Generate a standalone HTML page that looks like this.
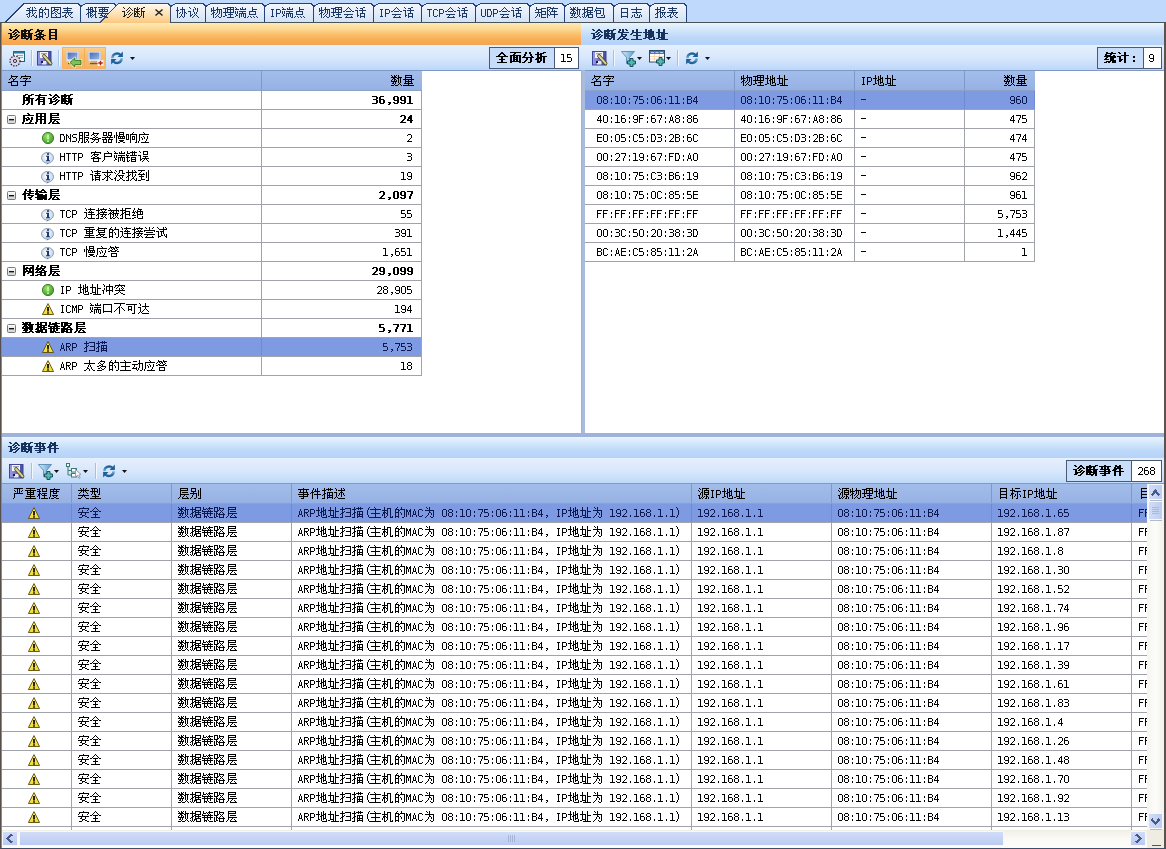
<!DOCTYPE html>
<html><head><meta charset="utf-8"><style>
html,body{margin:0;padding:0;width:1166px;height:849px;overflow:hidden;background:#bed9fc;font-family:"Liberation Sans",sans-serif}
.tl{position:absolute;left:0;top:0;width:1166px;height:849px;overflow:hidden}
.tl span{position:absolute;font:12px/12px "Liberation Mono",monospace;color:transparent;white-space:pre}
</style></head><body>
<svg width="1166" height="849" viewBox="0 0 1166 849" style="position:absolute;left:0;top:0">
<defs><linearGradient id="gOrange" x1="0" y1="0" x2="0" y2="1"><stop offset="0" stop-color="#fdebb8"/><stop offset="0.3" stop-color="#fcd68e"/><stop offset="0.6" stop-color="#fab862"/><stop offset="0.85" stop-color="#f9a84e"/><stop offset="1" stop-color="#eaa65e"/></linearGradient><linearGradient id="gLight" x1="0" y1="0" x2="0" y2="1"><stop offset="0" stop-color="#eaf4fd"/><stop offset="0.3" stop-color="#d4e7fb"/><stop offset="0.65" stop-color="#bdd8f9"/><stop offset="1" stop-color="#b5d3f8"/></linearGradient><linearGradient id="gTool" x1="0" y1="0" x2="0" y2="1"><stop offset="0" stop-color="#e6f0fd"/><stop offset="0.5" stop-color="#d8e7fc"/><stop offset="1" stop-color="#bcd8fa"/></linearGradient><linearGradient id="gTab" x1="0" y1="0" x2="0" y2="1"><stop offset="0" stop-color="#f3f7fd"/><stop offset="1" stop-color="#d3e2f7"/></linearGradient><linearGradient id="gTabAct" x1="0" y1="0" x2="0" y2="1"><stop offset="0" stop-color="#fefaf2"/><stop offset="0.5" stop-color="#fde3b8"/><stop offset="1" stop-color="#fcc57c"/></linearGradient><linearGradient id="gHdr" x1="0" y1="0" x2="0" y2="1"><stop offset="0" stop-color="#a3bdea"/><stop offset="1" stop-color="#95b1e4"/></linearGradient><linearGradient id="gBtn" x1="0" y1="0" x2="0" y2="1"><stop offset="0" stop-color="#fbcd8c"/><stop offset="0.4" stop-color="#f9bc68"/><stop offset="1" stop-color="#f8b45c"/></linearGradient><linearGradient id="gExp" x1="0" y1="0" x2="0" y2="1"><stop offset="0" stop-color="#ffffff"/><stop offset="1" stop-color="#d0d0d0"/></linearGradient><linearGradient id="gSbV" x1="0" y1="0" x2="1" y2="0"><stop offset="0" stop-color="#f6f4ee"/><stop offset="0.5" stop-color="#fcfcfa"/><stop offset="1" stop-color="#f3f1ea"/></linearGradient><linearGradient id="gSbH" x1="0" y1="0" x2="0" y2="1"><stop offset="0" stop-color="#f1eee4"/><stop offset="0.5" stop-color="#fbfaf6"/><stop offset="1" stop-color="#fdfcf8"/></linearGradient><linearGradient id="gSbBtnV" x1="0" y1="0" x2="1" y2="0"><stop offset="0" stop-color="#d2def8"/><stop offset="1" stop-color="#bccbf0"/></linearGradient><linearGradient id="gSbBtnH" x1="0" y1="0" x2="0" y2="1"><stop offset="0" stop-color="#d2def8"/><stop offset="1" stop-color="#b9c9f1"/></linearGradient>
<linearGradient id="gScr" x1="0" y1="0" x2="1" y2="1"><stop offset="0" stop-color="#4a68b8"/><stop offset="1" stop-color="#98b8ec"/></linearGradient>
<linearGradient id="gRef" x1="0" y1="0" x2="0" y2="1"><stop offset="0" stop-color="#1f5e96"/><stop offset="1" stop-color="#6fb4dc"/></linearGradient>
<linearGradient id="gRef2" x1="0" y1="0" x2="0" y2="1"><stop offset="0" stop-color="#6fb4dc"/><stop offset="1" stop-color="#1f5e96"/></linearGradient>
<radialGradient id="gOk" cx="0.4" cy="0.35" r="0.7"><stop offset="0" stop-color="#9ee070"/><stop offset="1" stop-color="#3f9a25"/></radialGradient><radialGradient id="gInfo" cx="0.45" cy="0.45" r="0.6"><stop offset="0" stop-color="#ffffff"/><stop offset="1" stop-color="#bfd2ea"/></radialGradient><linearGradient id="gWarn" x1="0" y1="0" x2="0" y2="1"><stop offset="0" stop-color="#fff27a"/><stop offset="1" stop-color="#eedc2a"/></linearGradient>
<linearGradient id="gFlop" x1="0" y1="0" x2="1" y2="0"><stop offset="0" stop-color="#9a9ee6"/><stop offset="1" stop-color="#444aa0"/></linearGradient>
<linearGradient id="gFun" x1="0" y1="0" x2="1" y2="0"><stop offset="0" stop-color="#d4ecfa"/><stop offset="1" stop-color="#5a9fd0"/></linearGradient>
<g id="ic_ok"><circle cx="6" cy="6" r="5.6" fill="url(#gOk)" stroke="#2f7a1a" stroke-width="0.9"/><rect x="5" y="2.5" width="2" height="5" fill="#b8f598"/><rect x="5" y="8.5" width="2" height="1.5" fill="#b8f598"/></g>
<g id="ic_info"><ellipse cx="6.5" cy="5.8" rx="6" ry="5.4" fill="url(#gInfo)" stroke="#8596ae" stroke-width="0.9"/><path d="M6.2 11 L5.5 12.8 L8 11" fill="#5a6f8a"/><rect x="6" y="1.2" width="2" height="1.6" fill="#1c3a6c"/><path d="M5 3.8 H8 V8.3 H9 V9.3 H5 V8.3 H6 V4.8 H5 Z" fill="#1c3a6c"/></g>
<g id="ic_warn"><path d="M6 0.6 L11.6 11.5 H0.4 Z" fill="url(#gWarn)" stroke="#5a4a0a" stroke-width="0.9" stroke-linejoin="round"/><rect x="5" y="4" width="2" height="4.5" fill="#2a2200"/><rect x="5" y="9.3" width="2" height="1.4" fill="#2a2200"/></g>
<g id="ic_save"><rect x="0.5" y="0.5" width="13.5" height="13.5" fill="url(#gFlop)" stroke="#3e4496"/><rect x="3" y="1" width="8" height="6" fill="#f6f6fa"/><rect x="4" y="2.3" width="6" height="0.9" fill="#7880a0"/><rect x="5" y="10" width="4.5" height="3.5" fill="#e6e8f2"/><rect x="4" y="10" width="2" height="2" fill="#141860"/><path d="M7 5 L13.6 12.4" stroke="#4a4418" stroke-width="3.6" stroke-linecap="round"/><path d="M7 5 L13.6 12.4" stroke="#ddd596" stroke-width="2" stroke-linecap="round"/></g>
<g id="ic_settings"><rect x="4.5" y="0.5" width="11" height="10" fill="#eef5fb" stroke="#1f5f80"/><rect x="4.5" y="0.5" width="11" height="2" fill="#2a7aa0"/><rect x="8" y="4" width="6" height="1" fill="#8ab"/><rect x="8" y="6" width="6" height="1" fill="#8ab"/><circle cx="6" cy="10" r="5" fill="#dcd4f0" stroke="#222" stroke-width="1.2" stroke-dasharray="1.4 1.3"/><circle cx="6" cy="10" r="1.6" fill="none" stroke="#333" stroke-width="1"/></g>
<g id="ic_mon"><rect x="0.5" y="0.5" width="12" height="9.5" fill="#fafafa" stroke="#d0d0d0"/><rect x="1.5" y="1.5" width="10" height="7" fill="url(#gScr)"/><rect x="3" y="10.5" width="6" height="1" fill="#9a9a9a"/><rect x="2" y="12" width="8" height="1.2" fill="#5a5a5a"/></g>
<g id="ic_mon_arrow"><use href="#ic_mon"/><path d="M4 11.5 L8.8 6.8 V9.3 H15 V13.7 H8.8 V16.2 Z" fill="none" stroke="#fffbe8" stroke-width="2.2" stroke-linejoin="round"/><path d="M4 11.5 L8.8 6.8 V9.3 H15 V13.7 H8.8 V16.2 Z" fill="#7cc454" stroke="#2f6a1a" stroke-width="0.9" stroke-linejoin="round"/></g>
<g id="ic_mon_cross"><use href="#ic_mon"/><rect x="9.5" y="9" width="6" height="6" fill="#f4f4f4"/><path d="M12.5 9.8 V14.2 M10.3 12 H14.7" stroke="#b81c1c" stroke-width="1.3"/></g>
<g id="ic_refresh"><path d="M2.4 7.2 A4.6 4.6 0 0 1 10.5 4.1" stroke="url(#gRef)" stroke-width="2.4" fill="none"/><path d="M12.9 0.5 V5.9 H7.5 Z" fill="#1d5f98"/><path d="M11.6 7.3 A4.6 4.6 0 0 1 3.5 10.4" stroke="url(#gRef2)" stroke-width="2.4" fill="none"/><path d="M1.1 8.1 H6.5 L1.1 13.5 Z" fill="#1d5f98"/></g>
<g id="ic_drop"><path d="M0 0 H5 L2.5 3 Z" fill="#111"/></g>
<g id="ic_filter"><path d="M0.5 0.5 H13.5 L8.5 6.5 V11 L5.5 12.5 V6.5 Z" fill="url(#gFun)" stroke="#5a8ab0" stroke-width="0.9" stroke-linejoin="round"/><path d="M9 7.5 h3 v2.5 h2.5 v3 h-2.5 v2.5 h-3 v-2.5 h-2.5 v-3 h2.5 z" fill="#52b8b4" stroke="#17505a" stroke-width="1"/></g>
<g id="ic_table"><rect x="0.5" y="0.5" width="15" height="11.5" fill="#fff" stroke="#2f4a66"/><rect x="1" y="1" width="14" height="3" fill="#3f7ac8"/><path d="M2 2.5 H5 M6.5 2.5 H9.5 M11 2.5 H14" stroke="#cfe2f8" stroke-width="0.8"/><path d="M1 6.5 H15 M1 9 H15 M5.5 4 V12 M10.5 4 V12" stroke="#f2cfae" stroke-width="0.8"/><path d="M10 7.5 h3 v2.5 h2.5 v3 h-2.5 v2.5 h-3 v-2.5 h-2.5 v-3 h2.5 z" fill="#52b8b4" stroke="#17505a" stroke-width="1"/></g>
<g id="ic_hier"><rect x="0.5" y="0.5" width="3" height="3" fill="#fff" stroke="#3a7a70"/><path d="M2 3.5 V12 H5 M2 7.5 H5" stroke="#3a7a70" fill="none"/><rect x="5.5" y="5.5" width="5" height="3.5" fill="#fff" stroke="#3a7a70"/><rect x="5.5" y="10.5" width="5" height="3.5" fill="#fff" stroke="#3a7a70"/><path d="M9.5 6.5 V14 L11.5 12.5 L13 15.5 L14.2 14.8 L12.8 12 L15 11.5 Z" fill="#f2f4f8" stroke="#8a98a8" stroke-width="0.9" stroke-linejoin="round"/></g>
<path shape-rendering="crispEdges" id="r6211" d="M4 -10h1v1h-1zM6 -10h1v1h-1zM8 -10h1v1h-1zM1 -9h3v1h-3zM6 -9h1v1h-1zM9 -9h1v1h-1zM3 -8h1v1h-1zM6 -8h1v1h-1zM0 -7h11v1h-11zM3 -6h1v1h-1zM6 -6h1v1h-1zM3 -5h2v1h-2zM6 -5h1v1h-1zM9 -5h1v1h-1zM2 -4h2v1h-2zM6 -4h1v1h-1zM8 -4h1v1h-1zM0 -3h2v1h-2zM3 -3h1v1h-1zM7 -3h1v1h-1zM3 -2h1v1h-1zM6 -2h2v1h-2zM10 -2h1v1h-1zM1 -1h1v1h-1zM3 -1h1v1h-1zM5 -1h1v1h-1zM8 -1h1v1h-1zM10 -1h1v1h-1zM2 0h1v1h-1zM9 0h2v1h-2z"/><path shape-rendering="crispEdges" id="r7684" d="M3 -10h1v1h-1zM7 -10h1v1h-1zM2 -9h1v1h-1zM7 -9h1v1h-1zM1 -8h4v1h-4zM6 -8h5v1h-5zM1 -7h1v1h-1zM4 -7h2v1h-2zM10 -7h1v1h-1zM1 -6h1v1h-1zM4 -6h1v1h-1zM10 -6h1v1h-1zM1 -5h4v1h-4zM6 -5h1v1h-1zM10 -5h1v1h-1zM1 -4h1v1h-1zM4 -4h1v1h-1zM7 -4h1v1h-1zM10 -4h1v1h-1zM1 -3h1v1h-1zM4 -3h1v1h-1zM7 -3h1v1h-1zM10 -3h1v1h-1zM1 -2h1v1h-1zM4 -2h1v1h-1zM10 -2h1v1h-1zM1 -1h4v1h-4zM10 -1h1v1h-1zM1 0h1v1h-1zM4 0h1v1h-1zM8 0h2v1h-2z"/><path shape-rendering="crispEdges" id="r56fe" d="M1 -10h10v1h-10zM1 -9h1v1h-1zM4 -9h1v1h-1zM10 -9h1v1h-1zM1 -8h1v1h-1zM4 -8h5v1h-5zM10 -8h1v1h-1zM1 -7h1v1h-1zM3 -7h2v1h-2zM7 -7h1v1h-1zM10 -7h1v1h-1zM1 -6h2v1h-2zM5 -6h2v1h-2zM10 -6h1v1h-1zM1 -5h1v1h-1zM4 -5h1v1h-1zM7 -5h1v1h-1zM10 -5h1v1h-1zM1 -4h3v1h-3zM5 -4h1v1h-1zM8 -4h3v1h-3zM1 -3h1v1h-1zM6 -3h1v1h-1zM10 -3h1v1h-1zM1 -2h1v1h-1zM5 -2h1v1h-1zM10 -2h1v1h-1zM1 -1h1v1h-1zM6 -1h1v1h-1zM10 -1h1v1h-1zM1 0h10v1h-10z"/><path shape-rendering="crispEdges" id="r8868" d="M5 -10h1v1h-1zM1 -9h9v1h-9zM5 -8h1v1h-1zM2 -7h7v1h-7zM5 -6h1v1h-1zM0 -5h11v1h-11zM4 -4h1v1h-1zM6 -4h1v1h-1zM9 -4h1v1h-1zM3 -3h1v1h-1zM6 -3h1v1h-1zM8 -3h1v1h-1zM2 -2h2v1h-2zM7 -2h1v1h-1zM0 -1h2v1h-2zM3 -1h1v1h-1zM5 -1h1v1h-1zM8 -1h1v1h-1zM3 0h2v1h-2zM9 0h2v1h-2z"/><path shape-rendering="crispEdges" id="r6982" d="M2 -10h1v1h-1zM4 -10h3v1h-3zM8 -10h3v1h-3zM2 -9h1v1h-1zM4 -9h1v1h-1zM6 -9h1v1h-1zM9 -9h1v1h-1zM0 -8h7v1h-7zM9 -8h1v1h-1zM2 -7h1v1h-1zM4 -7h1v1h-1zM6 -7h2v1h-2zM9 -7h1v1h-1zM2 -6h1v1h-1zM4 -6h7v1h-7zM2 -5h3v1h-3zM6 -5h1v1h-1zM9 -5h1v1h-1zM1 -4h2v1h-2zM4 -4h2v1h-2zM9 -4h1v1h-1zM0 -3h1v1h-1zM2 -3h1v1h-1zM4 -3h1v1h-1zM6 -3h1v1h-1zM8 -3h2v1h-2zM2 -2h1v1h-1zM4 -2h2v1h-2zM7 -2h1v1h-1zM9 -2h1v1h-1zM2 -1h1v1h-1zM4 -1h1v1h-1zM6 -1h1v1h-1zM9 -1h1v1h-1zM2 0h1v1h-1zM5 0h1v1h-1zM9 0h2v1h-2z"/><path shape-rendering="crispEdges" id="r8981" d="M0 -10h11v1h-11zM4 -9h1v1h-1zM6 -9h1v1h-1zM1 -8h9v1h-9zM1 -7h1v1h-1zM4 -7h1v1h-1zM6 -7h1v1h-1zM9 -7h1v1h-1zM1 -6h9v1h-9zM4 -5h1v1h-1zM0 -4h11v1h-11zM3 -3h1v1h-1zM7 -3h1v1h-1zM2 -2h3v1h-3zM6 -2h1v1h-1zM4 -1h4v1h-4zM1 0h3v1h-3zM8 0h2v1h-2z"/><path shape-rendering="crispEdges" id="r534f" d="M1 -10h1v1h-1zM6 -10h1v1h-1zM1 -9h1v1h-1zM6 -9h1v1h-1zM1 -8h1v1h-1zM4 -8h5v1h-5zM0 -7h3v1h-3zM6 -7h1v1h-1zM8 -7h1v1h-1zM1 -6h1v1h-1zM6 -6h1v1h-1zM8 -6h1v1h-1zM1 -5h1v1h-1zM4 -5h1v1h-1zM6 -5h1v1h-1zM8 -5h2v1h-2zM1 -4h1v1h-1zM3 -4h1v1h-1zM6 -4h1v1h-1zM8 -4h1v1h-1zM10 -4h1v1h-1zM1 -3h1v1h-1zM5 -3h1v1h-1zM8 -3h1v1h-1zM1 -2h1v1h-1zM5 -2h1v1h-1zM8 -2h1v1h-1zM1 -1h1v1h-1zM4 -1h1v1h-1zM6 -1h1v1h-1zM8 -1h1v1h-1zM1 0h1v1h-1zM3 0h1v1h-1zM7 0h1v1h-1z"/><path shape-rendering="crispEdges" id="r8bae" d="M1 -10h1v1h-1zM6 -10h1v1h-1zM2 -9h1v1h-1zM7 -9h1v1h-1zM9 -9h1v1h-1zM5 -8h1v1h-1zM7 -8h1v1h-1zM9 -8h1v1h-1zM5 -7h1v1h-1zM9 -7h1v1h-1zM0 -6h3v1h-3zM5 -6h1v1h-1zM9 -6h1v1h-1zM2 -5h1v1h-1zM6 -5h1v1h-1zM8 -5h1v1h-1zM2 -4h1v1h-1zM6 -4h1v1h-1zM8 -4h1v1h-1zM2 -3h1v1h-1zM4 -3h1v1h-1zM7 -3h1v1h-1zM2 -2h2v1h-2zM6 -2h1v1h-1zM8 -2h1v1h-1zM2 -1h1v1h-1zM5 -1h1v1h-1zM9 -1h1v1h-1zM4 0h1v1h-1zM10 0h1v1h-1z"/><path shape-rendering="crispEdges" id="r7269" d="M2 -10h1v1h-1zM6 -10h1v1h-1zM0 -9h1v1h-1zM2 -9h1v1h-1zM6 -9h1v1h-1zM0 -8h1v1h-1zM2 -8h1v1h-1zM5 -8h6v1h-6zM0 -7h5v1h-5zM6 -7h1v1h-1zM8 -7h1v1h-1zM10 -7h1v1h-1zM0 -6h1v1h-1zM2 -6h1v1h-1zM6 -6h1v1h-1zM8 -6h1v1h-1zM10 -6h1v1h-1zM2 -5h2v1h-2zM6 -5h1v1h-1zM8 -5h1v1h-1zM10 -5h1v1h-1zM1 -4h2v1h-2zM5 -4h1v1h-1zM8 -4h1v1h-1zM10 -4h1v1h-1zM0 -3h1v1h-1zM2 -3h1v1h-1zM4 -3h1v1h-1zM7 -3h1v1h-1zM10 -3h1v1h-1zM2 -2h1v1h-1zM6 -2h1v1h-1zM10 -2h1v1h-1zM2 -1h1v1h-1zM5 -1h1v1h-1zM7 -1h1v1h-1zM10 -1h1v1h-1zM2 0h1v1h-1zM4 0h1v1h-1zM8 0h2v1h-2z"/><path shape-rendering="crispEdges" id="r7406" d="M4 -10h7v1h-7zM0 -9h5v1h-5zM7 -9h1v1h-1zM10 -9h1v1h-1zM2 -8h1v1h-1zM4 -8h7v1h-7zM2 -7h1v1h-1zM4 -7h1v1h-1zM7 -7h1v1h-1zM10 -7h1v1h-1zM2 -6h1v1h-1zM4 -6h1v1h-1zM7 -6h1v1h-1zM10 -6h1v1h-1zM0 -5h11v1h-11zM2 -4h1v1h-1zM7 -4h1v1h-1zM2 -3h1v1h-1zM5 -3h5v1h-5zM2 -2h2v1h-2zM7 -2h1v1h-1zM0 -1h2v1h-2zM7 -1h1v1h-1zM4 0h7v1h-7z"/><path shape-rendering="crispEdges" id="r7aef" d="M0 -10h1v1h-1zM7 -10h1v1h-1zM1 -9h1v1h-1zM5 -9h1v1h-1zM7 -9h1v1h-1zM10 -9h1v1h-1zM0 -8h4v1h-4zM5 -8h6v1h-6zM0 -6h1v1h-1zM2 -6h1v1h-1zM4 -6h7v1h-7zM0 -5h1v1h-1zM2 -5h1v1h-1zM7 -5h1v1h-1zM0 -4h1v1h-1zM2 -4h1v1h-1zM4 -4h7v1h-7zM1 -3h1v1h-1zM4 -3h1v1h-1zM6 -3h1v1h-1zM8 -3h1v1h-1zM10 -3h1v1h-1zM1 -2h2v1h-2zM4 -2h1v1h-1zM6 -2h1v1h-1zM8 -2h1v1h-1zM10 -2h1v1h-1zM0 -1h1v1h-1zM4 -1h1v1h-1zM6 -1h1v1h-1zM8 -1h1v1h-1zM10 -1h1v1h-1zM4 0h1v1h-1zM9 0h2v1h-2z"/><path shape-rendering="crispEdges" id="r70b9" d="M5 -10h1v1h-1zM5 -9h1v1h-1zM5 -8h5v1h-5zM5 -7h1v1h-1zM2 -6h7v1h-7zM2 -5h1v1h-1zM8 -5h1v1h-1zM2 -4h1v1h-1zM8 -4h1v1h-1zM2 -3h7v1h-7zM1 -1h1v1h-1zM3 -1h1v1h-1zM6 -1h1v1h-1zM9 -1h1v1h-1zM0 0h1v1h-1zM4 0h1v1h-1zM7 0h1v1h-1zM10 0h1v1h-1z"/><path shape-rendering="crispEdges" id="r49" d="M1 -8h3v1h-3zM2 -7h1v1h-1zM2 -6h1v1h-1zM2 -5h1v1h-1zM2 -4h1v1h-1zM2 -3h1v1h-1zM2 -2h1v1h-1zM1 -1h3v1h-3z"/><path shape-rendering="crispEdges" id="r50" d="M0 -8h4v1h-4zM0 -7h1v1h-1zM4 -7h1v1h-1zM0 -6h1v1h-1zM4 -6h1v1h-1zM0 -5h1v1h-1zM4 -5h1v1h-1zM0 -4h4v1h-4zM0 -3h1v1h-1zM0 -2h1v1h-1zM0 -1h1v1h-1z"/><path shape-rendering="crispEdges" id="r4f1a" d="M5 -10h1v1h-1zM4 -9h1v1h-1zM6 -9h1v1h-1zM3 -8h1v1h-1zM7 -8h1v1h-1zM2 -7h1v1h-1zM8 -7h1v1h-1zM0 -6h2v1h-2zM3 -6h5v1h-5zM9 -6h2v1h-2zM1 -3h9v1h-9zM4 -2h1v1h-1zM3 -1h1v1h-1zM8 -1h1v1h-1zM2 0h8v1h-8z"/><path shape-rendering="crispEdges" id="r8bdd" d="M1 -10h1v1h-1zM8 -10h2v1h-2zM2 -9h1v1h-1zM5 -9h3v1h-3zM7 -8h1v1h-1zM0 -7h3v1h-3zM4 -7h7v1h-7zM2 -6h1v1h-1zM7 -6h1v1h-1zM2 -5h1v1h-1zM7 -5h1v1h-1zM2 -4h1v1h-1zM5 -4h5v1h-5zM2 -3h1v1h-1zM5 -3h1v1h-1zM9 -3h1v1h-1zM2 -2h2v1h-2zM5 -2h1v1h-1zM9 -2h1v1h-1zM2 -1h1v1h-1zM5 -1h5v1h-5zM5 0h1v1h-1zM9 0h1v1h-1z"/><path shape-rendering="crispEdges" id="r54" d="M0 -8h5v1h-5zM2 -7h1v1h-1zM2 -6h1v1h-1zM2 -5h1v1h-1zM2 -4h1v1h-1zM2 -3h1v1h-1zM2 -2h1v1h-1zM2 -1h1v1h-1z"/><path shape-rendering="crispEdges" id="r43" d="M1 -8h3v1h-3zM0 -7h1v1h-1zM4 -7h1v1h-1zM0 -6h1v1h-1zM0 -5h1v1h-1zM0 -4h1v1h-1zM0 -3h1v1h-1zM0 -2h1v1h-1zM4 -2h1v1h-1zM1 -1h3v1h-3z"/><path shape-rendering="crispEdges" id="r55" d="M0 -8h1v1h-1zM4 -8h1v1h-1zM0 -7h1v1h-1zM4 -7h1v1h-1zM0 -6h1v1h-1zM4 -6h1v1h-1zM0 -5h1v1h-1zM4 -5h1v1h-1zM0 -4h1v1h-1zM4 -4h1v1h-1zM0 -3h1v1h-1zM4 -3h1v1h-1zM0 -2h1v1h-1zM4 -2h1v1h-1zM1 -1h3v1h-3z"/><path shape-rendering="crispEdges" id="r44" d="M0 -8h4v1h-4zM0 -7h1v1h-1zM3 -7h1v1h-1zM0 -6h1v1h-1zM4 -6h1v1h-1zM0 -5h1v1h-1zM4 -5h1v1h-1zM0 -4h1v1h-1zM4 -4h1v1h-1zM0 -3h1v1h-1zM4 -3h1v1h-1zM0 -2h1v1h-1zM3 -2h1v1h-1zM0 -1h4v1h-4z"/><path shape-rendering="crispEdges" id="r77e9" d="M1 -10h1v1h-1zM1 -9h1v1h-1zM6 -9h5v1h-5zM1 -8h6v1h-6zM0 -7h1v1h-1zM3 -7h1v1h-1zM6 -7h1v1h-1zM3 -6h1v1h-1zM6 -6h5v1h-5zM0 -5h7v1h-7zM10 -5h1v1h-1zM3 -4h1v1h-1zM6 -4h1v1h-1zM10 -4h1v1h-1zM2 -3h1v1h-1zM4 -3h1v1h-1zM6 -3h5v1h-5zM2 -2h1v1h-1zM4 -2h1v1h-1zM6 -2h1v1h-1zM1 -1h1v1h-1zM4 -1h1v1h-1zM6 -1h1v1h-1zM0 0h1v1h-1zM6 0h5v1h-5z"/><path shape-rendering="crispEdges" id="r9635" d="M0 -10h4v1h-4zM6 -10h1v1h-1zM0 -9h1v1h-1zM3 -9h8v1h-8zM0 -8h1v1h-1zM2 -8h1v1h-1zM5 -8h1v1h-1zM0 -7h2v1h-2zM5 -7h1v1h-1zM7 -7h1v1h-1zM0 -6h1v1h-1zM2 -6h1v1h-1zM4 -6h6v1h-6zM0 -5h1v1h-1zM3 -5h1v1h-1zM7 -5h1v1h-1zM0 -4h1v1h-1zM3 -4h1v1h-1zM7 -4h1v1h-1zM0 -3h2v1h-2zM3 -3h8v1h-8zM0 -2h1v1h-1zM2 -2h1v1h-1zM7 -2h1v1h-1zM0 -1h1v1h-1zM7 -1h1v1h-1zM0 0h1v1h-1zM7 0h1v1h-1z"/><path shape-rendering="crispEdges" id="r6570" d="M0 -10h1v1h-1zM3 -10h1v1h-1zM5 -10h1v1h-1zM7 -10h1v1h-1zM1 -9h1v1h-1zM3 -9h2v1h-2zM7 -9h1v1h-1zM0 -8h6v1h-6zM7 -8h4v1h-4zM2 -7h2v1h-2zM6 -7h2v1h-2zM9 -7h1v1h-1zM1 -6h1v1h-1zM3 -6h2v1h-2zM7 -6h1v1h-1zM9 -6h1v1h-1zM0 -5h1v1h-1zM3 -5h1v1h-1zM5 -5h1v1h-1zM7 -5h1v1h-1zM9 -5h1v1h-1zM0 -4h6v1h-6zM7 -4h1v1h-1zM9 -4h1v1h-1zM2 -3h1v1h-1zM4 -3h1v1h-1zM7 -3h1v1h-1zM9 -3h1v1h-1zM1 -2h2v1h-2zM4 -2h1v1h-1zM8 -2h1v1h-1zM3 -1h1v1h-1zM7 -1h1v1h-1zM9 -1h1v1h-1zM0 0h3v1h-3zM4 0h3v1h-3zM10 0h1v1h-1z"/><path shape-rendering="crispEdges" id="r636e" d="M2 -10h1v1h-1zM5 -10h6v1h-6zM2 -9h1v1h-1zM5 -9h1v1h-1zM10 -9h1v1h-1zM0 -8h6v1h-6zM10 -8h1v1h-1zM2 -7h1v1h-1zM5 -7h6v1h-6zM2 -6h1v1h-1zM4 -6h2v1h-2zM8 -6h1v1h-1zM2 -5h2v1h-2zM5 -5h6v1h-6zM1 -4h2v1h-2zM5 -4h1v1h-1zM8 -4h1v1h-1zM0 -3h1v1h-1zM2 -3h1v1h-1zM5 -3h6v1h-6zM2 -2h1v1h-1zM4 -2h3v1h-3zM10 -2h1v1h-1zM0 -1h1v1h-1zM2 -1h1v1h-1zM4 -1h1v1h-1zM6 -1h1v1h-1zM10 -1h1v1h-1zM1 0h1v1h-1zM3 0h1v1h-1zM6 0h5v1h-5z"/><path shape-rendering="crispEdges" id="r5305" d="M2 -10h1v1h-1zM2 -9h8v1h-8zM1 -8h1v1h-1zM9 -8h1v1h-1zM1 -7h6v1h-6zM9 -7h1v1h-1zM0 -6h1v1h-1zM2 -6h1v1h-1zM6 -6h1v1h-1zM9 -6h1v1h-1zM2 -5h1v1h-1zM6 -5h1v1h-1zM9 -5h1v1h-1zM2 -4h5v1h-5zM9 -4h1v1h-1zM2 -3h1v1h-1zM9 -3h1v1h-1zM2 -2h1v1h-1zM7 -2h2v1h-2zM10 -2h1v1h-1zM2 -1h1v1h-1zM10 -1h1v1h-1zM3 0h8v1h-8z"/><path shape-rendering="crispEdges" id="r65e5" d="M2 -9h7v1h-7zM2 -8h1v1h-1zM8 -8h1v1h-1zM2 -7h1v1h-1zM8 -7h1v1h-1zM2 -6h1v1h-1zM8 -6h1v1h-1zM2 -5h7v1h-7zM2 -4h1v1h-1zM8 -4h1v1h-1zM2 -3h1v1h-1zM8 -3h1v1h-1zM2 -2h1v1h-1zM8 -2h1v1h-1zM2 -1h7v1h-7zM2 0h1v1h-1zM8 0h1v1h-1z"/><path shape-rendering="crispEdges" id="r5fd7" d="M5 -10h1v1h-1zM5 -9h1v1h-1zM0 -8h11v1h-11zM5 -7h1v1h-1zM5 -6h1v1h-1zM1 -5h9v1h-9zM5 -4h1v1h-1zM3 -3h1v1h-1zM6 -3h1v1h-1zM9 -3h1v1h-1zM1 -2h1v1h-1zM3 -2h1v1h-1zM6 -2h1v1h-1zM8 -2h1v1h-1zM10 -2h1v1h-1zM1 -1h1v1h-1zM3 -1h1v1h-1zM8 -1h1v1h-1zM10 -1h1v1h-1zM0 0h1v1h-1zM4 0h5v1h-5z"/><path shape-rendering="crispEdges" id="r62a5" d="M2 -10h1v1h-1zM5 -10h5v1h-5zM2 -9h1v1h-1zM5 -9h1v1h-1zM9 -9h1v1h-1zM0 -8h6v1h-6zM9 -8h1v1h-1zM2 -7h1v1h-1zM5 -7h1v1h-1zM7 -7h2v1h-2zM2 -6h1v1h-1zM4 -6h2v1h-2zM2 -5h2v1h-2zM5 -5h6v1h-6zM1 -4h2v1h-2zM5 -4h1v1h-1zM7 -4h1v1h-1zM9 -4h1v1h-1zM0 -3h1v1h-1zM2 -3h1v1h-1zM5 -3h1v1h-1zM7 -3h1v1h-1zM9 -3h1v1h-1zM2 -2h1v1h-1zM5 -2h1v1h-1zM8 -2h1v1h-1zM2 -1h1v1h-1zM5 -1h1v1h-1zM7 -1h1v1h-1zM9 -1h1v1h-1zM0 0h3v1h-3zM5 0h2v1h-2zM10 0h1v1h-1z"/><path shape-rendering="crispEdges" id="r8bca" d="M1 -10h1v1h-1zM7 -10h1v1h-1zM2 -9h1v1h-1zM6 -9h1v1h-1zM8 -9h1v1h-1zM5 -8h1v1h-1zM9 -8h1v1h-1zM4 -7h1v1h-1zM7 -7h1v1h-1zM10 -7h1v1h-1zM0 -6h3v1h-3zM6 -6h1v1h-1zM2 -5h1v1h-1zM5 -5h1v1h-1zM8 -5h1v1h-1zM2 -4h1v1h-1zM7 -4h1v1h-1zM10 -4h1v1h-1zM2 -3h1v1h-1zM4 -3h1v1h-1zM6 -3h1v1h-1zM9 -3h1v1h-1zM2 -2h2v1h-2zM8 -2h1v1h-1zM1 -1h2v1h-2zM7 -1h1v1h-1zM5 0h2v1h-2z"/><path shape-rendering="crispEdges" id="r65ad" d="M3 -10h1v1h-1zM9 -10h2v1h-2zM0 -9h2v1h-2zM3 -9h1v1h-1zM5 -9h1v1h-1zM7 -9h2v1h-2zM0 -8h1v1h-1zM2 -8h3v1h-3zM7 -8h1v1h-1zM0 -7h1v1h-1zM3 -7h1v1h-1zM7 -7h1v1h-1zM0 -6h6v1h-6zM7 -6h4v1h-4zM0 -5h1v1h-1zM2 -5h2v1h-2zM7 -5h1v1h-1zM9 -5h1v1h-1zM0 -4h2v1h-2zM3 -4h2v1h-2zM7 -4h1v1h-1zM9 -4h1v1h-1zM0 -3h2v1h-2zM3 -3h1v1h-1zM5 -3h1v1h-1zM7 -3h1v1h-1zM9 -3h1v1h-1zM0 -2h1v1h-1zM3 -2h1v1h-1zM7 -2h1v1h-1zM9 -2h1v1h-1zM0 -1h5v1h-5zM6 -1h1v1h-1zM9 -1h1v1h-1zM5 0h1v1h-1zM9 0h1v1h-1z"/><path shape-rendering="crispEdges" id="b8bca" d="M1 -10h2v1h-2zM7 -10h2v1h-2zM2 -9h2v1h-2zM6 -9h4v1h-4zM5 -8h2v1h-2zM9 -8h2v1h-2zM4 -7h2v1h-2zM7 -7h2v1h-2zM10 -7h2v1h-2zM0 -6h4v1h-4zM6 -6h2v1h-2zM2 -5h2v1h-2zM5 -5h2v1h-2zM8 -5h2v1h-2zM2 -4h2v1h-2zM7 -4h2v1h-2zM10 -4h2v1h-2zM2 -3h6v1h-6zM9 -3h2v1h-2zM2 -2h3v1h-3zM8 -2h2v1h-2zM1 -1h3v1h-3zM7 -1h2v1h-2zM5 0h3v1h-3z"/><path shape-rendering="crispEdges" id="b65ad" d="M3 -10h2v1h-2zM9 -10h3v1h-3zM0 -9h10v1h-10zM0 -8h6v1h-6zM7 -8h2v1h-2zM0 -7h2v1h-2zM3 -7h2v1h-2zM7 -7h2v1h-2zM0 -6h12v1h-12zM0 -5h5v1h-5zM7 -5h4v1h-4zM0 -4h6v1h-6zM7 -4h4v1h-4zM0 -3h11v1h-11zM0 -2h2v1h-2zM3 -2h2v1h-2zM7 -2h4v1h-4zM0 -1h8v1h-8zM9 -1h2v1h-2zM5 0h2v1h-2zM9 0h2v1h-2z"/><path shape-rendering="crispEdges" id="b6761" d="M3 -10h2v1h-2zM3 -9h7v1h-7zM2 -8h4v1h-4zM7 -8h2v1h-2zM1 -7h2v1h-2zM5 -7h3v1h-3zM4 -6h4v1h-4zM2 -5h8v1h-8zM0 -4h3v1h-3zM5 -4h2v1h-2zM9 -4h3v1h-3zM2 -3h8v1h-8zM3 -2h6v1h-6zM2 -1h2v1h-2zM5 -1h2v1h-2zM8 -1h2v1h-2zM0 0h7v1h-7zM9 0h2v1h-2z"/><path shape-rendering="crispEdges" id="b76ee" d="M2 -10h8v1h-8zM2 -9h2v1h-2zM8 -9h2v1h-2zM2 -8h2v1h-2zM8 -8h2v1h-2zM2 -7h8v1h-8zM2 -6h2v1h-2zM8 -6h2v1h-2zM2 -5h2v1h-2zM8 -5h2v1h-2zM2 -4h8v1h-8zM2 -3h2v1h-2zM8 -3h2v1h-2zM2 -2h2v1h-2zM8 -2h2v1h-2zM2 -1h8v1h-8zM2 0h2v1h-2zM8 0h2v1h-2z"/><path shape-rendering="crispEdges" id="b5168" d="M5 -10h2v1h-2zM4 -9h4v1h-4zM3 -8h2v1h-2zM7 -8h2v1h-2zM2 -7h2v1h-2zM8 -7h2v1h-2zM0 -6h12v1h-12zM5 -5h2v1h-2zM5 -4h2v1h-2zM3 -3h6v1h-6zM5 -2h2v1h-2zM5 -1h2v1h-2zM1 0h10v1h-10z"/><path shape-rendering="crispEdges" id="b9762" d="M1 -10h11v1h-11zM5 -9h2v1h-2zM4 -8h2v1h-2zM1 -7h11v1h-11zM1 -6h2v1h-2zM4 -6h2v1h-2zM7 -6h2v1h-2zM10 -6h2v1h-2zM1 -5h2v1h-2zM4 -5h5v1h-5zM10 -5h2v1h-2zM1 -4h2v1h-2zM4 -4h2v1h-2zM7 -4h2v1h-2zM10 -4h2v1h-2zM1 -3h2v1h-2zM4 -3h5v1h-5zM10 -3h2v1h-2zM1 -2h2v1h-2zM4 -2h2v1h-2zM7 -2h2v1h-2zM10 -2h2v1h-2zM1 -1h11v1h-11zM1 0h2v1h-2zM10 0h2v1h-2z"/><path shape-rendering="crispEdges" id="b5206" d="M3 -10h2v1h-2zM7 -10h2v1h-2zM3 -9h2v1h-2zM7 -9h2v1h-2zM2 -8h2v1h-2zM8 -8h2v1h-2zM2 -7h2v1h-2zM8 -7h2v1h-2zM1 -6h2v1h-2zM9 -6h2v1h-2zM0 -5h12v1h-12zM4 -4h2v1h-2zM8 -4h2v1h-2zM4 -3h2v1h-2zM8 -3h2v1h-2zM3 -2h2v1h-2zM8 -2h2v1h-2zM2 -1h2v1h-2zM8 -1h2v1h-2zM0 0h3v1h-3zM6 0h3v1h-3z"/><path shape-rendering="crispEdges" id="b6790" d="M2 -10h2v1h-2zM8 -10h3v1h-3zM2 -9h2v1h-2zM5 -9h4v1h-4zM0 -8h7v1h-7zM2 -7h2v1h-2zM5 -7h2v1h-2zM2 -6h2v1h-2zM5 -6h7v1h-7zM2 -5h5v1h-5zM8 -5h2v1h-2zM1 -4h6v1h-6zM8 -4h2v1h-2zM0 -3h4v1h-4zM5 -3h2v1h-2zM8 -3h2v1h-2zM2 -2h2v1h-2zM5 -2h2v1h-2zM8 -2h2v1h-2zM2 -1h4v1h-4zM8 -1h2v1h-2zM2 0h3v1h-3zM8 0h2v1h-2z"/><path shape-rendering="crispEdges" id="r31" d="M0 -8h3v1h-3zM2 -7h1v1h-1zM2 -6h1v1h-1zM2 -5h1v1h-1zM2 -4h1v1h-1zM2 -3h1v1h-1zM2 -2h1v1h-1zM0 -1h5v1h-5z"/><path shape-rendering="crispEdges" id="r35" d="M0 -8h4v1h-4zM0 -7h1v1h-1zM0 -6h1v1h-1zM0 -5h4v1h-4zM4 -4h1v1h-1zM4 -3h1v1h-1zM4 -2h1v1h-1zM0 -1h4v1h-4z"/><path shape-rendering="crispEdges" id="r540d" d="M3 -10h1v1h-1zM3 -9h7v1h-7zM3 -8h1v1h-1zM8 -8h1v1h-1zM2 -7h1v1h-1zM4 -7h1v1h-1zM7 -7h1v1h-1zM1 -6h1v1h-1zM5 -6h2v1h-2zM5 -5h1v1h-1zM3 -4h7v1h-7zM0 -3h4v1h-4zM9 -3h1v1h-1zM3 -2h1v1h-1zM9 -2h1v1h-1zM3 -1h1v1h-1zM9 -1h1v1h-1zM3 0h7v1h-7z"/><path shape-rendering="crispEdges" id="r5b57" d="M5 -10h1v1h-1zM1 -9h10v1h-10zM1 -8h1v1h-1zM10 -8h1v1h-1zM0 -7h1v1h-1zM3 -7h5v1h-5zM9 -7h1v1h-1zM6 -6h1v1h-1zM5 -5h1v1h-1zM0 -4h11v1h-11zM5 -3h1v1h-1zM5 -2h1v1h-1zM5 -1h1v1h-1zM3 0h3v1h-3z"/><path shape-rendering="crispEdges" id="r91cf" d="M2 -10h7v1h-7zM2 -9h1v1h-1zM8 -9h1v1h-1zM2 -8h7v1h-7zM2 -7h1v1h-1zM8 -7h1v1h-1zM0 -6h11v1h-11zM2 -5h1v1h-1zM5 -5h1v1h-1zM8 -5h1v1h-1zM2 -4h7v1h-7zM2 -3h1v1h-1zM5 -3h1v1h-1zM8 -3h1v1h-1zM1 -2h9v1h-9zM5 -1h1v1h-1zM0 0h11v1h-11z"/><path shape-rendering="crispEdges" id="b6240" d="M3 -10h3v1h-3zM9 -10h3v1h-3zM1 -9h3v1h-3zM6 -9h4v1h-4zM1 -8h2v1h-2zM6 -8h2v1h-2zM1 -7h7v1h-7zM1 -6h2v1h-2zM4 -6h8v1h-8zM1 -5h2v1h-2zM4 -5h4v1h-4zM9 -5h2v1h-2zM1 -4h7v1h-7zM9 -4h2v1h-2zM1 -3h2v1h-2zM6 -3h2v1h-2zM9 -3h2v1h-2zM1 -2h2v1h-2zM6 -2h2v1h-2zM9 -2h2v1h-2zM1 -1h2v1h-2zM5 -1h2v1h-2zM9 -1h2v1h-2zM0 0h2v1h-2zM4 0h2v1h-2zM9 0h2v1h-2z"/><path shape-rendering="crispEdges" id="b6709" d="M4 -10h2v1h-2zM0 -9h12v1h-12zM3 -8h2v1h-2zM3 -7h7v1h-7zM2 -6h3v1h-3zM8 -6h2v1h-2zM1 -5h9v1h-9zM0 -4h2v1h-2zM3 -4h2v1h-2zM8 -4h2v1h-2zM3 -3h7v1h-7zM3 -2h2v1h-2zM8 -2h2v1h-2zM3 -1h2v1h-2zM8 -1h2v1h-2zM3 0h2v1h-2zM7 0h3v1h-3z"/><path shape-rendering="crispEdges" id="b33" d="M0 -8h5v1h-5zM4 -7h2v1h-2zM4 -6h2v1h-2zM1 -5h4v1h-4zM4 -4h2v1h-2zM4 -3h2v1h-2zM4 -2h2v1h-2zM0 -1h5v1h-5z"/><path shape-rendering="crispEdges" id="b36" d="M1 -8h4v1h-4zM0 -7h2v1h-2zM0 -6h2v1h-2zM0 -5h5v1h-5zM0 -4h2v1h-2zM4 -4h2v1h-2zM0 -3h2v1h-2zM4 -3h2v1h-2zM0 -2h2v1h-2zM4 -2h2v1h-2zM1 -1h4v1h-4z"/><path shape-rendering="crispEdges" id="b2c" d="M2 -2h3v1h-3zM3 -1h2v1h-2zM2 0h2v1h-2z"/><path shape-rendering="crispEdges" id="b39" d="M1 -8h4v1h-4zM0 -7h2v1h-2zM4 -7h2v1h-2zM0 -6h2v1h-2zM4 -6h2v1h-2zM0 -5h2v1h-2zM4 -5h2v1h-2zM1 -4h5v1h-5zM4 -3h2v1h-2zM0 -2h2v1h-2zM4 -2h2v1h-2zM1 -1h4v1h-4z"/><path shape-rendering="crispEdges" id="b31" d="M0 -8h4v1h-4zM2 -7h2v1h-2zM2 -6h2v1h-2zM2 -5h2v1h-2zM2 -4h2v1h-2zM2 -3h2v1h-2zM2 -2h2v1h-2zM0 -1h6v1h-6z"/><path shape-rendering="crispEdges" id="b5e94" d="M5 -10h2v1h-2zM6 -9h2v1h-2zM1 -8h11v1h-11zM1 -7h2v1h-2zM1 -6h2v1h-2zM5 -6h2v1h-2zM9 -6h2v1h-2zM1 -5h4v1h-4zM6 -5h2v1h-2zM9 -5h2v1h-2zM1 -4h2v1h-2zM4 -4h4v1h-4zM9 -4h2v1h-2zM1 -3h2v1h-2zM4 -3h2v1h-2zM8 -3h2v1h-2zM1 -2h2v1h-2zM8 -2h2v1h-2zM0 -1h2v1h-2zM7 -1h2v1h-2zM0 0h2v1h-2zM3 0h9v1h-9z"/><path shape-rendering="crispEdges" id="b7528" d="M1 -10h10v1h-10zM1 -9h2v1h-2zM5 -9h2v1h-2zM9 -9h2v1h-2zM1 -8h2v1h-2zM5 -8h2v1h-2zM9 -8h2v1h-2zM1 -7h10v1h-10zM1 -6h2v1h-2zM5 -6h2v1h-2zM9 -6h2v1h-2zM1 -5h2v1h-2zM5 -5h2v1h-2zM9 -5h2v1h-2zM1 -4h10v1h-10zM1 -3h2v1h-2zM5 -3h2v1h-2zM9 -3h2v1h-2zM1 -2h2v1h-2zM5 -2h2v1h-2zM9 -2h2v1h-2zM0 -1h2v1h-2zM5 -1h2v1h-2zM9 -1h2v1h-2zM0 0h2v1h-2zM5 0h2v1h-2zM8 0h3v1h-3z"/><path shape-rendering="crispEdges" id="b5c42" d="M2 -10h9v1h-9zM2 -9h2v1h-2zM9 -9h2v1h-2zM2 -8h9v1h-9zM2 -7h2v1h-2zM2 -6h9v1h-9zM2 -5h2v1h-2zM2 -4h10v1h-10zM2 -3h2v1h-2zM6 -3h2v1h-2zM2 -2h2v1h-2zM5 -2h2v1h-2zM8 -2h2v1h-2zM1 -1h2v1h-2zM4 -1h2v1h-2zM9 -1h2v1h-2zM0 0h2v1h-2zM4 0h8v1h-8z"/><path shape-rendering="crispEdges" id="b32" d="M1 -8h4v1h-4zM0 -7h2v1h-2zM4 -7h2v1h-2zM4 -6h2v1h-2zM4 -5h2v1h-2zM3 -4h2v1h-2zM2 -3h2v1h-2zM1 -2h2v1h-2zM0 -1h6v1h-6z"/><path shape-rendering="crispEdges" id="b34" d="M3 -8h2v1h-2zM2 -7h3v1h-3zM1 -6h4v1h-4zM1 -5h4v1h-4zM0 -4h2v1h-2zM3 -4h2v1h-2zM0 -3h6v1h-6zM3 -2h2v1h-2zM3 -1h2v1h-2z"/><path shape-rendering="crispEdges" id="r4e" d="M0 -8h1v1h-1zM4 -8h1v1h-1zM0 -7h2v1h-2zM4 -7h1v1h-1zM0 -6h1v1h-1zM2 -6h1v1h-1zM4 -6h1v1h-1zM0 -5h1v1h-1zM2 -5h1v1h-1zM4 -5h1v1h-1zM0 -4h1v1h-1zM3 -4h2v1h-2zM0 -3h1v1h-1zM4 -3h1v1h-1zM0 -2h1v1h-1zM4 -2h1v1h-1zM0 -1h1v1h-1zM4 -1h1v1h-1z"/><path shape-rendering="crispEdges" id="r53" d="M1 -8h4v1h-4zM0 -7h1v1h-1zM0 -6h1v1h-1zM1 -5h3v1h-3zM4 -4h1v1h-1zM4 -3h1v1h-1zM4 -2h1v1h-1zM0 -1h4v1h-4z"/><path shape-rendering="crispEdges" id="r670d" d="M1 -10h4v1h-4zM6 -10h5v1h-5zM1 -9h1v1h-1zM4 -9h1v1h-1zM6 -9h1v1h-1zM10 -9h1v1h-1zM1 -8h1v1h-1zM4 -8h1v1h-1zM6 -8h1v1h-1zM10 -8h1v1h-1zM1 -7h4v1h-4zM6 -7h1v1h-1zM8 -7h3v1h-3zM1 -6h1v1h-1zM4 -6h1v1h-1zM6 -6h1v1h-1zM1 -5h1v1h-1zM4 -5h1v1h-1zM6 -5h5v1h-5zM1 -4h4v1h-4zM6 -4h1v1h-1zM10 -4h1v1h-1zM1 -3h1v1h-1zM4 -3h1v1h-1zM6 -3h1v1h-1zM8 -3h2v1h-2zM1 -2h1v1h-1zM4 -2h1v1h-1zM6 -2h1v1h-1zM9 -2h1v1h-1zM0 -1h1v1h-1zM4 -1h1v1h-1zM6 -1h1v1h-1zM8 -1h1v1h-1zM10 -1h1v1h-1zM0 0h1v1h-1zM3 0h2v1h-2zM6 0h2v1h-2zM10 0h1v1h-1z"/><path shape-rendering="crispEdges" id="r52a1" d="M3 -10h1v1h-1zM3 -9h6v1h-6zM2 -8h2v1h-2zM7 -8h1v1h-1zM1 -7h1v1h-1zM4 -7h1v1h-1zM6 -7h1v1h-1zM5 -6h1v1h-1zM3 -5h2v1h-2zM6 -5h2v1h-2zM0 -4h3v1h-3zM5 -4h1v1h-1zM8 -4h3v1h-3zM2 -3h7v1h-7zM4 -2h1v1h-1zM8 -2h1v1h-1zM3 -1h1v1h-1zM8 -1h1v1h-1zM1 0h2v1h-2zM6 0h2v1h-2z"/><path shape-rendering="crispEdges" id="r5668" d="M1 -10h4v1h-4zM6 -10h4v1h-4zM1 -9h1v1h-1zM4 -9h1v1h-1zM6 -9h1v1h-1zM9 -9h1v1h-1zM1 -8h1v1h-1zM4 -8h1v1h-1zM6 -8h1v1h-1zM9 -8h1v1h-1zM1 -7h4v1h-4zM6 -7h4v1h-4zM5 -6h1v1h-1zM8 -6h1v1h-1zM0 -5h11v1h-11zM3 -4h1v1h-1zM7 -4h1v1h-1zM0 -3h5v1h-5zM6 -3h5v1h-5zM1 -2h1v1h-1zM4 -2h1v1h-1zM6 -2h1v1h-1zM9 -2h1v1h-1zM1 -1h1v1h-1zM4 -1h1v1h-1zM6 -1h1v1h-1zM9 -1h1v1h-1zM1 0h4v1h-4zM6 0h4v1h-4z"/><path shape-rendering="crispEdges" id="r6162" d="M2 -10h1v1h-1zM5 -10h5v1h-5zM2 -9h1v1h-1zM5 -9h1v1h-1zM9 -9h1v1h-1zM2 -8h1v1h-1zM5 -8h5v1h-5zM0 -7h1v1h-1zM2 -7h2v1h-2zM5 -7h1v1h-1zM9 -7h1v1h-1zM0 -6h1v1h-1zM2 -6h1v1h-1zM4 -6h7v1h-7zM0 -5h1v1h-1zM2 -5h1v1h-1zM4 -5h1v1h-1zM6 -5h1v1h-1zM8 -5h1v1h-1zM10 -5h1v1h-1zM2 -4h1v1h-1zM4 -4h7v1h-7zM2 -3h1v1h-1zM2 -2h1v1h-1zM5 -2h5v1h-5zM2 -1h1v1h-1zM6 -1h3v1h-3zM2 0h1v1h-1zM4 0h2v1h-2zM9 0h2v1h-2z"/><path shape-rendering="crispEdges" id="r54cd" d="M7 -10h1v1h-1zM6 -9h1v1h-1zM0 -8h3v1h-3zM4 -8h7v1h-7zM0 -7h1v1h-1zM2 -7h1v1h-1zM4 -7h1v1h-1zM10 -7h1v1h-1zM0 -6h1v1h-1zM2 -6h1v1h-1zM4 -6h1v1h-1zM6 -6h3v1h-3zM10 -6h1v1h-1zM0 -5h1v1h-1zM2 -5h1v1h-1zM4 -5h1v1h-1zM6 -5h1v1h-1zM8 -5h1v1h-1zM10 -5h1v1h-1zM0 -4h1v1h-1zM2 -4h1v1h-1zM4 -4h1v1h-1zM6 -4h1v1h-1zM8 -4h1v1h-1zM10 -4h1v1h-1zM0 -3h3v1h-3zM4 -3h1v1h-1zM6 -3h3v1h-3zM10 -3h1v1h-1zM4 -2h1v1h-1zM10 -2h1v1h-1zM4 -1h1v1h-1zM10 -1h1v1h-1zM4 0h1v1h-1zM9 0h2v1h-2z"/><path shape-rendering="crispEdges" id="r5e94" d="M5 -10h1v1h-1zM6 -9h1v1h-1zM1 -8h10v1h-10zM1 -7h1v1h-1zM1 -6h1v1h-1zM5 -6h1v1h-1zM9 -6h1v1h-1zM1 -5h1v1h-1zM3 -5h1v1h-1zM6 -5h1v1h-1zM9 -5h1v1h-1zM1 -4h1v1h-1zM4 -4h1v1h-1zM6 -4h1v1h-1zM9 -4h1v1h-1zM1 -3h1v1h-1zM4 -3h1v1h-1zM8 -3h1v1h-1zM1 -2h1v1h-1zM8 -2h1v1h-1zM0 -1h1v1h-1zM7 -1h1v1h-1zM0 0h1v1h-1zM3 0h8v1h-8z"/><path shape-rendering="crispEdges" id="r32" d="M1 -8h3v1h-3zM0 -7h1v1h-1zM4 -7h1v1h-1zM4 -6h1v1h-1zM4 -5h1v1h-1zM3 -4h1v1h-1zM2 -3h1v1h-1zM1 -2h1v1h-1zM0 -1h5v1h-5z"/><path shape-rendering="crispEdges" id="r48" d="M0 -8h1v1h-1zM4 -8h1v1h-1zM0 -7h1v1h-1zM4 -7h1v1h-1zM0 -6h1v1h-1zM4 -6h1v1h-1zM0 -5h5v1h-5zM0 -4h1v1h-1zM4 -4h1v1h-1zM0 -3h1v1h-1zM4 -3h1v1h-1zM0 -2h1v1h-1zM4 -2h1v1h-1zM0 -1h1v1h-1zM4 -1h1v1h-1z"/><path shape-rendering="crispEdges" id="r5ba2" d="M5 -10h1v1h-1zM1 -9h10v1h-10zM1 -8h1v1h-1zM4 -8h1v1h-1zM10 -8h1v1h-1zM3 -7h6v1h-6zM2 -6h1v1h-1zM4 -6h1v1h-1zM7 -6h1v1h-1zM1 -5h1v1h-1zM5 -5h2v1h-2zM3 -4h2v1h-2zM7 -4h2v1h-2zM1 -3h10v1h-10zM3 -2h1v1h-1zM8 -2h1v1h-1zM3 -1h1v1h-1zM8 -1h1v1h-1zM3 0h6v1h-6z"/><path shape-rendering="crispEdges" id="r6237" d="M5 -10h1v1h-1zM6 -9h1v1h-1zM2 -8h8v1h-8zM2 -7h1v1h-1zM9 -7h1v1h-1zM2 -6h1v1h-1zM9 -6h1v1h-1zM2 -5h8v1h-8zM2 -4h1v1h-1zM2 -3h1v1h-1zM2 -2h1v1h-1zM1 -1h1v1h-1zM0 0h1v1h-1z"/><path shape-rendering="crispEdges" id="r9519" d="M1 -10h1v1h-1zM6 -10h1v1h-1zM8 -10h1v1h-1zM1 -9h1v1h-1zM4 -9h7v1h-7zM1 -8h3v1h-3zM6 -8h1v1h-1zM8 -8h1v1h-1zM0 -7h1v1h-1zM6 -7h1v1h-1zM8 -7h1v1h-1zM0 -6h3v1h-3zM4 -6h7v1h-7zM1 -5h1v1h-1zM0 -4h4v1h-4zM5 -4h5v1h-5zM1 -3h1v1h-1zM5 -3h1v1h-1zM9 -3h1v1h-1zM1 -2h1v1h-1zM5 -2h5v1h-5zM1 -1h1v1h-1zM3 -1h1v1h-1zM5 -1h1v1h-1zM9 -1h1v1h-1zM1 0h2v1h-2zM5 0h5v1h-5z"/><path shape-rendering="crispEdges" id="r8bef" d="M1 -10h1v1h-1zM5 -10h5v1h-5zM2 -9h1v1h-1zM5 -9h1v1h-1zM9 -9h1v1h-1zM5 -8h1v1h-1zM9 -8h1v1h-1zM5 -7h5v1h-5zM0 -6h3v1h-3zM2 -5h1v1h-1zM5 -5h5v1h-5zM2 -4h1v1h-1zM7 -4h1v1h-1zM2 -3h1v1h-1zM4 -3h7v1h-7zM2 -2h2v1h-2zM6 -2h1v1h-1zM8 -2h1v1h-1zM2 -1h1v1h-1zM5 -1h1v1h-1zM9 -1h1v1h-1zM4 0h1v1h-1zM10 0h1v1h-1z"/><path shape-rendering="crispEdges" id="r33" d="M0 -8h4v1h-4zM4 -7h1v1h-1zM4 -6h1v1h-1zM1 -5h3v1h-3zM4 -4h1v1h-1zM4 -3h1v1h-1zM4 -2h1v1h-1zM0 -1h4v1h-4z"/><path shape-rendering="crispEdges" id="r8bf7" d="M1 -10h1v1h-1zM7 -10h1v1h-1zM2 -9h1v1h-1zM4 -9h7v1h-7zM2 -8h1v1h-1zM7 -8h1v1h-1zM5 -7h5v1h-5zM0 -6h3v1h-3zM7 -6h1v1h-1zM2 -5h1v1h-1zM4 -5h7v1h-7zM2 -4h1v1h-1zM5 -4h1v1h-1zM9 -4h1v1h-1zM2 -3h1v1h-1zM5 -3h5v1h-5zM2 -2h1v1h-1zM5 -2h1v1h-1zM9 -2h1v1h-1zM2 -1h2v1h-2zM5 -1h5v1h-5zM2 0h1v1h-1zM5 0h1v1h-1zM9 0h1v1h-1z"/><path shape-rendering="crispEdges" id="r6c42" d="M5 -10h1v1h-1zM8 -10h1v1h-1zM5 -9h1v1h-1zM9 -9h1v1h-1zM0 -8h11v1h-11zM5 -7h1v1h-1zM2 -6h1v1h-1zM5 -6h1v1h-1zM8 -6h1v1h-1zM3 -5h1v1h-1zM5 -5h1v1h-1zM7 -5h1v1h-1zM4 -4h3v1h-3zM3 -3h1v1h-1zM5 -3h1v1h-1zM7 -3h1v1h-1zM2 -2h1v1h-1zM5 -2h1v1h-1zM8 -2h1v1h-1zM0 -1h2v1h-2zM5 -1h1v1h-1zM9 -1h2v1h-2zM4 0h2v1h-2z"/><path shape-rendering="crispEdges" id="r6ca1" d="M1 -10h1v1h-1zM5 -10h4v1h-4zM2 -9h1v1h-1zM5 -9h1v1h-1zM8 -9h1v1h-1zM0 -8h1v1h-1zM5 -8h1v1h-1zM8 -8h1v1h-1zM1 -7h1v1h-1zM4 -7h1v1h-1zM8 -7h3v1h-3zM3 -6h1v1h-1zM2 -5h1v1h-1zM4 -5h6v1h-6zM2 -4h1v1h-1zM5 -4h1v1h-1zM8 -4h1v1h-1zM1 -3h1v1h-1zM6 -3h1v1h-1zM8 -3h1v1h-1zM0 -2h2v1h-2zM6 -2h2v1h-2zM1 -1h1v1h-1zM5 -1h1v1h-1zM8 -1h1v1h-1zM1 0h1v1h-1zM3 0h2v1h-2zM9 0h2v1h-2z"/><path shape-rendering="crispEdges" id="r627e" d="M2 -10h1v1h-1zM6 -10h1v1h-1zM8 -10h1v1h-1zM2 -9h1v1h-1zM6 -9h1v1h-1zM9 -9h1v1h-1zM0 -8h11v1h-11zM2 -7h1v1h-1zM6 -7h1v1h-1zM2 -6h1v1h-1zM4 -6h1v1h-1zM6 -6h1v1h-1zM9 -6h1v1h-1zM2 -5h2v1h-2zM6 -5h1v1h-1zM9 -5h1v1h-1zM1 -4h2v1h-2zM6 -4h1v1h-1zM8 -4h1v1h-1zM0 -3h1v1h-1zM2 -3h1v1h-1zM7 -3h1v1h-1zM2 -2h1v1h-1zM6 -2h2v1h-2zM10 -2h1v1h-1zM2 -1h1v1h-1zM5 -1h1v1h-1zM8 -1h1v1h-1zM10 -1h1v1h-1zM0 0h3v1h-3zM4 0h1v1h-1zM9 0h2v1h-2z"/><path shape-rendering="crispEdges" id="r5230" d="M0 -10h7v1h-7zM10 -10h1v1h-1zM3 -9h1v1h-1zM10 -9h1v1h-1zM2 -8h1v1h-1zM8 -8h1v1h-1zM10 -8h1v1h-1zM1 -7h1v1h-1zM5 -7h1v1h-1zM8 -7h1v1h-1zM10 -7h1v1h-1zM0 -6h7v1h-7zM8 -6h1v1h-1zM10 -6h1v1h-1zM3 -5h1v1h-1zM8 -5h1v1h-1zM10 -5h1v1h-1zM1 -4h5v1h-5zM8 -4h1v1h-1zM10 -4h1v1h-1zM3 -3h1v1h-1zM8 -3h1v1h-1zM10 -3h1v1h-1zM3 -2h1v1h-1zM10 -2h1v1h-1zM3 -1h4v1h-4zM10 -1h1v1h-1zM0 0h3v1h-3zM8 0h3v1h-3z"/><path shape-rendering="crispEdges" id="r39" d="M1 -8h3v1h-3zM0 -7h1v1h-1zM4 -7h1v1h-1zM0 -6h1v1h-1zM4 -6h1v1h-1zM0 -5h1v1h-1zM4 -5h1v1h-1zM1 -4h4v1h-4zM4 -3h1v1h-1zM0 -2h1v1h-1zM4 -2h1v1h-1zM1 -1h3v1h-3z"/><path shape-rendering="crispEdges" id="b4f20" d="M3 -10h2v1h-2zM7 -10h2v1h-2zM3 -9h2v1h-2zM7 -9h2v1h-2zM2 -8h2v1h-2zM5 -8h7v1h-7zM2 -7h2v1h-2zM7 -7h2v1h-2zM1 -6h11v1h-11zM0 -5h4v1h-4zM6 -5h2v1h-2zM2 -4h2v1h-2zM5 -4h7v1h-7zM2 -3h2v1h-2zM9 -3h2v1h-2zM2 -2h2v1h-2zM6 -2h4v1h-4zM2 -1h2v1h-2zM7 -1h2v1h-2zM2 0h2v1h-2zM8 0h2v1h-2z"/><path shape-rendering="crispEdges" id="b8f93" d="M1 -10h2v1h-2zM7 -10h2v1h-2zM1 -9h2v1h-2zM6 -9h4v1h-4zM0 -8h7v1h-7zM9 -8h2v1h-2zM1 -7h2v1h-2zM4 -7h8v1h-8zM0 -6h4v1h-4zM0 -5h8v1h-8zM10 -5h2v1h-2zM2 -4h10v1h-10zM2 -3h10v1h-10zM0 -2h12v1h-12zM2 -1h10v1h-10zM2 0h6v1h-6zM9 0h3v1h-3z"/><path shape-rendering="crispEdges" id="b30" d="M1 -8h4v1h-4zM0 -7h2v1h-2zM4 -7h2v1h-2zM0 -6h2v1h-2zM4 -6h2v1h-2zM0 -5h2v1h-2zM4 -5h2v1h-2zM0 -4h2v1h-2zM4 -4h2v1h-2zM0 -3h2v1h-2zM4 -3h2v1h-2zM0 -2h2v1h-2zM4 -2h2v1h-2zM1 -1h4v1h-4z"/><path shape-rendering="crispEdges" id="b37" d="M0 -8h6v1h-6zM4 -7h2v1h-2zM4 -6h2v1h-2zM3 -5h2v1h-2zM3 -4h2v1h-2zM2 -3h2v1h-2zM2 -2h2v1h-2zM2 -1h2v1h-2z"/><path shape-rendering="crispEdges" id="r8fde" d="M1 -10h1v1h-1zM6 -10h1v1h-1zM2 -9h1v1h-1zM4 -9h7v1h-7zM2 -8h1v1h-1zM6 -8h1v1h-1zM5 -7h1v1h-1zM7 -7h1v1h-1zM0 -6h3v1h-3zM4 -6h6v1h-6zM2 -5h1v1h-1zM7 -5h1v1h-1zM2 -4h1v1h-1zM4 -4h7v1h-7zM2 -3h1v1h-1zM7 -3h1v1h-1zM2 -2h1v1h-1zM7 -2h1v1h-1zM1 -1h1v1h-1zM3 -1h1v1h-1zM7 -1h1v1h-1zM0 0h1v1h-1zM4 0h7v1h-7z"/><path shape-rendering="crispEdges" id="r63a5" d="M2 -10h1v1h-1zM7 -10h1v1h-1zM2 -9h1v1h-1zM4 -9h7v1h-7zM0 -8h4v1h-4zM5 -8h1v1h-1zM9 -8h1v1h-1zM2 -7h1v1h-1zM6 -7h1v1h-1zM8 -7h1v1h-1zM2 -6h1v1h-1zM4 -6h7v1h-7zM2 -5h2v1h-2zM7 -5h1v1h-1zM1 -4h2v1h-2zM4 -4h7v1h-7zM0 -3h1v1h-1zM2 -3h1v1h-1zM6 -3h1v1h-1zM9 -3h1v1h-1zM2 -2h1v1h-1zM5 -2h2v1h-2zM8 -2h1v1h-1zM2 -1h1v1h-1zM7 -1h1v1h-1zM9 -1h1v1h-1zM0 0h3v1h-3zM4 0h3v1h-3zM10 0h1v1h-1z"/><path shape-rendering="crispEdges" id="r88ab" d="M1 -10h1v1h-1zM8 -10h1v1h-1zM2 -9h1v1h-1zM8 -9h1v1h-1zM0 -8h11v1h-11zM3 -7h1v1h-1zM5 -7h1v1h-1zM8 -7h1v1h-1zM10 -7h1v1h-1zM2 -6h1v1h-1zM4 -6h2v1h-2zM8 -6h1v1h-1zM1 -5h3v1h-3zM5 -5h6v1h-6zM0 -4h1v1h-1zM2 -4h1v1h-1zM4 -4h2v1h-2zM7 -4h1v1h-1zM9 -4h1v1h-1zM2 -3h1v1h-1zM5 -3h1v1h-1zM7 -3h1v1h-1zM9 -3h1v1h-1zM2 -2h1v1h-1zM5 -2h1v1h-1zM8 -2h1v1h-1zM2 -1h1v1h-1zM4 -1h1v1h-1zM7 -1h1v1h-1zM9 -1h1v1h-1zM2 0h2v1h-2zM5 0h2v1h-2zM10 0h1v1h-1z"/><path shape-rendering="crispEdges" id="r62d2" d="M2 -10h1v1h-1zM5 -10h6v1h-6zM2 -9h1v1h-1zM5 -9h1v1h-1zM0 -8h6v1h-6zM2 -7h1v1h-1zM5 -7h5v1h-5zM2 -6h1v1h-1zM4 -6h2v1h-2zM9 -6h1v1h-1zM2 -5h2v1h-2zM5 -5h1v1h-1zM9 -5h1v1h-1zM1 -4h2v1h-2zM5 -4h5v1h-5zM0 -3h1v1h-1zM2 -3h1v1h-1zM5 -3h1v1h-1zM9 -3h1v1h-1zM2 -2h1v1h-1zM5 -2h1v1h-1zM2 -1h1v1h-1zM5 -1h1v1h-1zM0 0h3v1h-3zM5 0h6v1h-6z"/><path shape-rendering="crispEdges" id="r7edd" d="M2 -10h1v1h-1zM6 -10h1v1h-1zM2 -9h1v1h-1zM6 -9h4v1h-4zM1 -8h1v1h-1zM5 -8h1v1h-1zM8 -8h1v1h-1zM1 -7h1v1h-1zM3 -7h1v1h-1zM5 -7h6v1h-6zM0 -6h3v1h-3zM4 -6h2v1h-2zM8 -6h1v1h-1zM10 -6h1v1h-1zM2 -5h1v1h-1zM5 -5h1v1h-1zM8 -5h1v1h-1zM10 -5h1v1h-1zM1 -4h1v1h-1zM5 -4h6v1h-6zM0 -3h4v1h-4zM5 -3h1v1h-1zM5 -2h1v1h-1zM10 -2h1v1h-1zM2 -1h2v1h-2zM5 -1h1v1h-1zM10 -1h1v1h-1zM0 0h2v1h-2zM6 0h5v1h-5z"/><path shape-rendering="crispEdges" id="r91cd" d="M1 -10h9v1h-9zM5 -9h1v1h-1zM0 -8h11v1h-11zM2 -7h1v1h-1zM5 -7h1v1h-1zM8 -7h1v1h-1zM2 -6h7v1h-7zM2 -5h1v1h-1zM5 -5h1v1h-1zM8 -5h1v1h-1zM2 -4h7v1h-7zM5 -3h1v1h-1zM1 -2h9v1h-9zM5 -1h1v1h-1zM0 0h11v1h-11z"/><path shape-rendering="crispEdges" id="r590d" d="M2 -10h1v1h-1zM2 -9h9v1h-9zM1 -8h2v1h-2zM8 -8h1v1h-1zM0 -7h1v1h-1zM2 -7h7v1h-7zM2 -6h1v1h-1zM8 -6h1v1h-1zM2 -5h7v1h-7zM3 -4h1v1h-1zM2 -3h7v1h-7zM0 -2h2v1h-2zM4 -2h1v1h-1zM7 -2h1v1h-1zM5 -1h2v1h-2zM0 0h5v1h-5zM7 0h4v1h-4z"/><path shape-rendering="crispEdges" id="r5c1d" d="M1 -10h1v1h-1zM5 -10h1v1h-1zM9 -10h1v1h-1zM2 -9h1v1h-1zM5 -9h1v1h-1zM8 -9h1v1h-1zM5 -8h1v1h-1zM0 -7h11v1h-11zM0 -6h1v1h-1zM10 -6h1v1h-1zM2 -5h7v1h-7zM0 -3h11v1h-11zM3 -2h1v1h-1zM2 -1h1v1h-1zM8 -1h1v1h-1zM1 0h9v1h-9z"/><path shape-rendering="crispEdges" id="r8bd5" d="M1 -10h1v1h-1zM7 -10h1v1h-1zM9 -10h1v1h-1zM2 -9h1v1h-1zM7 -9h1v1h-1zM10 -9h1v1h-1zM3 -8h8v1h-8zM7 -7h1v1h-1zM0 -6h3v1h-3zM4 -6h4v1h-4zM2 -5h1v1h-1zM5 -5h1v1h-1zM7 -5h1v1h-1zM2 -4h1v1h-1zM5 -4h1v1h-1zM7 -4h1v1h-1zM2 -3h1v1h-1zM5 -3h1v1h-1zM8 -3h1v1h-1zM10 -3h1v1h-1zM2 -2h1v1h-1zM5 -2h2v1h-2zM8 -2h1v1h-1zM10 -2h1v1h-1zM2 -1h3v1h-3zM9 -1h2v1h-2zM2 0h1v1h-1zM10 0h1v1h-1z"/><path shape-rendering="crispEdges" id="r7b54" d="M2 -10h1v1h-1zM7 -10h1v1h-1zM2 -9h4v1h-4zM7 -9h4v1h-4zM1 -8h1v1h-1zM3 -8h1v1h-1zM5 -8h2v1h-2zM8 -8h1v1h-1zM0 -7h1v1h-1zM4 -7h1v1h-1zM6 -7h1v1h-1zM9 -7h1v1h-1zM2 -6h2v1h-2zM7 -6h2v1h-2zM0 -5h2v1h-2zM3 -5h5v1h-5zM9 -5h2v1h-2zM3 -3h6v1h-6zM3 -2h1v1h-1zM8 -2h1v1h-1zM3 -1h1v1h-1zM8 -1h1v1h-1zM3 0h6v1h-6z"/><path shape-rendering="crispEdges" id="r2c" d="M2 -2h2v1h-2zM3 -1h1v1h-1zM2 0h1v1h-1z"/><path shape-rendering="crispEdges" id="r36" d="M1 -8h3v1h-3zM0 -7h1v1h-1zM0 -6h1v1h-1zM0 -5h4v1h-4zM0 -4h1v1h-1zM4 -4h1v1h-1zM0 -3h1v1h-1zM4 -3h1v1h-1zM0 -2h1v1h-1zM4 -2h1v1h-1zM1 -1h3v1h-3z"/><path shape-rendering="crispEdges" id="b7f51" d="M1 -10h11v1h-11zM1 -9h2v1h-2zM10 -9h2v1h-2zM1 -8h2v1h-2zM4 -8h2v1h-2zM8 -8h4v1h-4zM1 -7h11v1h-11zM1 -6h4v1h-4zM7 -6h2v1h-2zM10 -6h2v1h-2zM1 -5h2v1h-2zM4 -5h2v1h-2zM7 -5h2v1h-2zM10 -5h2v1h-2zM1 -4h11v1h-11zM1 -3h3v1h-3zM6 -3h6v1h-6zM1 -2h2v1h-2zM5 -2h2v1h-2zM10 -2h2v1h-2zM1 -1h2v1h-2zM10 -1h2v1h-2zM1 0h2v1h-2zM8 0h4v1h-4z"/><path shape-rendering="crispEdges" id="b7edc" d="M2 -10h2v1h-2zM6 -10h2v1h-2zM2 -9h2v1h-2zM6 -9h5v1h-5zM1 -8h2v1h-2zM5 -8h2v1h-2zM9 -8h2v1h-2zM1 -7h9v1h-9zM0 -6h6v1h-6zM7 -6h2v1h-2zM2 -5h2v1h-2zM6 -5h4v1h-4zM1 -4h2v1h-2zM4 -4h3v1h-3zM9 -4h3v1h-3zM0 -3h11v1h-11zM5 -2h2v1h-2zM9 -2h2v1h-2zM2 -1h5v1h-5zM9 -1h2v1h-2zM0 0h3v1h-3zM5 0h6v1h-6z"/><path shape-rendering="crispEdges" id="r5730" d="M2 -10h1v1h-1zM7 -10h1v1h-1zM2 -9h1v1h-1zM5 -9h1v1h-1zM7 -9h1v1h-1zM2 -8h1v1h-1zM5 -8h1v1h-1zM7 -8h1v1h-1zM9 -8h1v1h-1zM0 -7h4v1h-4zM5 -7h1v1h-1zM7 -7h3v1h-3zM2 -6h1v1h-1zM5 -6h3v1h-3zM9 -6h1v1h-1zM2 -5h1v1h-1zM4 -5h2v1h-2zM7 -5h1v1h-1zM9 -5h1v1h-1zM2 -4h1v1h-1zM5 -4h1v1h-1zM7 -4h1v1h-1zM9 -4h1v1h-1zM2 -3h1v1h-1zM5 -3h1v1h-1zM7 -3h3v1h-3zM2 -2h2v1h-2zM5 -2h1v1h-1zM7 -2h1v1h-1zM10 -2h1v1h-1zM0 -1h2v1h-2zM5 -1h1v1h-1zM10 -1h1v1h-1zM6 0h5v1h-5z"/><path shape-rendering="crispEdges" id="r5740" d="M2 -10h1v1h-1zM7 -10h1v1h-1zM2 -9h1v1h-1zM7 -9h1v1h-1zM2 -8h1v1h-1zM7 -8h1v1h-1zM0 -7h6v1h-6zM7 -7h1v1h-1zM2 -6h1v1h-1zM5 -6h1v1h-1zM7 -6h4v1h-4zM2 -5h1v1h-1zM5 -5h1v1h-1zM7 -5h1v1h-1zM2 -4h1v1h-1zM5 -4h1v1h-1zM7 -4h1v1h-1zM2 -3h1v1h-1zM5 -3h1v1h-1zM7 -3h1v1h-1zM2 -2h4v1h-4zM7 -2h1v1h-1zM0 -1h2v1h-2zM5 -1h1v1h-1zM7 -1h1v1h-1zM3 0h8v1h-8z"/><path shape-rendering="crispEdges" id="r51b2" d="M1 -10h1v1h-1zM7 -10h1v1h-1zM2 -9h1v1h-1zM7 -9h1v1h-1zM2 -8h1v1h-1zM4 -8h7v1h-7zM4 -7h1v1h-1zM7 -7h1v1h-1zM10 -7h1v1h-1zM2 -6h1v1h-1zM4 -6h1v1h-1zM7 -6h1v1h-1zM10 -6h1v1h-1zM2 -5h1v1h-1zM4 -5h1v1h-1zM7 -5h1v1h-1zM10 -5h1v1h-1zM0 -4h2v1h-2zM4 -4h7v1h-7zM1 -3h1v1h-1zM4 -3h1v1h-1zM7 -3h1v1h-1zM10 -3h1v1h-1zM1 -2h1v1h-1zM7 -2h1v1h-1zM1 -1h1v1h-1zM7 -1h1v1h-1zM7 0h1v1h-1z"/><path shape-rendering="crispEdges" id="r7a81" d="M5 -10h1v1h-1zM1 -9h10v1h-10zM1 -8h1v1h-1zM4 -8h1v1h-1zM7 -8h1v1h-1zM10 -8h1v1h-1zM0 -7h1v1h-1zM3 -7h1v1h-1zM8 -7h1v1h-1zM2 -6h1v1h-1zM5 -6h1v1h-1zM7 -6h1v1h-1zM9 -6h1v1h-1zM5 -5h1v1h-1zM8 -5h1v1h-1zM1 -4h10v1h-10zM5 -3h1v1h-1zM4 -2h1v1h-1zM6 -2h1v1h-1zM2 -1h2v1h-2zM7 -1h2v1h-2zM0 0h2v1h-2zM9 0h2v1h-2z"/><path shape-rendering="crispEdges" id="r38" d="M1 -8h3v1h-3zM0 -7h1v1h-1zM4 -7h1v1h-1zM0 -6h1v1h-1zM4 -6h1v1h-1zM1 -5h3v1h-3zM0 -4h1v1h-1zM4 -4h1v1h-1zM0 -3h1v1h-1zM4 -3h1v1h-1zM0 -2h1v1h-1zM4 -2h1v1h-1zM1 -1h3v1h-3z"/><path shape-rendering="crispEdges" id="r30" d="M1 -8h3v1h-3zM0 -7h1v1h-1zM4 -7h1v1h-1zM0 -6h1v1h-1zM4 -6h1v1h-1zM0 -5h1v1h-1zM4 -5h1v1h-1zM0 -4h1v1h-1zM4 -4h1v1h-1zM0 -3h1v1h-1zM4 -3h1v1h-1zM0 -2h1v1h-1zM4 -2h1v1h-1zM1 -1h3v1h-3z"/><path shape-rendering="crispEdges" id="r4d" d="M0 -8h1v1h-1zM4 -8h1v1h-1zM0 -7h2v1h-2zM3 -7h2v1h-2zM0 -6h2v1h-2zM3 -6h2v1h-2zM0 -5h1v1h-1zM2 -5h1v1h-1zM4 -5h1v1h-1zM0 -4h1v1h-1zM2 -4h1v1h-1zM4 -4h1v1h-1zM0 -3h1v1h-1zM2 -3h1v1h-1zM4 -3h1v1h-1zM0 -2h1v1h-1zM4 -2h1v1h-1zM0 -1h1v1h-1zM4 -1h1v1h-1z"/><path shape-rendering="crispEdges" id="r53e3" d="M1 -9h9v1h-9zM1 -8h1v1h-1zM9 -8h1v1h-1zM1 -7h1v1h-1zM9 -7h1v1h-1zM1 -6h1v1h-1zM9 -6h1v1h-1zM1 -5h1v1h-1zM9 -5h1v1h-1zM1 -4h1v1h-1zM9 -4h1v1h-1zM1 -3h1v1h-1zM9 -3h1v1h-1zM1 -2h9v1h-9zM1 -1h1v1h-1zM9 -1h1v1h-1z"/><path shape-rendering="crispEdges" id="r4e0d" d="M0 -10h11v1h-11zM6 -9h1v1h-1zM6 -8h1v1h-1zM5 -7h1v1h-1zM4 -6h2v1h-2zM7 -6h1v1h-1zM3 -5h1v1h-1zM5 -5h1v1h-1zM8 -5h1v1h-1zM2 -4h1v1h-1zM5 -4h1v1h-1zM9 -4h1v1h-1zM1 -3h1v1h-1zM5 -3h1v1h-1zM10 -3h1v1h-1zM0 -2h1v1h-1zM5 -2h1v1h-1zM5 -1h1v1h-1zM5 0h1v1h-1z"/><path shape-rendering="crispEdges" id="r53ef" d="M0 -9h11v1h-11zM8 -8h1v1h-1zM2 -7h4v1h-4zM8 -7h1v1h-1zM2 -6h1v1h-1zM5 -6h1v1h-1zM8 -6h1v1h-1zM2 -5h1v1h-1zM5 -5h1v1h-1zM8 -5h1v1h-1zM2 -4h4v1h-4zM8 -4h1v1h-1zM2 -3h1v1h-1zM5 -3h1v1h-1zM8 -3h1v1h-1zM8 -2h1v1h-1zM8 -1h1v1h-1zM6 0h3v1h-3z"/><path shape-rendering="crispEdges" id="r8fbe" d="M1 -10h1v1h-1zM7 -10h1v1h-1zM2 -9h1v1h-1zM7 -9h1v1h-1zM2 -8h1v1h-1zM7 -8h1v1h-1zM4 -7h7v1h-7zM0 -6h3v1h-3zM7 -6h1v1h-1zM2 -5h1v1h-1zM7 -5h1v1h-1zM2 -4h1v1h-1zM6 -4h1v1h-1zM8 -4h1v1h-1zM2 -3h1v1h-1zM5 -3h1v1h-1zM9 -3h1v1h-1zM2 -2h1v1h-1zM4 -2h1v1h-1zM10 -2h1v1h-1zM1 -1h1v1h-1zM3 -1h1v1h-1zM0 0h1v1h-1zM4 0h7v1h-7z"/><path shape-rendering="crispEdges" id="r34" d="M3 -8h1v1h-1zM2 -7h2v1h-2zM1 -6h1v1h-1zM3 -6h1v1h-1zM1 -5h1v1h-1zM3 -5h1v1h-1zM0 -4h1v1h-1zM3 -4h1v1h-1zM0 -3h5v1h-5zM3 -2h1v1h-1zM3 -1h1v1h-1z"/><path shape-rendering="crispEdges" id="b6570" d="M0 -10h2v1h-2zM3 -10h6v1h-6zM1 -9h5v1h-5zM7 -9h2v1h-2zM0 -8h12v1h-12zM2 -7h3v1h-3zM6 -7h5v1h-5zM1 -6h5v1h-5zM7 -6h4v1h-4zM0 -5h2v1h-2zM3 -5h8v1h-8zM0 -4h11v1h-11zM2 -3h4v1h-4zM7 -3h4v1h-4zM1 -2h5v1h-5zM8 -2h2v1h-2zM3 -1h2v1h-2zM7 -1h4v1h-4zM0 0h8v1h-8zM10 0h2v1h-2z"/><path shape-rendering="crispEdges" id="b636e" d="M2 -10h2v1h-2zM5 -10h7v1h-7zM2 -9h2v1h-2zM5 -9h2v1h-2zM10 -9h2v1h-2zM0 -8h7v1h-7zM10 -8h2v1h-2zM2 -7h2v1h-2zM5 -7h7v1h-7zM2 -6h5v1h-5zM8 -6h2v1h-2zM2 -5h10v1h-10zM1 -4h3v1h-3zM5 -4h2v1h-2zM8 -4h2v1h-2zM0 -3h4v1h-4zM5 -3h7v1h-7zM2 -2h6v1h-6zM10 -2h2v1h-2zM0 -1h8v1h-8zM10 -1h2v1h-2zM1 0h4v1h-4zM6 0h6v1h-6z"/><path shape-rendering="crispEdges" id="b94fe" d="M1 -10h2v1h-2zM7 -10h2v1h-2zM1 -9h2v1h-2zM4 -9h8v1h-8zM1 -8h8v1h-8zM0 -7h2v1h-2zM6 -7h4v1h-4zM0 -6h12v1h-12zM2 -5h2v1h-2zM5 -5h2v1h-2zM8 -5h2v1h-2zM0 -4h12v1h-12zM2 -3h2v1h-2zM5 -3h2v1h-2zM8 -3h2v1h-2zM2 -2h2v1h-2zM5 -2h2v1h-2zM8 -2h2v1h-2zM2 -1h6v1h-6zM2 0h4v1h-4zM7 0h5v1h-5z"/><path shape-rendering="crispEdges" id="b8def" d="M0 -10h7v1h-7zM0 -9h2v1h-2zM3 -9h8v1h-8zM0 -8h2v1h-2zM3 -8h4v1h-4zM9 -8h2v1h-2zM0 -7h2v1h-2zM3 -7h7v1h-7zM0 -6h5v1h-5zM7 -6h2v1h-2zM2 -5h2v1h-2zM6 -5h4v1h-4zM0 -4h7v1h-7zM9 -4h2v1h-2zM0 -3h12v1h-12zM0 -2h4v1h-4zM5 -2h2v1h-2zM9 -2h2v1h-2zM0 -1h7v1h-7zM9 -1h2v1h-2zM0 0h3v1h-3zM5 0h6v1h-6z"/><path shape-rendering="crispEdges" id="b35" d="M0 -8h5v1h-5zM0 -7h2v1h-2zM0 -6h2v1h-2zM0 -5h5v1h-5zM4 -4h2v1h-2zM4 -3h2v1h-2zM4 -2h2v1h-2zM0 -1h5v1h-5z"/><path shape-rendering="crispEdges" id="r41" d="M2 -8h1v1h-1zM2 -7h1v1h-1zM1 -6h1v1h-1zM3 -6h1v1h-1zM1 -5h1v1h-1zM3 -5h1v1h-1zM1 -4h1v1h-1zM3 -4h1v1h-1zM1 -3h3v1h-3zM0 -2h1v1h-1zM4 -2h1v1h-1zM0 -1h1v1h-1zM4 -1h1v1h-1z"/><path shape-rendering="crispEdges" id="r52" d="M0 -8h4v1h-4zM0 -7h1v1h-1zM4 -7h1v1h-1zM0 -6h1v1h-1zM4 -6h1v1h-1zM0 -5h4v1h-4zM0 -4h1v1h-1zM2 -4h1v1h-1zM0 -3h1v1h-1zM3 -3h1v1h-1zM0 -2h1v1h-1zM3 -2h1v1h-1zM0 -1h1v1h-1zM4 -1h1v1h-1z"/><path shape-rendering="crispEdges" id="r626b" d="M2 -10h1v1h-1zM2 -9h1v1h-1zM5 -9h6v1h-6zM0 -8h5v1h-5zM10 -8h1v1h-1zM2 -7h1v1h-1zM10 -7h1v1h-1zM2 -6h1v1h-1zM4 -6h1v1h-1zM10 -6h1v1h-1zM2 -5h2v1h-2zM6 -5h5v1h-5zM1 -4h2v1h-2zM10 -4h1v1h-1zM0 -3h1v1h-1zM2 -3h1v1h-1zM10 -3h1v1h-1zM2 -2h1v1h-1zM10 -2h1v1h-1zM2 -1h1v1h-1zM5 -1h6v1h-6zM0 0h3v1h-3z"/><path shape-rendering="crispEdges" id="r63cf" d="M2 -10h1v1h-1zM6 -10h1v1h-1zM8 -10h1v1h-1zM2 -9h1v1h-1zM4 -9h7v1h-7zM0 -8h4v1h-4zM6 -8h1v1h-1zM8 -8h1v1h-1zM2 -7h1v1h-1zM2 -6h1v1h-1zM5 -6h6v1h-6zM2 -5h2v1h-2zM5 -5h1v1h-1zM7 -5h1v1h-1zM10 -5h1v1h-1zM1 -4h2v1h-2zM5 -4h1v1h-1zM7 -4h1v1h-1zM10 -4h1v1h-1zM0 -3h1v1h-1zM2 -3h1v1h-1zM5 -3h6v1h-6zM2 -2h1v1h-1zM5 -2h1v1h-1zM7 -2h1v1h-1zM10 -2h1v1h-1zM2 -1h1v1h-1zM5 -1h6v1h-6zM0 0h3v1h-3zM5 0h1v1h-1zM10 0h1v1h-1z"/><path shape-rendering="crispEdges" id="r37" d="M0 -8h5v1h-5zM4 -7h1v1h-1zM4 -6h1v1h-1zM3 -5h1v1h-1zM3 -4h1v1h-1zM2 -3h1v1h-1zM2 -2h1v1h-1zM2 -1h1v1h-1z"/><path shape-rendering="crispEdges" id="r592a" d="M5 -10h1v1h-1zM5 -9h1v1h-1zM5 -8h1v1h-1zM0 -7h11v1h-11zM5 -6h1v1h-1zM4 -5h1v1h-1zM6 -5h1v1h-1zM4 -4h1v1h-1zM6 -4h1v1h-1zM3 -3h1v1h-1zM7 -3h1v1h-1zM3 -2h2v1h-2zM7 -2h1v1h-1zM2 -1h1v1h-1zM5 -1h1v1h-1zM8 -1h1v1h-1zM0 0h2v1h-2zM5 0h1v1h-1zM9 0h2v1h-2z"/><path shape-rendering="crispEdges" id="r591a" d="M5 -10h1v1h-1zM4 -9h5v1h-5zM3 -8h1v1h-1zM8 -8h1v1h-1zM2 -7h1v1h-1zM4 -7h1v1h-1zM7 -7h1v1h-1zM5 -6h2v1h-2zM3 -5h2v1h-2zM6 -5h1v1h-1zM1 -4h2v1h-2zM5 -4h5v1h-5zM4 -3h1v1h-1zM9 -3h1v1h-1zM2 -2h2v1h-2zM5 -2h1v1h-1zM8 -2h1v1h-1zM6 -1h2v1h-2zM1 0h5v1h-5z"/><path shape-rendering="crispEdges" id="r4e3b" d="M4 -10h1v1h-1zM5 -9h1v1h-1zM0 -8h11v1h-11zM5 -7h1v1h-1zM5 -6h1v1h-1zM5 -5h1v1h-1zM1 -4h9v1h-9zM5 -3h1v1h-1zM5 -2h1v1h-1zM5 -1h1v1h-1zM0 0h11v1h-11z"/><path shape-rendering="crispEdges" id="r52a8" d="M7 -10h1v1h-1zM1 -9h4v1h-4zM7 -9h1v1h-1zM7 -8h1v1h-1zM6 -7h5v1h-5zM0 -6h6v1h-6zM7 -6h1v1h-1zM10 -6h1v1h-1zM2 -5h1v1h-1zM7 -5h1v1h-1zM10 -5h1v1h-1zM2 -4h1v1h-1zM7 -4h1v1h-1zM10 -4h1v1h-1zM1 -3h1v1h-1zM4 -3h1v1h-1zM7 -3h1v1h-1zM10 -3h1v1h-1zM0 -2h5v1h-5zM6 -2h1v1h-1zM10 -2h1v1h-1zM4 -1h1v1h-1zM6 -1h1v1h-1zM10 -1h1v1h-1zM5 0h1v1h-1zM8 0h2v1h-2z"/><path shape-rendering="crispEdges" id="b53d1" d="M2 -10h2v1h-2zM5 -10h2v1h-2zM8 -10h2v1h-2zM2 -9h2v1h-2zM5 -9h2v1h-2zM9 -9h2v1h-2zM1 -8h2v1h-2zM5 -8h2v1h-2zM1 -7h11v1h-11zM4 -6h2v1h-2zM4 -5h6v1h-6zM4 -4h2v1h-2zM8 -4h2v1h-2zM3 -3h6v1h-6zM2 -2h2v1h-2zM6 -2h2v1h-2zM1 -1h2v1h-2zM5 -1h5v1h-5zM0 0h2v1h-2zM3 0h3v1h-3zM9 0h3v1h-3z"/><path shape-rendering="crispEdges" id="b751f" d="M6 -10h2v1h-2zM2 -9h2v1h-2zM6 -9h2v1h-2zM2 -8h2v1h-2zM6 -8h2v1h-2zM2 -7h10v1h-10zM1 -6h2v1h-2zM6 -6h2v1h-2zM0 -5h2v1h-2zM6 -5h2v1h-2zM3 -4h8v1h-8zM6 -3h2v1h-2zM6 -2h2v1h-2zM6 -1h2v1h-2zM1 0h11v1h-11z"/><path shape-rendering="crispEdges" id="b5730" d="M2 -10h2v1h-2zM7 -10h2v1h-2zM2 -9h2v1h-2zM5 -9h4v1h-4zM2 -8h2v1h-2zM5 -8h6v1h-6zM0 -7h11v1h-11zM2 -6h2v1h-2zM5 -6h6v1h-6zM2 -5h9v1h-9zM2 -4h2v1h-2zM5 -4h6v1h-6zM2 -3h2v1h-2zM5 -3h6v1h-6zM2 -2h7v1h-7zM10 -2h2v1h-2zM0 -1h3v1h-3zM5 -1h2v1h-2zM10 -1h2v1h-2zM6 0h6v1h-6z"/><path shape-rendering="crispEdges" id="b5740" d="M2 -10h2v1h-2zM7 -10h2v1h-2zM2 -9h2v1h-2zM7 -9h2v1h-2zM2 -8h2v1h-2zM7 -8h2v1h-2zM0 -7h9v1h-9zM2 -6h2v1h-2zM5 -6h7v1h-7zM2 -5h2v1h-2zM5 -5h4v1h-4zM2 -4h2v1h-2zM5 -4h4v1h-4zM2 -3h2v1h-2zM5 -3h4v1h-4zM2 -2h7v1h-7zM0 -1h3v1h-3zM5 -1h4v1h-4zM3 0h9v1h-9z"/><path shape-rendering="crispEdges" id="b7edf" d="M2 -10h2v1h-2zM7 -10h2v1h-2zM2 -9h10v1h-10zM1 -8h2v1h-2zM6 -8h2v1h-2zM1 -7h6v1h-6zM9 -7h2v1h-2zM0 -6h12v1h-12zM2 -5h2v1h-2zM6 -5h6v1h-6zM1 -4h2v1h-2zM6 -4h4v1h-4zM0 -3h5v1h-5zM6 -3h4v1h-4zM6 -2h6v1h-6zM2 -1h5v1h-5zM8 -1h4v1h-4zM0 0h3v1h-3zM4 0h2v1h-2zM8 0h4v1h-4z"/><path shape-rendering="crispEdges" id="b8ba1" d="M1 -10h2v1h-2zM7 -10h2v1h-2zM2 -9h2v1h-2zM7 -9h2v1h-2zM7 -8h2v1h-2zM4 -7h8v1h-8zM0 -6h4v1h-4zM7 -6h2v1h-2zM2 -5h2v1h-2zM7 -5h2v1h-2zM2 -4h2v1h-2zM7 -4h2v1h-2zM2 -3h4v1h-4zM7 -3h2v1h-2zM2 -2h3v1h-3zM7 -2h2v1h-2zM2 -1h2v1h-2zM7 -1h2v1h-2zM7 0h2v1h-2z"/><path shape-rendering="crispEdges" id="b3a" d="M2 -6h2v1h-2zM2 -5h2v1h-2zM2 -2h2v1h-2zM2 -1h2v1h-2z"/><path shape-rendering="crispEdges" id="r3a" d="M2 -6h1v1h-1zM2 -5h1v1h-1zM2 -2h1v1h-1zM2 -1h1v1h-1z"/><path shape-rendering="crispEdges" id="r42" d="M0 -8h4v1h-4zM0 -7h1v1h-1zM4 -7h1v1h-1zM0 -6h1v1h-1zM4 -6h1v1h-1zM0 -5h4v1h-4zM0 -4h1v1h-1zM4 -4h1v1h-1zM0 -3h1v1h-1zM4 -3h1v1h-1zM0 -2h1v1h-1zM4 -2h1v1h-1zM0 -1h4v1h-4z"/><path shape-rendering="crispEdges" id="r2d" d="M0 -5h5v1h-5z"/><path shape-rendering="crispEdges" id="r46" d="M0 -8h5v1h-5zM0 -7h1v1h-1zM0 -6h1v1h-1zM0 -5h4v1h-4zM0 -4h1v1h-1zM0 -3h1v1h-1zM0 -2h1v1h-1zM0 -1h1v1h-1z"/><path shape-rendering="crispEdges" id="r45" d="M0 -8h5v1h-5zM0 -7h1v1h-1zM0 -6h1v1h-1zM0 -5h5v1h-5zM0 -4h1v1h-1zM0 -3h1v1h-1zM0 -2h1v1h-1zM0 -1h5v1h-5z"/><path shape-rendering="crispEdges" id="b4e8b" d="M5 -10h2v1h-2zM0 -9h12v1h-12zM2 -8h2v1h-2zM5 -8h2v1h-2zM8 -8h2v1h-2zM2 -7h2v1h-2zM5 -7h2v1h-2zM8 -7h2v1h-2zM1 -6h10v1h-10zM5 -5h2v1h-2zM9 -5h2v1h-2zM0 -4h12v1h-12zM5 -3h2v1h-2zM9 -3h2v1h-2zM1 -2h10v1h-10zM5 -1h2v1h-2zM3 0h4v1h-4z"/><path shape-rendering="crispEdges" id="b4ef6" d="M3 -10h2v1h-2zM7 -10h2v1h-2zM3 -9h6v1h-6zM2 -8h2v1h-2zM5 -8h4v1h-4zM2 -7h9v1h-9zM1 -6h4v1h-4zM7 -6h2v1h-2zM0 -5h4v1h-4zM7 -5h2v1h-2zM2 -4h10v1h-10zM2 -3h2v1h-2zM7 -3h2v1h-2zM2 -2h2v1h-2zM7 -2h2v1h-2zM2 -1h2v1h-2zM7 -1h2v1h-2zM2 0h2v1h-2zM7 0h2v1h-2z"/><path shape-rendering="crispEdges" id="r4e25" d="M1 -10h9v1h-9zM4 -9h1v1h-1zM6 -9h1v1h-1zM1 -8h1v1h-1zM4 -8h1v1h-1zM6 -8h1v1h-1zM9 -8h1v1h-1zM2 -7h1v1h-1zM4 -7h1v1h-1zM6 -7h1v1h-1zM8 -7h1v1h-1zM4 -6h1v1h-1zM6 -6h1v1h-1zM1 -5h9v1h-9zM1 -4h1v1h-1zM1 -3h1v1h-1zM1 -2h1v1h-1zM1 -1h1v1h-1zM0 0h1v1h-1z"/><path shape-rendering="crispEdges" id="r7a0b" d="M3 -10h1v1h-1zM5 -10h5v1h-5zM0 -9h3v1h-3zM5 -9h1v1h-1zM9 -9h1v1h-1zM2 -8h1v1h-1zM5 -8h1v1h-1zM9 -8h1v1h-1zM0 -7h4v1h-4zM5 -7h5v1h-5zM2 -6h1v1h-1zM2 -5h2v1h-2zM5 -5h5v1h-5zM1 -4h2v1h-2zM4 -4h1v1h-1zM7 -4h1v1h-1zM1 -3h2v1h-2zM5 -3h5v1h-5zM0 -2h1v1h-1zM2 -2h1v1h-1zM7 -2h1v1h-1zM2 -1h1v1h-1zM7 -1h1v1h-1zM2 0h1v1h-1zM4 0h7v1h-7z"/><path shape-rendering="crispEdges" id="r5ea6" d="M5 -10h1v1h-1zM1 -9h10v1h-10zM1 -8h1v1h-1zM4 -8h1v1h-1zM7 -8h1v1h-1zM1 -7h9v1h-9zM1 -6h1v1h-1zM4 -6h1v1h-1zM7 -6h1v1h-1zM1 -5h1v1h-1zM4 -5h4v1h-4zM1 -4h1v1h-1zM1 -3h1v1h-1zM3 -3h6v1h-6zM1 -2h1v1h-1zM4 -2h1v1h-1zM7 -2h1v1h-1zM0 -1h1v1h-1zM5 -1h2v1h-2zM0 0h1v1h-1zM2 0h3v1h-3zM7 0h3v1h-3z"/><path shape-rendering="crispEdges" id="r7c7b" d="M2 -10h1v1h-1zM5 -10h1v1h-1zM8 -10h1v1h-1zM3 -9h1v1h-1zM5 -9h1v1h-1zM7 -9h1v1h-1zM0 -8h11v1h-11zM3 -7h1v1h-1zM5 -7h1v1h-1zM7 -7h1v1h-1zM2 -6h1v1h-1zM5 -6h1v1h-1zM8 -6h1v1h-1zM1 -5h1v1h-1zM9 -5h1v1h-1zM5 -4h1v1h-1zM0 -3h11v1h-11zM4 -2h1v1h-1zM6 -2h1v1h-1zM3 -1h1v1h-1zM7 -1h1v1h-1zM0 0h3v1h-3zM8 0h3v1h-3z"/><path shape-rendering="crispEdges" id="r578b" d="M1 -10h6v1h-6zM9 -10h1v1h-1zM2 -9h1v1h-1zM4 -9h1v1h-1zM7 -9h1v1h-1zM9 -9h1v1h-1zM2 -8h1v1h-1zM4 -8h1v1h-1zM7 -8h1v1h-1zM9 -8h1v1h-1zM0 -7h8v1h-8zM9 -7h1v1h-1zM2 -6h1v1h-1zM4 -6h1v1h-1zM7 -6h1v1h-1zM9 -6h1v1h-1zM2 -5h1v1h-1zM4 -5h1v1h-1zM9 -5h1v1h-1zM1 -4h1v1h-1zM4 -4h2v1h-2zM8 -4h2v1h-2zM5 -3h1v1h-1zM2 -2h7v1h-7zM5 -1h1v1h-1zM0 0h11v1h-11z"/><path shape-rendering="crispEdges" id="r5c42" d="M2 -10h8v1h-8zM2 -9h1v1h-1zM9 -9h1v1h-1zM2 -8h8v1h-8zM2 -7h1v1h-1zM2 -6h1v1h-1zM4 -6h6v1h-6zM2 -5h1v1h-1zM2 -4h9v1h-9zM2 -3h1v1h-1zM6 -3h1v1h-1zM2 -2h1v1h-1zM5 -2h1v1h-1zM8 -2h1v1h-1zM1 -1h1v1h-1zM4 -1h1v1h-1zM9 -1h1v1h-1zM0 0h1v1h-1zM4 0h7v1h-7z"/><path shape-rendering="crispEdges" id="r522b" d="M1 -10h5v1h-5zM10 -10h1v1h-1zM1 -9h1v1h-1zM5 -9h1v1h-1zM10 -9h1v1h-1zM1 -8h1v1h-1zM5 -8h1v1h-1zM8 -8h1v1h-1zM10 -8h1v1h-1zM1 -7h5v1h-5zM8 -7h1v1h-1zM10 -7h1v1h-1zM3 -6h1v1h-1zM8 -6h1v1h-1zM10 -6h1v1h-1zM0 -5h7v1h-7zM8 -5h1v1h-1zM10 -5h1v1h-1zM3 -4h1v1h-1zM6 -4h1v1h-1zM8 -4h1v1h-1zM10 -4h1v1h-1zM2 -3h1v1h-1zM6 -3h1v1h-1zM8 -3h1v1h-1zM10 -3h1v1h-1zM2 -2h1v1h-1zM6 -2h1v1h-1zM10 -2h1v1h-1zM1 -1h1v1h-1zM6 -1h1v1h-1zM10 -1h1v1h-1zM0 0h1v1h-1zM4 0h2v1h-2zM8 0h3v1h-3z"/><path shape-rendering="crispEdges" id="r4e8b" d="M5 -10h1v1h-1zM0 -9h11v1h-11zM2 -8h1v1h-1zM5 -8h1v1h-1zM8 -8h1v1h-1zM2 -7h1v1h-1zM5 -7h1v1h-1zM8 -7h1v1h-1zM1 -6h9v1h-9zM5 -5h1v1h-1zM9 -5h1v1h-1zM0 -4h11v1h-11zM5 -3h1v1h-1zM9 -3h1v1h-1zM1 -2h9v1h-9zM5 -1h1v1h-1zM3 0h3v1h-3z"/><path shape-rendering="crispEdges" id="r4ef6" d="M3 -10h1v1h-1zM7 -10h1v1h-1zM3 -9h1v1h-1zM5 -9h1v1h-1zM7 -9h1v1h-1zM2 -8h1v1h-1zM5 -8h1v1h-1zM7 -8h1v1h-1zM2 -7h1v1h-1zM4 -7h6v1h-6zM1 -6h3v1h-3zM7 -6h1v1h-1zM0 -5h1v1h-1zM2 -5h1v1h-1zM7 -5h1v1h-1zM2 -4h1v1h-1zM4 -4h7v1h-7zM2 -3h1v1h-1zM7 -3h1v1h-1zM2 -2h1v1h-1zM7 -2h1v1h-1zM2 -1h1v1h-1zM7 -1h1v1h-1zM2 0h1v1h-1zM7 0h1v1h-1z"/><path shape-rendering="crispEdges" id="r8ff0" d="M1 -10h1v1h-1zM7 -10h1v1h-1zM9 -10h1v1h-1zM2 -9h1v1h-1zM7 -9h1v1h-1zM10 -9h1v1h-1zM2 -8h1v1h-1zM4 -8h7v1h-7zM7 -7h1v1h-1zM0 -6h3v1h-3zM6 -6h3v1h-3zM2 -5h1v1h-1zM5 -5h1v1h-1zM7 -5h1v1h-1zM9 -5h1v1h-1zM2 -4h1v1h-1zM5 -4h1v1h-1zM7 -4h1v1h-1zM9 -4h1v1h-1zM2 -3h1v1h-1zM4 -3h1v1h-1zM7 -3h1v1h-1zM10 -3h1v1h-1zM2 -2h1v1h-1zM7 -2h1v1h-1zM1 -1h1v1h-1zM3 -1h1v1h-1zM0 0h1v1h-1zM4 0h7v1h-7z"/><path shape-rendering="crispEdges" id="r6e90" d="M1 -10h1v1h-1zM4 -10h7v1h-7zM2 -9h1v1h-1zM4 -9h1v1h-1zM8 -9h1v1h-1zM0 -8h1v1h-1zM4 -8h1v1h-1zM6 -8h5v1h-5zM1 -7h1v1h-1zM4 -7h1v1h-1zM6 -7h1v1h-1zM10 -7h1v1h-1zM3 -6h2v1h-2zM6 -6h5v1h-5zM2 -5h1v1h-1zM4 -5h1v1h-1zM6 -5h1v1h-1zM10 -5h1v1h-1zM2 -4h1v1h-1zM4 -4h1v1h-1zM6 -4h5v1h-5zM0 -3h2v1h-2zM4 -3h1v1h-1zM8 -3h1v1h-1zM1 -2h1v1h-1zM4 -2h1v1h-1zM6 -2h1v1h-1zM8 -2h2v1h-2zM1 -1h1v1h-1zM3 -1h1v1h-1zM5 -1h1v1h-1zM8 -1h1v1h-1zM10 -1h1v1h-1zM1 0h2v1h-2zM4 0h1v1h-1zM7 0h2v1h-2zM10 0h1v1h-1z"/><path shape-rendering="crispEdges" id="r76ee" d="M2 -10h7v1h-7zM2 -9h1v1h-1zM8 -9h1v1h-1zM2 -8h1v1h-1zM8 -8h1v1h-1zM2 -7h7v1h-7zM2 -6h1v1h-1zM8 -6h1v1h-1zM2 -5h1v1h-1zM8 -5h1v1h-1zM2 -4h7v1h-7zM2 -3h1v1h-1zM8 -3h1v1h-1zM2 -2h1v1h-1zM8 -2h1v1h-1zM2 -1h7v1h-7zM2 0h1v1h-1zM8 0h1v1h-1z"/><path shape-rendering="crispEdges" id="r6807" d="M2 -10h1v1h-1zM5 -10h5v1h-5zM2 -9h1v1h-1zM0 -8h5v1h-5zM2 -7h1v1h-1zM4 -7h7v1h-7zM2 -6h1v1h-1zM7 -6h1v1h-1zM1 -5h3v1h-3zM7 -5h1v1h-1zM1 -4h2v1h-2zM5 -4h1v1h-1zM7 -4h1v1h-1zM9 -4h1v1h-1zM0 -3h1v1h-1zM2 -3h1v1h-1zM5 -3h1v1h-1zM7 -3h1v1h-1zM10 -3h1v1h-1zM2 -2h1v1h-1zM4 -2h1v1h-1zM7 -2h1v1h-1zM10 -2h1v1h-1zM2 -1h1v1h-1zM7 -1h1v1h-1zM2 0h1v1h-1zM6 0h2v1h-2z"/><path shape-rendering="crispEdges" id="r5b89" d="M5 -10h1v1h-1zM1 -9h10v1h-10zM1 -8h1v1h-1zM10 -8h1v1h-1zM0 -7h1v1h-1zM4 -7h1v1h-1zM9 -7h1v1h-1zM4 -6h1v1h-1zM0 -5h11v1h-11zM3 -4h1v1h-1zM7 -4h1v1h-1zM2 -3h2v1h-2zM7 -3h1v1h-1zM4 -2h3v1h-3zM4 -1h1v1h-1zM7 -1h2v1h-2zM1 0h3v1h-3zM9 0h2v1h-2z"/><path shape-rendering="crispEdges" id="r5168" d="M5 -10h1v1h-1zM4 -9h1v1h-1zM6 -9h1v1h-1zM3 -8h1v1h-1zM7 -8h1v1h-1zM2 -7h1v1h-1zM8 -7h1v1h-1zM0 -6h2v1h-2zM3 -6h5v1h-5zM9 -6h2v1h-2zM5 -5h1v1h-1zM5 -4h1v1h-1zM3 -3h5v1h-5zM5 -2h1v1h-1zM5 -1h1v1h-1zM1 0h9v1h-9z"/><path shape-rendering="crispEdges" id="r94fe" d="M1 -10h1v1h-1zM7 -10h1v1h-1zM1 -9h1v1h-1zM4 -9h1v1h-1zM6 -9h5v1h-5zM1 -8h3v1h-3zM5 -8h1v1h-1zM7 -8h1v1h-1zM0 -7h1v1h-1zM6 -7h1v1h-1zM8 -7h1v1h-1zM0 -6h11v1h-11zM2 -5h1v1h-1zM5 -5h1v1h-1zM8 -5h1v1h-1zM0 -4h11v1h-11zM2 -3h1v1h-1zM5 -3h1v1h-1zM8 -3h1v1h-1zM2 -2h1v1h-1zM5 -2h1v1h-1zM8 -2h1v1h-1zM2 -1h3v1h-3zM6 -1h1v1h-1zM2 0h1v1h-1zM4 0h1v1h-1zM7 0h4v1h-4z"/><path shape-rendering="crispEdges" id="r8def" d="M0 -10h4v1h-4zM5 -10h1v1h-1zM0 -9h1v1h-1zM3 -9h1v1h-1zM5 -9h5v1h-5zM0 -8h1v1h-1zM3 -8h1v1h-1zM5 -8h1v1h-1zM9 -8h1v1h-1zM0 -7h1v1h-1zM3 -7h2v1h-2zM6 -7h1v1h-1zM8 -7h1v1h-1zM0 -6h4v1h-4zM7 -6h1v1h-1zM2 -5h1v1h-1zM6 -5h1v1h-1zM8 -5h1v1h-1zM0 -4h1v1h-1zM2 -4h2v1h-2zM5 -4h1v1h-1zM9 -4h1v1h-1zM0 -3h1v1h-1zM2 -3h1v1h-1zM4 -3h7v1h-7zM0 -2h1v1h-1zM2 -2h1v1h-1zM5 -2h1v1h-1zM9 -2h1v1h-1zM0 -1h1v1h-1zM2 -1h2v1h-2zM5 -1h1v1h-1zM9 -1h1v1h-1zM0 0h2v1h-2zM5 0h5v1h-5z"/><path shape-rendering="crispEdges" id="r28" d="M5 -10h1v1h-1zM4 -9h1v1h-1zM4 -8h1v1h-1zM3 -7h1v1h-1zM3 -6h1v1h-1zM3 -5h1v1h-1zM3 -4h1v1h-1zM3 -3h1v1h-1zM4 -2h1v1h-1zM4 -1h1v1h-1zM5 0h1v1h-1z"/><path shape-rendering="crispEdges" id="r673a" d="M2 -10h1v1h-1zM2 -9h1v1h-1zM5 -9h4v1h-4zM2 -8h1v1h-1zM5 -8h1v1h-1zM8 -8h1v1h-1zM0 -7h6v1h-6zM8 -7h1v1h-1zM2 -6h1v1h-1zM5 -6h1v1h-1zM8 -6h1v1h-1zM1 -5h3v1h-3zM5 -5h1v1h-1zM8 -5h1v1h-1zM1 -4h2v1h-2zM4 -4h2v1h-2zM8 -4h1v1h-1zM0 -3h1v1h-1zM2 -3h1v1h-1zM5 -3h1v1h-1zM8 -3h1v1h-1zM0 -2h1v1h-1zM2 -2h1v1h-1zM5 -2h1v1h-1zM8 -2h1v1h-1zM2 -1h1v1h-1zM4 -1h1v1h-1zM8 -1h1v1h-1zM10 -1h1v1h-1zM2 0h2v1h-2zM8 0h3v1h-3z"/><path shape-rendering="crispEdges" id="r4e3a" d="M2 -10h1v1h-1zM5 -10h1v1h-1zM3 -9h1v1h-1zM5 -9h1v1h-1zM5 -8h1v1h-1zM1 -7h9v1h-9zM5 -6h1v1h-1zM9 -6h1v1h-1zM5 -5h2v1h-2zM9 -5h1v1h-1zM4 -4h1v1h-1zM7 -4h1v1h-1zM9 -4h1v1h-1zM4 -3h1v1h-1zM7 -3h1v1h-1zM9 -3h1v1h-1zM3 -2h1v1h-1zM9 -2h1v1h-1zM2 -1h1v1h-1zM6 -1h1v1h-1zM9 -1h1v1h-1zM1 0h1v1h-1zM7 0h2v1h-2z"/><path shape-rendering="crispEdges" id="r2e" d="M2 -2h1v1h-1zM2 -1h1v1h-1z"/><path shape-rendering="crispEdges" id="r29" d="M0 -10h1v1h-1zM1 -9h1v1h-1zM1 -8h1v1h-1zM2 -7h1v1h-1zM2 -6h1v1h-1zM2 -5h1v1h-1zM2 -4h1v1h-1zM2 -3h1v1h-1zM1 -2h1v1h-1zM1 -1h1v1h-1zM0 0h1v1h-1z"/></defs>
<g shape-rendering="crispEdges"><rect x="0" y="0" width="1166" height="849" fill="#bed9fc" /><rect x="0" y="22" width="1166" height="1" fill="#4a5456" /><path d="M5 22.5 L24 3.5 H78 L80.5 6 V22.5" fill="url(#gTab)" stroke="#23417a" stroke-width="1"/><path d="M80.5 22.5 V6.5 L86 3.5 H114 L116.5 6 V22.5" fill="url(#gTab)" stroke="#23417a" stroke-width="1"/><path d="M170.5 22.5 V6.5 L176 3.5 H203 L205.5 6 V22.5" fill="url(#gTab)" stroke="#23417a" stroke-width="1"/><path d="M205.5 22.5 V6.5 L211 3.5 H262 L264.5 6 V22.5" fill="url(#gTab)" stroke="#23417a" stroke-width="1"/><path d="M264.5 22.5 V6.5 L270 3.5 H311 L313.5 6 V22.5" fill="url(#gTab)" stroke="#23417a" stroke-width="1"/><path d="M313.5 22.5 V6.5 L319 3.5 H371 L373.5 6 V22.5" fill="url(#gTab)" stroke="#23417a" stroke-width="1"/><path d="M373.5 22.5 V6.5 L379 3.5 H419 L421.5 6 V22.5" fill="url(#gTab)" stroke="#23417a" stroke-width="1"/><path d="M421.5 22.5 V6.5 L427 3.5 H473 L475.5 6 V22.5" fill="url(#gTab)" stroke="#23417a" stroke-width="1"/><path d="M475.5 22.5 V6.5 L481 3.5 H527 L529.5 6 V22.5" fill="url(#gTab)" stroke="#23417a" stroke-width="1"/><path d="M529.5 22.5 V6.5 L535 3.5 H562 L564.5 6 V22.5" fill="url(#gTab)" stroke="#23417a" stroke-width="1"/><path d="M564.5 22.5 V6.5 L570 3.5 H611 L613.5 6 V22.5" fill="url(#gTab)" stroke="#23417a" stroke-width="1"/><path d="M613.5 22.5 V6.5 L619 3.5 H647 L649.5 6 V22.5" fill="url(#gTab)" stroke="#23417a" stroke-width="1"/><path d="M649.5 22.5 V6.5 L655 3.5 H684 L686.5 6 V22.5" fill="url(#gTab)" stroke="#23417a" stroke-width="1"/><rect x="0" y="22" width="1166" height="1" fill="#4a5456" /><path d="M100 22.5 L118.5 3.5 H168 L170.5 6 V23.5 H100 Z" fill="url(#gTabAct)" stroke="#3c4a62" stroke-width="1"/><rect x="101" y="22" width="69" height="1" fill="#fcc780" /><rect x="0" y="23" width="581" height="410" fill="#ffffff" /><rect x="0" y="23" width="581" height="22" fill="url(#gOrange)" /><rect x="0" y="45" width="581" height="25" fill="url(#gTool)" /><rect x="0" y="23" width="1" height="410" fill="#55504c" /><rect x="1" y="23" width="1" height="410" fill="#8f8a86" /><rect x="62" y="47" width="44" height="22" fill="#f3b066" /><rect x="63" y="48" width="42" height="20" fill="url(#gBtn)" /><rect x="84" y="48" width="1" height="20" fill="#f1ad5e" /><rect x="31" y="50" width="1" height="16" fill="#a9c0e0" /><rect x="32" y="50" width="1" height="16" fill="#f4f8fe" /><rect x="58" y="50" width="1" height="16" fill="#a9c0e0" /><rect x="59" y="50" width="1" height="16" fill="#f4f8fe" /><rect x="489" y="47" width="90" height="22" fill="#485a74" /><rect x="490" y="48" width="64" height="20" fill="#c7ddf9" /><rect x="555" y="48" width="23" height="20" fill="#ffffff" /><rect x="1" y="70" width="580" height="1" fill="#7f98c6" /><rect x="1" y="71" width="421" height="20" fill="url(#gHdr)" /><rect x="261" y="71" width="1" height="20" fill="#7e98cc" /><rect x="1" y="90" width="421" height="1" fill="#8ea2c8" /><rect x="1" y="109" width="421" height="1" fill="#a0a3aa" /><rect x="1" y="128" width="421" height="1" fill="#a0a3aa" /><rect x="1" y="147" width="421" height="1" fill="#a0a3aa" /><rect x="1" y="166" width="421" height="1" fill="#a0a3aa" /><rect x="1" y="185" width="421" height="1" fill="#a0a3aa" /><rect x="1" y="204" width="421" height="1" fill="#a0a3aa" /><rect x="1" y="223" width="421" height="1" fill="#a0a3aa" /><rect x="1" y="242" width="421" height="1" fill="#a0a3aa" /><rect x="1" y="261" width="421" height="1" fill="#a0a3aa" /><rect x="1" y="280" width="421" height="1" fill="#a0a3aa" /><rect x="1" y="299" width="421" height="1" fill="#a0a3aa" /><rect x="1" y="318" width="421" height="1" fill="#a0a3aa" /><rect x="1" y="337" width="421" height="1" fill="#a0a3aa" /><rect x="1" y="338" width="421" height="18" fill="#7e9ae2" /><rect x="1" y="356" width="421" height="1" fill="#a0a3aa" /><rect x="1" y="375" width="421" height="1" fill="#a0a3aa" /><rect x="261" y="91" width="1" height="285" fill="#a0a3aa" /><rect x="421" y="91" width="1" height="285" fill="#a0a3aa" /><rect x="261" y="338" width="1" height="18" fill="#6f8bcf" /><rect x="581" y="70" width="4" height="363" fill="#a9bcdc" /><rect x="581" y="70" width="1" height="363" fill="#a4b5c6" /><rect x="581" y="23" width="4" height="22" fill="url(#gLight)" /><rect x="581" y="45" width="4" height="25" fill="url(#gTool)" /><rect x="0" y="433" width="1166" height="4" fill="#9fb2dc" /><rect x="0" y="433" width="1166" height="1" fill="#a3b3c8" /><rect x="585" y="23" width="581" height="410" fill="#ffffff" /><rect x="585" y="23" width="581" height="22" fill="url(#gLight)" /><rect x="585" y="45" width="581" height="25" fill="url(#gTool)" /><rect x="1164" y="23" width="2" height="410" fill="#5b534f" /><rect x="613" y="50" width="1" height="16" fill="#a9c0e0" /><rect x="614" y="50" width="1" height="16" fill="#f4f8fe" /><rect x="677" y="50" width="1" height="16" fill="#a9c0e0" /><rect x="678" y="50" width="1" height="16" fill="#f4f8fe" /><rect x="1097" y="47" width="65" height="22" fill="#485a74" /><rect x="1098" y="48" width="45" height="20" fill="#c7ddf9" /><rect x="1144" y="48" width="17" height="20" fill="#ffffff" /><rect x="585" y="70" width="579" height="1" fill="#7f98c6" /><rect x="585" y="71" width="450" height="20" fill="url(#gHdr)" /><rect x="734" y="71" width="1" height="20" fill="#7e98cc" /><rect x="854" y="71" width="1" height="20" fill="#7e98cc" /><rect x="964" y="71" width="1" height="20" fill="#7e98cc" /><rect x="585" y="90" width="450" height="1" fill="#8ea2c8" /><rect x="585" y="91" width="450" height="18" fill="#7e9ae2" /><rect x="585" y="109" width="450" height="1" fill="#a0a3aa" /><rect x="585" y="128" width="450" height="1" fill="#a0a3aa" /><rect x="585" y="147" width="450" height="1" fill="#a0a3aa" /><rect x="585" y="166" width="450" height="1" fill="#a0a3aa" /><rect x="585" y="185" width="450" height="1" fill="#a0a3aa" /><rect x="585" y="204" width="450" height="1" fill="#a0a3aa" /><rect x="585" y="223" width="450" height="1" fill="#a0a3aa" /><rect x="585" y="242" width="450" height="1" fill="#a0a3aa" /><rect x="585" y="261" width="450" height="1" fill="#a0a3aa" /><rect x="734" y="91" width="1" height="171" fill="#a0a3aa" /><rect x="734" y="91" width="1" height="18" fill="#6f8bcf" /><rect x="854" y="91" width="1" height="171" fill="#a0a3aa" /><rect x="854" y="91" width="1" height="18" fill="#6f8bcf" /><rect x="964" y="91" width="1" height="171" fill="#a0a3aa" /><rect x="964" y="91" width="1" height="18" fill="#6f8bcf" /><rect x="1034" y="91" width="1" height="171" fill="#a0a3aa" /><rect x="1034" y="91" width="1" height="18" fill="#6f8bcf" /><rect x="0" y="437" width="1166" height="412" fill="#ffffff" /><rect x="0" y="437" width="1166" height="21" fill="url(#gLight)" /><rect x="0" y="458" width="1166" height="26" fill="url(#gTool)" /><rect x="0" y="437" width="1" height="412" fill="#55504c" /><rect x="1" y="437" width="1" height="412" fill="#8f8a86" /><rect x="1164" y="437" width="2" height="412" fill="#5b534f" /><rect x="31" y="463" width="1" height="16" fill="#a9c0e0" /><rect x="32" y="463" width="1" height="16" fill="#f4f8fe" /><rect x="95" y="463" width="1" height="16" fill="#a9c0e0" /><rect x="96" y="463" width="1" height="16" fill="#f4f8fe" /><rect x="1066" y="460" width="96" height="22" fill="#485a74" /><rect x="1067" y="461" width="64" height="20" fill="#c7ddf9" /><rect x="1132" y="461" width="29" height="20" fill="#ffffff" /><rect x="1" y="483" width="1163" height="1" fill="#7f98c6" /><rect x="1" y="484" width="1146" height="20" fill="url(#gHdr)" /><rect x="71" y="484" width="1" height="20" fill="#7e98cc" /><rect x="171" y="484" width="1" height="20" fill="#7e98cc" /><rect x="291" y="484" width="1" height="20" fill="#7e98cc" /><rect x="691" y="484" width="1" height="20" fill="#7e98cc" /><rect x="831" y="484" width="1" height="20" fill="#7e98cc" /><rect x="991" y="484" width="1" height="20" fill="#7e98cc" /><rect x="1131" y="484" width="1" height="20" fill="#7e98cc" /><rect x="1" y="503" width="1146" height="1" fill="#8ea2c8" /><rect x="1" y="504" width="1146" height="18" fill="#7e9ae2" /><rect x="1" y="522" width="1146" height="1" fill="#a0a3aa" /><rect x="1" y="541" width="1146" height="1" fill="#a0a3aa" /><rect x="1" y="560" width="1146" height="1" fill="#a0a3aa" /><rect x="1" y="579" width="1146" height="1" fill="#a0a3aa" /><rect x="1" y="598" width="1146" height="1" fill="#a0a3aa" /><rect x="1" y="617" width="1146" height="1" fill="#a0a3aa" /><rect x="1" y="636" width="1146" height="1" fill="#a0a3aa" /><rect x="1" y="655" width="1146" height="1" fill="#a0a3aa" /><rect x="1" y="674" width="1146" height="1" fill="#a0a3aa" /><rect x="1" y="693" width="1146" height="1" fill="#a0a3aa" /><rect x="1" y="712" width="1146" height="1" fill="#a0a3aa" /><rect x="1" y="731" width="1146" height="1" fill="#a0a3aa" /><rect x="1" y="750" width="1146" height="1" fill="#a0a3aa" /><rect x="1" y="769" width="1146" height="1" fill="#a0a3aa" /><rect x="1" y="788" width="1146" height="1" fill="#a0a3aa" /><rect x="1" y="807" width="1146" height="1" fill="#a0a3aa" /><rect x="1" y="826" width="1146" height="1" fill="#a0a3aa" /><rect x="71" y="504" width="1" height="326" fill="#a0a3aa" /><rect x="71" y="504" width="1" height="18" fill="#6f8bcf" /><rect x="171" y="504" width="1" height="326" fill="#a0a3aa" /><rect x="171" y="504" width="1" height="18" fill="#6f8bcf" /><rect x="291" y="504" width="1" height="326" fill="#a0a3aa" /><rect x="291" y="504" width="1" height="18" fill="#6f8bcf" /><rect x="691" y="504" width="1" height="326" fill="#a0a3aa" /><rect x="691" y="504" width="1" height="18" fill="#6f8bcf" /><rect x="831" y="504" width="1" height="326" fill="#a0a3aa" /><rect x="831" y="504" width="1" height="18" fill="#6f8bcf" /><rect x="991" y="504" width="1" height="326" fill="#a0a3aa" /><rect x="991" y="504" width="1" height="18" fill="#6f8bcf" /><rect x="1131" y="504" width="1" height="326" fill="#a0a3aa" /><rect x="1131" y="504" width="1" height="18" fill="#6f8bcf" /><rect x="0" y="23" width="1" height="826" fill="#55504c" /><rect x="1" y="23" width="1" height="826" fill="#8f8a86" /><rect x="1164" y="23" width="2" height="826" fill="#5b534f" /></g>
<g font-family="Liberation Mono" font-size="12"><use href="#r6211" x="26" y="17" fill="#1b3867"/><use href="#r7684" x="38" y="17" fill="#1b3867"/><use href="#r56fe" x="50" y="17" fill="#1b3867"/><use href="#r8868" x="62" y="17" fill="#1b3867"/><use href="#r6982" x="86" y="17" fill="#1b3867"/><use href="#r8981" x="98" y="17" fill="#1b3867"/><use href="#r534f" x="176" y="17" fill="#1b3867"/><use href="#r8bae" x="188" y="17" fill="#1b3867"/><use href="#r7269" x="211" y="17" fill="#1b3867"/><use href="#r7406" x="223" y="17" fill="#1b3867"/><use href="#r7aef" x="235" y="17" fill="#1b3867"/><use href="#r70b9" x="247" y="17" fill="#1b3867"/><use href="#r49" x="270" y="17" fill="#1b3867"/><use href="#r50" x="276" y="17" fill="#1b3867"/><use href="#r7aef" x="282" y="17" fill="#1b3867"/><use href="#r70b9" x="294" y="17" fill="#1b3867"/><use href="#r7269" x="319" y="17" fill="#1b3867"/><use href="#r7406" x="331" y="17" fill="#1b3867"/><use href="#r4f1a" x="343" y="17" fill="#1b3867"/><use href="#r8bdd" x="355" y="17" fill="#1b3867"/><use href="#r49" x="379" y="17" fill="#1b3867"/><use href="#r50" x="385" y="17" fill="#1b3867"/><use href="#r4f1a" x="391" y="17" fill="#1b3867"/><use href="#r8bdd" x="403" y="17" fill="#1b3867"/><use href="#r54" x="427" y="17" fill="#1b3867"/><use href="#r43" x="433" y="17" fill="#1b3867"/><use href="#r50" x="439" y="17" fill="#1b3867"/><use href="#r4f1a" x="445" y="17" fill="#1b3867"/><use href="#r8bdd" x="457" y="17" fill="#1b3867"/><use href="#r55" x="481" y="17" fill="#1b3867"/><use href="#r44" x="487" y="17" fill="#1b3867"/><use href="#r50" x="493" y="17" fill="#1b3867"/><use href="#r4f1a" x="499" y="17" fill="#1b3867"/><use href="#r8bdd" x="511" y="17" fill="#1b3867"/><use href="#r77e9" x="535" y="17" fill="#1b3867"/><use href="#r9635" x="547" y="17" fill="#1b3867"/><use href="#r6570" x="570" y="17" fill="#1b3867"/><use href="#r636e" x="582" y="17" fill="#1b3867"/><use href="#r5305" x="594" y="17" fill="#1b3867"/><use href="#r65e5" x="619" y="17" fill="#1b3867"/><use href="#r5fd7" x="631" y="17" fill="#1b3867"/><use href="#r62a5" x="655" y="17" fill="#1b3867"/><use href="#r8868" x="667" y="17" fill="#1b3867"/><use href="#r8bca" x="122" y="17" fill="#222"/><use href="#r65ad" x="134" y="17" fill="#222"/><path d="M155.5 9.5 L162.5 15.5 M162.5 9.5 L155.5 15.5" stroke="#222" stroke-width="1.5"/><use href="#b8bca" x="8" y="39" fill="#111"/><use href="#b65ad" x="21" y="39" fill="#111"/><use href="#b6761" x="34" y="39" fill="#111"/><use href="#b76ee" x="47" y="39" fill="#111"/><use href="#b5168" x="496" y="62" fill="#000"/><use href="#b9762" x="509" y="62" fill="#000"/><use href="#b5206" x="522" y="62" fill="#000"/><use href="#b6790" x="535" y="62" fill="#000"/><use href="#r31" x="561" y="62" fill="#000"/><use href="#r35" x="567" y="62" fill="#000"/><use href="#r540d" x="8" y="85" fill="#000"/><use href="#r5b57" x="20" y="85" fill="#000"/><use href="#r6570" x="391" y="85" fill="#000"/><use href="#r91cf" x="403" y="85" fill="#000"/><use href="#b6240" x="22" y="104" fill="#000"/><use href="#b6709" x="35" y="104" fill="#000"/><use href="#b8bca" x="48" y="104" fill="#000"/><use href="#b65ad" x="61" y="104" fill="#000"/><use href="#b33" x="372" y="104" fill="#000"/><use href="#b36" x="379" y="104" fill="#000"/><use href="#b2c" x="386" y="104" fill="#000"/><use href="#b39" x="393" y="104" fill="#000"/><use href="#b39" x="400" y="104" fill="#000"/><use href="#b31" x="407" y="104" fill="#000"/><rect x="7.5" y="115.5" width="8" height="8" rx="1" fill="url(#gExp)" stroke="#777"/><rect x="9" y="119" width="5" height="1.4" fill="#111"/><use href="#b5e94" x="22" y="123" fill="#000"/><use href="#b7528" x="35" y="123" fill="#000"/><use href="#b5c42" x="48" y="123" fill="#000"/><use href="#b32" x="400" y="123" fill="#000"/><use href="#b34" x="407" y="123" fill="#000"/><use href="#ic_ok" x="42" y="132"/><use href="#r44" x="60" y="142" fill="#000"/><use href="#r4e" x="66" y="142" fill="#000"/><use href="#r53" x="72" y="142" fill="#000"/><use href="#r670d" x="78" y="142" fill="#000"/><use href="#r52a1" x="90" y="142" fill="#000"/><use href="#r5668" x="102" y="142" fill="#000"/><use href="#r6162" x="114" y="142" fill="#000"/><use href="#r54cd" x="126" y="142" fill="#000"/><use href="#r5e94" x="138" y="142" fill="#000"/><use href="#r32" x="407" y="142" fill="#000"/><use href="#ic_info" x="41" y="152"/><use href="#r48" x="60" y="161" fill="#000"/><use href="#r54" x="66" y="161" fill="#000"/><use href="#r54" x="72" y="161" fill="#000"/><use href="#r50" x="78" y="161" fill="#000"/><use href="#r5ba2" x="90" y="161" fill="#000"/><use href="#r6237" x="102" y="161" fill="#000"/><use href="#r7aef" x="114" y="161" fill="#000"/><use href="#r9519" x="126" y="161" fill="#000"/><use href="#r8bef" x="138" y="161" fill="#000"/><use href="#r33" x="407" y="161" fill="#000"/><use href="#ic_info" x="41" y="171"/><use href="#r48" x="60" y="180" fill="#000"/><use href="#r54" x="66" y="180" fill="#000"/><use href="#r54" x="72" y="180" fill="#000"/><use href="#r50" x="78" y="180" fill="#000"/><use href="#r8bf7" x="90" y="180" fill="#000"/><use href="#r6c42" x="102" y="180" fill="#000"/><use href="#r6ca1" x="114" y="180" fill="#000"/><use href="#r627e" x="126" y="180" fill="#000"/><use href="#r5230" x="138" y="180" fill="#000"/><use href="#r31" x="401" y="180" fill="#000"/><use href="#r39" x="407" y="180" fill="#000"/><rect x="7.5" y="191.5" width="8" height="8" rx="1" fill="url(#gExp)" stroke="#777"/><rect x="9" y="195" width="5" height="1.4" fill="#111"/><use href="#b4f20" x="22" y="199" fill="#000"/><use href="#b8f93" x="35" y="199" fill="#000"/><use href="#b5c42" x="48" y="199" fill="#000"/><use href="#b32" x="379" y="199" fill="#000"/><use href="#b2c" x="386" y="199" fill="#000"/><use href="#b30" x="393" y="199" fill="#000"/><use href="#b39" x="400" y="199" fill="#000"/><use href="#b37" x="407" y="199" fill="#000"/><use href="#ic_info" x="41" y="209"/><use href="#r54" x="60" y="218" fill="#000"/><use href="#r43" x="66" y="218" fill="#000"/><use href="#r50" x="72" y="218" fill="#000"/><use href="#r8fde" x="84" y="218" fill="#000"/><use href="#r63a5" x="96" y="218" fill="#000"/><use href="#r88ab" x="108" y="218" fill="#000"/><use href="#r62d2" x="120" y="218" fill="#000"/><use href="#r7edd" x="132" y="218" fill="#000"/><use href="#r35" x="401" y="218" fill="#000"/><use href="#r35" x="407" y="218" fill="#000"/><use href="#ic_info" x="41" y="228"/><use href="#r54" x="60" y="237" fill="#000"/><use href="#r43" x="66" y="237" fill="#000"/><use href="#r50" x="72" y="237" fill="#000"/><use href="#r91cd" x="84" y="237" fill="#000"/><use href="#r590d" x="96" y="237" fill="#000"/><use href="#r7684" x="108" y="237" fill="#000"/><use href="#r8fde" x="120" y="237" fill="#000"/><use href="#r63a5" x="132" y="237" fill="#000"/><use href="#r5c1d" x="144" y="237" fill="#000"/><use href="#r8bd5" x="156" y="237" fill="#000"/><use href="#r33" x="395" y="237" fill="#000"/><use href="#r39" x="401" y="237" fill="#000"/><use href="#r31" x="407" y="237" fill="#000"/><use href="#ic_info" x="41" y="247"/><use href="#r54" x="60" y="256" fill="#000"/><use href="#r43" x="66" y="256" fill="#000"/><use href="#r50" x="72" y="256" fill="#000"/><use href="#r6162" x="84" y="256" fill="#000"/><use href="#r5e94" x="96" y="256" fill="#000"/><use href="#r7b54" x="108" y="256" fill="#000"/><use href="#r31" x="383" y="256" fill="#000"/><use href="#r2c" x="389" y="256" fill="#000"/><use href="#r36" x="395" y="256" fill="#000"/><use href="#r35" x="401" y="256" fill="#000"/><use href="#r31" x="407" y="256" fill="#000"/><rect x="7.5" y="267.5" width="8" height="8" rx="1" fill="url(#gExp)" stroke="#777"/><rect x="9" y="271" width="5" height="1.4" fill="#111"/><use href="#b7f51" x="22" y="275" fill="#000"/><use href="#b7edc" x="35" y="275" fill="#000"/><use href="#b5c42" x="48" y="275" fill="#000"/><use href="#b32" x="372" y="275" fill="#000"/><use href="#b39" x="379" y="275" fill="#000"/><use href="#b2c" x="386" y="275" fill="#000"/><use href="#b30" x="393" y="275" fill="#000"/><use href="#b39" x="400" y="275" fill="#000"/><use href="#b39" x="407" y="275" fill="#000"/><use href="#ic_ok" x="42" y="284"/><use href="#r49" x="60" y="294" fill="#000"/><use href="#r50" x="66" y="294" fill="#000"/><use href="#r5730" x="78" y="294" fill="#000"/><use href="#r5740" x="90" y="294" fill="#000"/><use href="#r51b2" x="102" y="294" fill="#000"/><use href="#r7a81" x="114" y="294" fill="#000"/><use href="#r32" x="377" y="294" fill="#000"/><use href="#r38" x="383" y="294" fill="#000"/><use href="#r2c" x="389" y="294" fill="#000"/><use href="#r39" x="395" y="294" fill="#000"/><use href="#r30" x="401" y="294" fill="#000"/><use href="#r35" x="407" y="294" fill="#000"/><use href="#ic_warn" x="42" y="303"/><use href="#r49" x="60" y="313" fill="#000"/><use href="#r43" x="66" y="313" fill="#000"/><use href="#r4d" x="72" y="313" fill="#000"/><use href="#r50" x="78" y="313" fill="#000"/><use href="#r7aef" x="90" y="313" fill="#000"/><use href="#r53e3" x="102" y="313" fill="#000"/><use href="#r4e0d" x="114" y="313" fill="#000"/><use href="#r53ef" x="126" y="313" fill="#000"/><use href="#r8fbe" x="138" y="313" fill="#000"/><use href="#r31" x="395" y="313" fill="#000"/><use href="#r39" x="401" y="313" fill="#000"/><use href="#r34" x="407" y="313" fill="#000"/><rect x="7.5" y="324.5" width="8" height="8" rx="1" fill="url(#gExp)" stroke="#777"/><rect x="9" y="328" width="5" height="1.4" fill="#111"/><use href="#b6570" x="22" y="332" fill="#000"/><use href="#b636e" x="35" y="332" fill="#000"/><use href="#b94fe" x="48" y="332" fill="#000"/><use href="#b8def" x="61" y="332" fill="#000"/><use href="#b5c42" x="74" y="332" fill="#000"/><use href="#b35" x="379" y="332" fill="#000"/><use href="#b2c" x="386" y="332" fill="#000"/><use href="#b37" x="393" y="332" fill="#000"/><use href="#b37" x="400" y="332" fill="#000"/><use href="#b31" x="407" y="332" fill="#000"/><use href="#ic_warn" x="42" y="341"/><use href="#r41" x="60" y="351" fill="#0c1850"/><use href="#r52" x="66" y="351" fill="#0c1850"/><use href="#r50" x="72" y="351" fill="#0c1850"/><use href="#r626b" x="84" y="351" fill="#0c1850"/><use href="#r63cf" x="96" y="351" fill="#0c1850"/><use href="#r35" x="383" y="351" fill="#0c1850"/><use href="#r2c" x="389" y="351" fill="#0c1850"/><use href="#r37" x="395" y="351" fill="#0c1850"/><use href="#r35" x="401" y="351" fill="#0c1850"/><use href="#r33" x="407" y="351" fill="#0c1850"/><use href="#ic_warn" x="42" y="360"/><use href="#r41" x="60" y="370" fill="#000"/><use href="#r52" x="66" y="370" fill="#000"/><use href="#r50" x="72" y="370" fill="#000"/><use href="#r592a" x="84" y="370" fill="#000"/><use href="#r591a" x="96" y="370" fill="#000"/><use href="#r7684" x="108" y="370" fill="#000"/><use href="#r4e3b" x="120" y="370" fill="#000"/><use href="#r52a8" x="132" y="370" fill="#000"/><use href="#r5e94" x="144" y="370" fill="#000"/><use href="#r7b54" x="156" y="370" fill="#000"/><use href="#r31" x="401" y="370" fill="#000"/><use href="#r38" x="407" y="370" fill="#000"/><use href="#b8bca" x="591" y="39" fill="#15325f"/><use href="#b65ad" x="604" y="39" fill="#15325f"/><use href="#b53d1" x="617" y="39" fill="#15325f"/><use href="#b751f" x="630" y="39" fill="#15325f"/><use href="#b5730" x="643" y="39" fill="#15325f"/><use href="#b5740" x="656" y="39" fill="#15325f"/><use href="#b7edf" x="1104" y="62" fill="#000"/><use href="#b8ba1" x="1117" y="62" fill="#000"/><use href="#b3a" x="1131" y="62" fill="#000"/><use href="#r39" x="1149" y="62" fill="#000"/><use href="#r540d" x="591" y="85" fill="#000"/><use href="#r5b57" x="603" y="85" fill="#000"/><use href="#r7269" x="741" y="85" fill="#000"/><use href="#r7406" x="753" y="85" fill="#000"/><use href="#r5730" x="765" y="85" fill="#000"/><use href="#r5740" x="777" y="85" fill="#000"/><use href="#r49" x="861" y="85" fill="#000"/><use href="#r50" x="867" y="85" fill="#000"/><use href="#r5730" x="873" y="85" fill="#000"/><use href="#r5740" x="885" y="85" fill="#000"/><use href="#r6570" x="1004" y="85" fill="#000"/><use href="#r91cf" x="1016" y="85" fill="#000"/><use href="#r30" x="597" y="104" fill="#0c1850"/><use href="#r38" x="603" y="104" fill="#0c1850"/><use href="#r3a" x="609" y="104" fill="#0c1850"/><use href="#r31" x="615" y="104" fill="#0c1850"/><use href="#r30" x="621" y="104" fill="#0c1850"/><use href="#r3a" x="627" y="104" fill="#0c1850"/><use href="#r37" x="633" y="104" fill="#0c1850"/><use href="#r35" x="639" y="104" fill="#0c1850"/><use href="#r3a" x="645" y="104" fill="#0c1850"/><use href="#r30" x="651" y="104" fill="#0c1850"/><use href="#r36" x="657" y="104" fill="#0c1850"/><use href="#r3a" x="663" y="104" fill="#0c1850"/><use href="#r31" x="669" y="104" fill="#0c1850"/><use href="#r31" x="675" y="104" fill="#0c1850"/><use href="#r3a" x="681" y="104" fill="#0c1850"/><use href="#r42" x="687" y="104" fill="#0c1850"/><use href="#r34" x="693" y="104" fill="#0c1850"/><use href="#r30" x="741" y="104" fill="#0c1850"/><use href="#r38" x="747" y="104" fill="#0c1850"/><use href="#r3a" x="753" y="104" fill="#0c1850"/><use href="#r31" x="759" y="104" fill="#0c1850"/><use href="#r30" x="765" y="104" fill="#0c1850"/><use href="#r3a" x="771" y="104" fill="#0c1850"/><use href="#r37" x="777" y="104" fill="#0c1850"/><use href="#r35" x="783" y="104" fill="#0c1850"/><use href="#r3a" x="789" y="104" fill="#0c1850"/><use href="#r30" x="795" y="104" fill="#0c1850"/><use href="#r36" x="801" y="104" fill="#0c1850"/><use href="#r3a" x="807" y="104" fill="#0c1850"/><use href="#r31" x="813" y="104" fill="#0c1850"/><use href="#r31" x="819" y="104" fill="#0c1850"/><use href="#r3a" x="825" y="104" fill="#0c1850"/><use href="#r42" x="831" y="104" fill="#0c1850"/><use href="#r34" x="837" y="104" fill="#0c1850"/><use href="#r2d" x="861" y="104" fill="#0c1850"/><use href="#r39" x="1010" y="104" fill="#0c1850"/><use href="#r36" x="1016" y="104" fill="#0c1850"/><use href="#r30" x="1022" y="104" fill="#0c1850"/><use href="#r34" x="597" y="123" fill="#000"/><use href="#r30" x="603" y="123" fill="#000"/><use href="#r3a" x="609" y="123" fill="#000"/><use href="#r31" x="615" y="123" fill="#000"/><use href="#r36" x="621" y="123" fill="#000"/><use href="#r3a" x="627" y="123" fill="#000"/><use href="#r39" x="633" y="123" fill="#000"/><use href="#r46" x="639" y="123" fill="#000"/><use href="#r3a" x="645" y="123" fill="#000"/><use href="#r36" x="651" y="123" fill="#000"/><use href="#r37" x="657" y="123" fill="#000"/><use href="#r3a" x="663" y="123" fill="#000"/><use href="#r41" x="669" y="123" fill="#000"/><use href="#r38" x="675" y="123" fill="#000"/><use href="#r3a" x="681" y="123" fill="#000"/><use href="#r38" x="687" y="123" fill="#000"/><use href="#r36" x="693" y="123" fill="#000"/><use href="#r34" x="741" y="123" fill="#000"/><use href="#r30" x="747" y="123" fill="#000"/><use href="#r3a" x="753" y="123" fill="#000"/><use href="#r31" x="759" y="123" fill="#000"/><use href="#r36" x="765" y="123" fill="#000"/><use href="#r3a" x="771" y="123" fill="#000"/><use href="#r39" x="777" y="123" fill="#000"/><use href="#r46" x="783" y="123" fill="#000"/><use href="#r3a" x="789" y="123" fill="#000"/><use href="#r36" x="795" y="123" fill="#000"/><use href="#r37" x="801" y="123" fill="#000"/><use href="#r3a" x="807" y="123" fill="#000"/><use href="#r41" x="813" y="123" fill="#000"/><use href="#r38" x="819" y="123" fill="#000"/><use href="#r3a" x="825" y="123" fill="#000"/><use href="#r38" x="831" y="123" fill="#000"/><use href="#r36" x="837" y="123" fill="#000"/><use href="#r2d" x="861" y="123" fill="#000"/><use href="#r34" x="1010" y="123" fill="#000"/><use href="#r37" x="1016" y="123" fill="#000"/><use href="#r35" x="1022" y="123" fill="#000"/><use href="#r45" x="597" y="142" fill="#000"/><use href="#r30" x="603" y="142" fill="#000"/><use href="#r3a" x="609" y="142" fill="#000"/><use href="#r30" x="615" y="142" fill="#000"/><use href="#r35" x="621" y="142" fill="#000"/><use href="#r3a" x="627" y="142" fill="#000"/><use href="#r43" x="633" y="142" fill="#000"/><use href="#r35" x="639" y="142" fill="#000"/><use href="#r3a" x="645" y="142" fill="#000"/><use href="#r44" x="651" y="142" fill="#000"/><use href="#r33" x="657" y="142" fill="#000"/><use href="#r3a" x="663" y="142" fill="#000"/><use href="#r32" x="669" y="142" fill="#000"/><use href="#r42" x="675" y="142" fill="#000"/><use href="#r3a" x="681" y="142" fill="#000"/><use href="#r36" x="687" y="142" fill="#000"/><use href="#r43" x="693" y="142" fill="#000"/><use href="#r45" x="741" y="142" fill="#000"/><use href="#r30" x="747" y="142" fill="#000"/><use href="#r3a" x="753" y="142" fill="#000"/><use href="#r30" x="759" y="142" fill="#000"/><use href="#r35" x="765" y="142" fill="#000"/><use href="#r3a" x="771" y="142" fill="#000"/><use href="#r43" x="777" y="142" fill="#000"/><use href="#r35" x="783" y="142" fill="#000"/><use href="#r3a" x="789" y="142" fill="#000"/><use href="#r44" x="795" y="142" fill="#000"/><use href="#r33" x="801" y="142" fill="#000"/><use href="#r3a" x="807" y="142" fill="#000"/><use href="#r32" x="813" y="142" fill="#000"/><use href="#r42" x="819" y="142" fill="#000"/><use href="#r3a" x="825" y="142" fill="#000"/><use href="#r36" x="831" y="142" fill="#000"/><use href="#r43" x="837" y="142" fill="#000"/><use href="#r2d" x="861" y="142" fill="#000"/><use href="#r34" x="1010" y="142" fill="#000"/><use href="#r37" x="1016" y="142" fill="#000"/><use href="#r34" x="1022" y="142" fill="#000"/><use href="#r30" x="597" y="161" fill="#000"/><use href="#r30" x="603" y="161" fill="#000"/><use href="#r3a" x="609" y="161" fill="#000"/><use href="#r32" x="615" y="161" fill="#000"/><use href="#r37" x="621" y="161" fill="#000"/><use href="#r3a" x="627" y="161" fill="#000"/><use href="#r31" x="633" y="161" fill="#000"/><use href="#r39" x="639" y="161" fill="#000"/><use href="#r3a" x="645" y="161" fill="#000"/><use href="#r36" x="651" y="161" fill="#000"/><use href="#r37" x="657" y="161" fill="#000"/><use href="#r3a" x="663" y="161" fill="#000"/><use href="#r46" x="669" y="161" fill="#000"/><use href="#r44" x="675" y="161" fill="#000"/><use href="#r3a" x="681" y="161" fill="#000"/><use href="#r41" x="687" y="161" fill="#000"/><use href="#r30" x="693" y="161" fill="#000"/><use href="#r30" x="741" y="161" fill="#000"/><use href="#r30" x="747" y="161" fill="#000"/><use href="#r3a" x="753" y="161" fill="#000"/><use href="#r32" x="759" y="161" fill="#000"/><use href="#r37" x="765" y="161" fill="#000"/><use href="#r3a" x="771" y="161" fill="#000"/><use href="#r31" x="777" y="161" fill="#000"/><use href="#r39" x="783" y="161" fill="#000"/><use href="#r3a" x="789" y="161" fill="#000"/><use href="#r36" x="795" y="161" fill="#000"/><use href="#r37" x="801" y="161" fill="#000"/><use href="#r3a" x="807" y="161" fill="#000"/><use href="#r46" x="813" y="161" fill="#000"/><use href="#r44" x="819" y="161" fill="#000"/><use href="#r3a" x="825" y="161" fill="#000"/><use href="#r41" x="831" y="161" fill="#000"/><use href="#r30" x="837" y="161" fill="#000"/><use href="#r2d" x="861" y="161" fill="#000"/><use href="#r34" x="1010" y="161" fill="#000"/><use href="#r37" x="1016" y="161" fill="#000"/><use href="#r35" x="1022" y="161" fill="#000"/><use href="#r30" x="597" y="180" fill="#000"/><use href="#r38" x="603" y="180" fill="#000"/><use href="#r3a" x="609" y="180" fill="#000"/><use href="#r31" x="615" y="180" fill="#000"/><use href="#r30" x="621" y="180" fill="#000"/><use href="#r3a" x="627" y="180" fill="#000"/><use href="#r37" x="633" y="180" fill="#000"/><use href="#r35" x="639" y="180" fill="#000"/><use href="#r3a" x="645" y="180" fill="#000"/><use href="#r43" x="651" y="180" fill="#000"/><use href="#r33" x="657" y="180" fill="#000"/><use href="#r3a" x="663" y="180" fill="#000"/><use href="#r42" x="669" y="180" fill="#000"/><use href="#r36" x="675" y="180" fill="#000"/><use href="#r3a" x="681" y="180" fill="#000"/><use href="#r31" x="687" y="180" fill="#000"/><use href="#r39" x="693" y="180" fill="#000"/><use href="#r30" x="741" y="180" fill="#000"/><use href="#r38" x="747" y="180" fill="#000"/><use href="#r3a" x="753" y="180" fill="#000"/><use href="#r31" x="759" y="180" fill="#000"/><use href="#r30" x="765" y="180" fill="#000"/><use href="#r3a" x="771" y="180" fill="#000"/><use href="#r37" x="777" y="180" fill="#000"/><use href="#r35" x="783" y="180" fill="#000"/><use href="#r3a" x="789" y="180" fill="#000"/><use href="#r43" x="795" y="180" fill="#000"/><use href="#r33" x="801" y="180" fill="#000"/><use href="#r3a" x="807" y="180" fill="#000"/><use href="#r42" x="813" y="180" fill="#000"/><use href="#r36" x="819" y="180" fill="#000"/><use href="#r3a" x="825" y="180" fill="#000"/><use href="#r31" x="831" y="180" fill="#000"/><use href="#r39" x="837" y="180" fill="#000"/><use href="#r2d" x="861" y="180" fill="#000"/><use href="#r39" x="1010" y="180" fill="#000"/><use href="#r36" x="1016" y="180" fill="#000"/><use href="#r32" x="1022" y="180" fill="#000"/><use href="#r30" x="597" y="199" fill="#000"/><use href="#r38" x="603" y="199" fill="#000"/><use href="#r3a" x="609" y="199" fill="#000"/><use href="#r31" x="615" y="199" fill="#000"/><use href="#r30" x="621" y="199" fill="#000"/><use href="#r3a" x="627" y="199" fill="#000"/><use href="#r37" x="633" y="199" fill="#000"/><use href="#r35" x="639" y="199" fill="#000"/><use href="#r3a" x="645" y="199" fill="#000"/><use href="#r30" x="651" y="199" fill="#000"/><use href="#r43" x="657" y="199" fill="#000"/><use href="#r3a" x="663" y="199" fill="#000"/><use href="#r38" x="669" y="199" fill="#000"/><use href="#r35" x="675" y="199" fill="#000"/><use href="#r3a" x="681" y="199" fill="#000"/><use href="#r35" x="687" y="199" fill="#000"/><use href="#r45" x="693" y="199" fill="#000"/><use href="#r30" x="741" y="199" fill="#000"/><use href="#r38" x="747" y="199" fill="#000"/><use href="#r3a" x="753" y="199" fill="#000"/><use href="#r31" x="759" y="199" fill="#000"/><use href="#r30" x="765" y="199" fill="#000"/><use href="#r3a" x="771" y="199" fill="#000"/><use href="#r37" x="777" y="199" fill="#000"/><use href="#r35" x="783" y="199" fill="#000"/><use href="#r3a" x="789" y="199" fill="#000"/><use href="#r30" x="795" y="199" fill="#000"/><use href="#r43" x="801" y="199" fill="#000"/><use href="#r3a" x="807" y="199" fill="#000"/><use href="#r38" x="813" y="199" fill="#000"/><use href="#r35" x="819" y="199" fill="#000"/><use href="#r3a" x="825" y="199" fill="#000"/><use href="#r35" x="831" y="199" fill="#000"/><use href="#r45" x="837" y="199" fill="#000"/><use href="#r2d" x="861" y="199" fill="#000"/><use href="#r39" x="1010" y="199" fill="#000"/><use href="#r36" x="1016" y="199" fill="#000"/><use href="#r31" x="1022" y="199" fill="#000"/><use href="#r46" x="597" y="218" fill="#000"/><use href="#r46" x="603" y="218" fill="#000"/><use href="#r3a" x="609" y="218" fill="#000"/><use href="#r46" x="615" y="218" fill="#000"/><use href="#r46" x="621" y="218" fill="#000"/><use href="#r3a" x="627" y="218" fill="#000"/><use href="#r46" x="633" y="218" fill="#000"/><use href="#r46" x="639" y="218" fill="#000"/><use href="#r3a" x="645" y="218" fill="#000"/><use href="#r46" x="651" y="218" fill="#000"/><use href="#r46" x="657" y="218" fill="#000"/><use href="#r3a" x="663" y="218" fill="#000"/><use href="#r46" x="669" y="218" fill="#000"/><use href="#r46" x="675" y="218" fill="#000"/><use href="#r3a" x="681" y="218" fill="#000"/><use href="#r46" x="687" y="218" fill="#000"/><use href="#r46" x="693" y="218" fill="#000"/><use href="#r46" x="741" y="218" fill="#000"/><use href="#r46" x="747" y="218" fill="#000"/><use href="#r3a" x="753" y="218" fill="#000"/><use href="#r46" x="759" y="218" fill="#000"/><use href="#r46" x="765" y="218" fill="#000"/><use href="#r3a" x="771" y="218" fill="#000"/><use href="#r46" x="777" y="218" fill="#000"/><use href="#r46" x="783" y="218" fill="#000"/><use href="#r3a" x="789" y="218" fill="#000"/><use href="#r46" x="795" y="218" fill="#000"/><use href="#r46" x="801" y="218" fill="#000"/><use href="#r3a" x="807" y="218" fill="#000"/><use href="#r46" x="813" y="218" fill="#000"/><use href="#r46" x="819" y="218" fill="#000"/><use href="#r3a" x="825" y="218" fill="#000"/><use href="#r46" x="831" y="218" fill="#000"/><use href="#r46" x="837" y="218" fill="#000"/><use href="#r2d" x="861" y="218" fill="#000"/><use href="#r35" x="998" y="218" fill="#000"/><use href="#r2c" x="1004" y="218" fill="#000"/><use href="#r37" x="1010" y="218" fill="#000"/><use href="#r35" x="1016" y="218" fill="#000"/><use href="#r33" x="1022" y="218" fill="#000"/><use href="#r30" x="597" y="237" fill="#000"/><use href="#r30" x="603" y="237" fill="#000"/><use href="#r3a" x="609" y="237" fill="#000"/><use href="#r33" x="615" y="237" fill="#000"/><use href="#r43" x="621" y="237" fill="#000"/><use href="#r3a" x="627" y="237" fill="#000"/><use href="#r35" x="633" y="237" fill="#000"/><use href="#r30" x="639" y="237" fill="#000"/><use href="#r3a" x="645" y="237" fill="#000"/><use href="#r32" x="651" y="237" fill="#000"/><use href="#r30" x="657" y="237" fill="#000"/><use href="#r3a" x="663" y="237" fill="#000"/><use href="#r33" x="669" y="237" fill="#000"/><use href="#r38" x="675" y="237" fill="#000"/><use href="#r3a" x="681" y="237" fill="#000"/><use href="#r33" x="687" y="237" fill="#000"/><use href="#r44" x="693" y="237" fill="#000"/><use href="#r30" x="741" y="237" fill="#000"/><use href="#r30" x="747" y="237" fill="#000"/><use href="#r3a" x="753" y="237" fill="#000"/><use href="#r33" x="759" y="237" fill="#000"/><use href="#r43" x="765" y="237" fill="#000"/><use href="#r3a" x="771" y="237" fill="#000"/><use href="#r35" x="777" y="237" fill="#000"/><use href="#r30" x="783" y="237" fill="#000"/><use href="#r3a" x="789" y="237" fill="#000"/><use href="#r32" x="795" y="237" fill="#000"/><use href="#r30" x="801" y="237" fill="#000"/><use href="#r3a" x="807" y="237" fill="#000"/><use href="#r33" x="813" y="237" fill="#000"/><use href="#r38" x="819" y="237" fill="#000"/><use href="#r3a" x="825" y="237" fill="#000"/><use href="#r33" x="831" y="237" fill="#000"/><use href="#r44" x="837" y="237" fill="#000"/><use href="#r2d" x="861" y="237" fill="#000"/><use href="#r31" x="998" y="237" fill="#000"/><use href="#r2c" x="1004" y="237" fill="#000"/><use href="#r34" x="1010" y="237" fill="#000"/><use href="#r34" x="1016" y="237" fill="#000"/><use href="#r35" x="1022" y="237" fill="#000"/><use href="#r42" x="597" y="256" fill="#000"/><use href="#r43" x="603" y="256" fill="#000"/><use href="#r3a" x="609" y="256" fill="#000"/><use href="#r41" x="615" y="256" fill="#000"/><use href="#r45" x="621" y="256" fill="#000"/><use href="#r3a" x="627" y="256" fill="#000"/><use href="#r43" x="633" y="256" fill="#000"/><use href="#r35" x="639" y="256" fill="#000"/><use href="#r3a" x="645" y="256" fill="#000"/><use href="#r38" x="651" y="256" fill="#000"/><use href="#r35" x="657" y="256" fill="#000"/><use href="#r3a" x="663" y="256" fill="#000"/><use href="#r31" x="669" y="256" fill="#000"/><use href="#r31" x="675" y="256" fill="#000"/><use href="#r3a" x="681" y="256" fill="#000"/><use href="#r32" x="687" y="256" fill="#000"/><use href="#r41" x="693" y="256" fill="#000"/><use href="#r42" x="741" y="256" fill="#000"/><use href="#r43" x="747" y="256" fill="#000"/><use href="#r3a" x="753" y="256" fill="#000"/><use href="#r41" x="759" y="256" fill="#000"/><use href="#r45" x="765" y="256" fill="#000"/><use href="#r3a" x="771" y="256" fill="#000"/><use href="#r43" x="777" y="256" fill="#000"/><use href="#r35" x="783" y="256" fill="#000"/><use href="#r3a" x="789" y="256" fill="#000"/><use href="#r38" x="795" y="256" fill="#000"/><use href="#r35" x="801" y="256" fill="#000"/><use href="#r3a" x="807" y="256" fill="#000"/><use href="#r31" x="813" y="256" fill="#000"/><use href="#r31" x="819" y="256" fill="#000"/><use href="#r3a" x="825" y="256" fill="#000"/><use href="#r32" x="831" y="256" fill="#000"/><use href="#r41" x="837" y="256" fill="#000"/><use href="#r2d" x="861" y="256" fill="#000"/><use href="#r31" x="1022" y="256" fill="#000"/><use href="#b8bca" x="8" y="452" fill="#15325f"/><use href="#b65ad" x="21" y="452" fill="#15325f"/><use href="#b4e8b" x="34" y="452" fill="#15325f"/><use href="#b4ef6" x="47" y="452" fill="#15325f"/><use href="#b8bca" x="1073" y="475" fill="#000"/><use href="#b65ad" x="1086" y="475" fill="#000"/><use href="#b4e8b" x="1099" y="475" fill="#000"/><use href="#b4ef6" x="1112" y="475" fill="#000"/><use href="#r32" x="1138" y="475" fill="#000"/><use href="#r36" x="1144" y="475" fill="#000"/><use href="#r38" x="1150" y="475" fill="#000"/><use href="#r4e25" x="13" y="498" fill="#000"/><use href="#r91cd" x="25" y="498" fill="#000"/><use href="#r7a0b" x="37" y="498" fill="#000"/><use href="#r5ea6" x="49" y="498" fill="#000"/><use href="#r7c7b" x="78" y="498" fill="#000"/><use href="#r578b" x="90" y="498" fill="#000"/><use href="#r5c42" x="178" y="498" fill="#000"/><use href="#r522b" x="190" y="498" fill="#000"/><use href="#r4e8b" x="298" y="498" fill="#000"/><use href="#r4ef6" x="310" y="498" fill="#000"/><use href="#r63cf" x="322" y="498" fill="#000"/><use href="#r8ff0" x="334" y="498" fill="#000"/><use href="#r6e90" x="698" y="498" fill="#000"/><use href="#r49" x="710" y="498" fill="#000"/><use href="#r50" x="716" y="498" fill="#000"/><use href="#r5730" x="722" y="498" fill="#000"/><use href="#r5740" x="734" y="498" fill="#000"/><use href="#r6e90" x="838" y="498" fill="#000"/><use href="#r7269" x="850" y="498" fill="#000"/><use href="#r7406" x="862" y="498" fill="#000"/><use href="#r5730" x="874" y="498" fill="#000"/><use href="#r5740" x="886" y="498" fill="#000"/><use href="#r76ee" x="998" y="498" fill="#000"/><use href="#r6807" x="1010" y="498" fill="#000"/><use href="#r49" x="1022" y="498" fill="#000"/><use href="#r50" x="1028" y="498" fill="#000"/><use href="#r5730" x="1034" y="498" fill="#000"/><use href="#r5740" x="1046" y="498" fill="#000"/><use href="#r76ee" x="1139" y="498" fill="#000"/><use href="#ic_warn" x="28" y="507"/><use href="#r5b89" x="78" y="517" fill="#0c1850"/><use href="#r5168" x="90" y="517" fill="#0c1850"/><use href="#r6570" x="178" y="517" fill="#0c1850"/><use href="#r636e" x="190" y="517" fill="#0c1850"/><use href="#r94fe" x="202" y="517" fill="#0c1850"/><use href="#r8def" x="214" y="517" fill="#0c1850"/><use href="#r5c42" x="226" y="517" fill="#0c1850"/><use href="#r41" x="298" y="517" fill="#0c1850"/><use href="#r52" x="304" y="517" fill="#0c1850"/><use href="#r50" x="310" y="517" fill="#0c1850"/><use href="#r5730" x="316" y="517" fill="#0c1850"/><use href="#r5740" x="328" y="517" fill="#0c1850"/><use href="#r626b" x="340" y="517" fill="#0c1850"/><use href="#r63cf" x="352" y="517" fill="#0c1850"/><use href="#r28" x="364" y="517" fill="#0c1850"/><use href="#r4e3b" x="370" y="517" fill="#0c1850"/><use href="#r673a" x="382" y="517" fill="#0c1850"/><use href="#r7684" x="394" y="517" fill="#0c1850"/><use href="#r4d" x="406" y="517" fill="#0c1850"/><use href="#r41" x="412" y="517" fill="#0c1850"/><use href="#r43" x="418" y="517" fill="#0c1850"/><use href="#r4e3a" x="424" y="517" fill="#0c1850"/><use href="#r30" x="442" y="517" fill="#0c1850"/><use href="#r38" x="448" y="517" fill="#0c1850"/><use href="#r3a" x="454" y="517" fill="#0c1850"/><use href="#r31" x="460" y="517" fill="#0c1850"/><use href="#r30" x="466" y="517" fill="#0c1850"/><use href="#r3a" x="472" y="517" fill="#0c1850"/><use href="#r37" x="478" y="517" fill="#0c1850"/><use href="#r35" x="484" y="517" fill="#0c1850"/><use href="#r3a" x="490" y="517" fill="#0c1850"/><use href="#r30" x="496" y="517" fill="#0c1850"/><use href="#r36" x="502" y="517" fill="#0c1850"/><use href="#r3a" x="508" y="517" fill="#0c1850"/><use href="#r31" x="514" y="517" fill="#0c1850"/><use href="#r31" x="520" y="517" fill="#0c1850"/><use href="#r3a" x="526" y="517" fill="#0c1850"/><use href="#r42" x="532" y="517" fill="#0c1850"/><use href="#r34" x="538" y="517" fill="#0c1850"/><use href="#r2c" x="544" y="517" fill="#0c1850"/><use href="#r49" x="556" y="517" fill="#0c1850"/><use href="#r50" x="562" y="517" fill="#0c1850"/><use href="#r5730" x="568" y="517" fill="#0c1850"/><use href="#r5740" x="580" y="517" fill="#0c1850"/><use href="#r4e3a" x="592" y="517" fill="#0c1850"/><use href="#r31" x="610" y="517" fill="#0c1850"/><use href="#r39" x="616" y="517" fill="#0c1850"/><use href="#r32" x="622" y="517" fill="#0c1850"/><use href="#r2e" x="628" y="517" fill="#0c1850"/><use href="#r31" x="634" y="517" fill="#0c1850"/><use href="#r36" x="640" y="517" fill="#0c1850"/><use href="#r38" x="646" y="517" fill="#0c1850"/><use href="#r2e" x="652" y="517" fill="#0c1850"/><use href="#r31" x="658" y="517" fill="#0c1850"/><use href="#r2e" x="664" y="517" fill="#0c1850"/><use href="#r31" x="670" y="517" fill="#0c1850"/><use href="#r29" x="676" y="517" fill="#0c1850"/><use href="#r31" x="698" y="517" fill="#0c1850"/><use href="#r39" x="704" y="517" fill="#0c1850"/><use href="#r32" x="710" y="517" fill="#0c1850"/><use href="#r2e" x="716" y="517" fill="#0c1850"/><use href="#r31" x="722" y="517" fill="#0c1850"/><use href="#r36" x="728" y="517" fill="#0c1850"/><use href="#r38" x="734" y="517" fill="#0c1850"/><use href="#r2e" x="740" y="517" fill="#0c1850"/><use href="#r31" x="746" y="517" fill="#0c1850"/><use href="#r2e" x="752" y="517" fill="#0c1850"/><use href="#r31" x="758" y="517" fill="#0c1850"/><use href="#r30" x="838" y="517" fill="#0c1850"/><use href="#r38" x="844" y="517" fill="#0c1850"/><use href="#r3a" x="850" y="517" fill="#0c1850"/><use href="#r31" x="856" y="517" fill="#0c1850"/><use href="#r30" x="862" y="517" fill="#0c1850"/><use href="#r3a" x="868" y="517" fill="#0c1850"/><use href="#r37" x="874" y="517" fill="#0c1850"/><use href="#r35" x="880" y="517" fill="#0c1850"/><use href="#r3a" x="886" y="517" fill="#0c1850"/><use href="#r30" x="892" y="517" fill="#0c1850"/><use href="#r36" x="898" y="517" fill="#0c1850"/><use href="#r3a" x="904" y="517" fill="#0c1850"/><use href="#r31" x="910" y="517" fill="#0c1850"/><use href="#r31" x="916" y="517" fill="#0c1850"/><use href="#r3a" x="922" y="517" fill="#0c1850"/><use href="#r42" x="928" y="517" fill="#0c1850"/><use href="#r34" x="934" y="517" fill="#0c1850"/><use href="#r31" x="998" y="517" fill="#0c1850"/><use href="#r39" x="1004" y="517" fill="#0c1850"/><use href="#r32" x="1010" y="517" fill="#0c1850"/><use href="#r2e" x="1016" y="517" fill="#0c1850"/><use href="#r31" x="1022" y="517" fill="#0c1850"/><use href="#r36" x="1028" y="517" fill="#0c1850"/><use href="#r38" x="1034" y="517" fill="#0c1850"/><use href="#r2e" x="1040" y="517" fill="#0c1850"/><use href="#r31" x="1046" y="517" fill="#0c1850"/><use href="#r2e" x="1052" y="517" fill="#0c1850"/><use href="#r36" x="1058" y="517" fill="#0c1850"/><use href="#r35" x="1064" y="517" fill="#0c1850"/><use href="#r46" x="1139" y="517" fill="#0c1850"/><use href="#r46" x="1145" y="517" fill="#0c1850"/><use href="#ic_warn" x="28" y="526"/><use href="#r5b89" x="78" y="536" fill="#000"/><use href="#r5168" x="90" y="536" fill="#000"/><use href="#r6570" x="178" y="536" fill="#000"/><use href="#r636e" x="190" y="536" fill="#000"/><use href="#r94fe" x="202" y="536" fill="#000"/><use href="#r8def" x="214" y="536" fill="#000"/><use href="#r5c42" x="226" y="536" fill="#000"/><use href="#r41" x="298" y="536" fill="#000"/><use href="#r52" x="304" y="536" fill="#000"/><use href="#r50" x="310" y="536" fill="#000"/><use href="#r5730" x="316" y="536" fill="#000"/><use href="#r5740" x="328" y="536" fill="#000"/><use href="#r626b" x="340" y="536" fill="#000"/><use href="#r63cf" x="352" y="536" fill="#000"/><use href="#r28" x="364" y="536" fill="#000"/><use href="#r4e3b" x="370" y="536" fill="#000"/><use href="#r673a" x="382" y="536" fill="#000"/><use href="#r7684" x="394" y="536" fill="#000"/><use href="#r4d" x="406" y="536" fill="#000"/><use href="#r41" x="412" y="536" fill="#000"/><use href="#r43" x="418" y="536" fill="#000"/><use href="#r4e3a" x="424" y="536" fill="#000"/><use href="#r30" x="442" y="536" fill="#000"/><use href="#r38" x="448" y="536" fill="#000"/><use href="#r3a" x="454" y="536" fill="#000"/><use href="#r31" x="460" y="536" fill="#000"/><use href="#r30" x="466" y="536" fill="#000"/><use href="#r3a" x="472" y="536" fill="#000"/><use href="#r37" x="478" y="536" fill="#000"/><use href="#r35" x="484" y="536" fill="#000"/><use href="#r3a" x="490" y="536" fill="#000"/><use href="#r30" x="496" y="536" fill="#000"/><use href="#r36" x="502" y="536" fill="#000"/><use href="#r3a" x="508" y="536" fill="#000"/><use href="#r31" x="514" y="536" fill="#000"/><use href="#r31" x="520" y="536" fill="#000"/><use href="#r3a" x="526" y="536" fill="#000"/><use href="#r42" x="532" y="536" fill="#000"/><use href="#r34" x="538" y="536" fill="#000"/><use href="#r2c" x="544" y="536" fill="#000"/><use href="#r49" x="556" y="536" fill="#000"/><use href="#r50" x="562" y="536" fill="#000"/><use href="#r5730" x="568" y="536" fill="#000"/><use href="#r5740" x="580" y="536" fill="#000"/><use href="#r4e3a" x="592" y="536" fill="#000"/><use href="#r31" x="610" y="536" fill="#000"/><use href="#r39" x="616" y="536" fill="#000"/><use href="#r32" x="622" y="536" fill="#000"/><use href="#r2e" x="628" y="536" fill="#000"/><use href="#r31" x="634" y="536" fill="#000"/><use href="#r36" x="640" y="536" fill="#000"/><use href="#r38" x="646" y="536" fill="#000"/><use href="#r2e" x="652" y="536" fill="#000"/><use href="#r31" x="658" y="536" fill="#000"/><use href="#r2e" x="664" y="536" fill="#000"/><use href="#r31" x="670" y="536" fill="#000"/><use href="#r29" x="676" y="536" fill="#000"/><use href="#r31" x="698" y="536" fill="#000"/><use href="#r39" x="704" y="536" fill="#000"/><use href="#r32" x="710" y="536" fill="#000"/><use href="#r2e" x="716" y="536" fill="#000"/><use href="#r31" x="722" y="536" fill="#000"/><use href="#r36" x="728" y="536" fill="#000"/><use href="#r38" x="734" y="536" fill="#000"/><use href="#r2e" x="740" y="536" fill="#000"/><use href="#r31" x="746" y="536" fill="#000"/><use href="#r2e" x="752" y="536" fill="#000"/><use href="#r31" x="758" y="536" fill="#000"/><use href="#r30" x="838" y="536" fill="#000"/><use href="#r38" x="844" y="536" fill="#000"/><use href="#r3a" x="850" y="536" fill="#000"/><use href="#r31" x="856" y="536" fill="#000"/><use href="#r30" x="862" y="536" fill="#000"/><use href="#r3a" x="868" y="536" fill="#000"/><use href="#r37" x="874" y="536" fill="#000"/><use href="#r35" x="880" y="536" fill="#000"/><use href="#r3a" x="886" y="536" fill="#000"/><use href="#r30" x="892" y="536" fill="#000"/><use href="#r36" x="898" y="536" fill="#000"/><use href="#r3a" x="904" y="536" fill="#000"/><use href="#r31" x="910" y="536" fill="#000"/><use href="#r31" x="916" y="536" fill="#000"/><use href="#r3a" x="922" y="536" fill="#000"/><use href="#r42" x="928" y="536" fill="#000"/><use href="#r34" x="934" y="536" fill="#000"/><use href="#r31" x="998" y="536" fill="#000"/><use href="#r39" x="1004" y="536" fill="#000"/><use href="#r32" x="1010" y="536" fill="#000"/><use href="#r2e" x="1016" y="536" fill="#000"/><use href="#r31" x="1022" y="536" fill="#000"/><use href="#r36" x="1028" y="536" fill="#000"/><use href="#r38" x="1034" y="536" fill="#000"/><use href="#r2e" x="1040" y="536" fill="#000"/><use href="#r31" x="1046" y="536" fill="#000"/><use href="#r2e" x="1052" y="536" fill="#000"/><use href="#r38" x="1058" y="536" fill="#000"/><use href="#r37" x="1064" y="536" fill="#000"/><use href="#r46" x="1139" y="536" fill="#000"/><use href="#r46" x="1145" y="536" fill="#000"/><use href="#ic_warn" x="28" y="545"/><use href="#r5b89" x="78" y="555" fill="#000"/><use href="#r5168" x="90" y="555" fill="#000"/><use href="#r6570" x="178" y="555" fill="#000"/><use href="#r636e" x="190" y="555" fill="#000"/><use href="#r94fe" x="202" y="555" fill="#000"/><use href="#r8def" x="214" y="555" fill="#000"/><use href="#r5c42" x="226" y="555" fill="#000"/><use href="#r41" x="298" y="555" fill="#000"/><use href="#r52" x="304" y="555" fill="#000"/><use href="#r50" x="310" y="555" fill="#000"/><use href="#r5730" x="316" y="555" fill="#000"/><use href="#r5740" x="328" y="555" fill="#000"/><use href="#r626b" x="340" y="555" fill="#000"/><use href="#r63cf" x="352" y="555" fill="#000"/><use href="#r28" x="364" y="555" fill="#000"/><use href="#r4e3b" x="370" y="555" fill="#000"/><use href="#r673a" x="382" y="555" fill="#000"/><use href="#r7684" x="394" y="555" fill="#000"/><use href="#r4d" x="406" y="555" fill="#000"/><use href="#r41" x="412" y="555" fill="#000"/><use href="#r43" x="418" y="555" fill="#000"/><use href="#r4e3a" x="424" y="555" fill="#000"/><use href="#r30" x="442" y="555" fill="#000"/><use href="#r38" x="448" y="555" fill="#000"/><use href="#r3a" x="454" y="555" fill="#000"/><use href="#r31" x="460" y="555" fill="#000"/><use href="#r30" x="466" y="555" fill="#000"/><use href="#r3a" x="472" y="555" fill="#000"/><use href="#r37" x="478" y="555" fill="#000"/><use href="#r35" x="484" y="555" fill="#000"/><use href="#r3a" x="490" y="555" fill="#000"/><use href="#r30" x="496" y="555" fill="#000"/><use href="#r36" x="502" y="555" fill="#000"/><use href="#r3a" x="508" y="555" fill="#000"/><use href="#r31" x="514" y="555" fill="#000"/><use href="#r31" x="520" y="555" fill="#000"/><use href="#r3a" x="526" y="555" fill="#000"/><use href="#r42" x="532" y="555" fill="#000"/><use href="#r34" x="538" y="555" fill="#000"/><use href="#r2c" x="544" y="555" fill="#000"/><use href="#r49" x="556" y="555" fill="#000"/><use href="#r50" x="562" y="555" fill="#000"/><use href="#r5730" x="568" y="555" fill="#000"/><use href="#r5740" x="580" y="555" fill="#000"/><use href="#r4e3a" x="592" y="555" fill="#000"/><use href="#r31" x="610" y="555" fill="#000"/><use href="#r39" x="616" y="555" fill="#000"/><use href="#r32" x="622" y="555" fill="#000"/><use href="#r2e" x="628" y="555" fill="#000"/><use href="#r31" x="634" y="555" fill="#000"/><use href="#r36" x="640" y="555" fill="#000"/><use href="#r38" x="646" y="555" fill="#000"/><use href="#r2e" x="652" y="555" fill="#000"/><use href="#r31" x="658" y="555" fill="#000"/><use href="#r2e" x="664" y="555" fill="#000"/><use href="#r31" x="670" y="555" fill="#000"/><use href="#r29" x="676" y="555" fill="#000"/><use href="#r31" x="698" y="555" fill="#000"/><use href="#r39" x="704" y="555" fill="#000"/><use href="#r32" x="710" y="555" fill="#000"/><use href="#r2e" x="716" y="555" fill="#000"/><use href="#r31" x="722" y="555" fill="#000"/><use href="#r36" x="728" y="555" fill="#000"/><use href="#r38" x="734" y="555" fill="#000"/><use href="#r2e" x="740" y="555" fill="#000"/><use href="#r31" x="746" y="555" fill="#000"/><use href="#r2e" x="752" y="555" fill="#000"/><use href="#r31" x="758" y="555" fill="#000"/><use href="#r30" x="838" y="555" fill="#000"/><use href="#r38" x="844" y="555" fill="#000"/><use href="#r3a" x="850" y="555" fill="#000"/><use href="#r31" x="856" y="555" fill="#000"/><use href="#r30" x="862" y="555" fill="#000"/><use href="#r3a" x="868" y="555" fill="#000"/><use href="#r37" x="874" y="555" fill="#000"/><use href="#r35" x="880" y="555" fill="#000"/><use href="#r3a" x="886" y="555" fill="#000"/><use href="#r30" x="892" y="555" fill="#000"/><use href="#r36" x="898" y="555" fill="#000"/><use href="#r3a" x="904" y="555" fill="#000"/><use href="#r31" x="910" y="555" fill="#000"/><use href="#r31" x="916" y="555" fill="#000"/><use href="#r3a" x="922" y="555" fill="#000"/><use href="#r42" x="928" y="555" fill="#000"/><use href="#r34" x="934" y="555" fill="#000"/><use href="#r31" x="998" y="555" fill="#000"/><use href="#r39" x="1004" y="555" fill="#000"/><use href="#r32" x="1010" y="555" fill="#000"/><use href="#r2e" x="1016" y="555" fill="#000"/><use href="#r31" x="1022" y="555" fill="#000"/><use href="#r36" x="1028" y="555" fill="#000"/><use href="#r38" x="1034" y="555" fill="#000"/><use href="#r2e" x="1040" y="555" fill="#000"/><use href="#r31" x="1046" y="555" fill="#000"/><use href="#r2e" x="1052" y="555" fill="#000"/><use href="#r38" x="1058" y="555" fill="#000"/><use href="#r46" x="1139" y="555" fill="#000"/><use href="#r46" x="1145" y="555" fill="#000"/><use href="#ic_warn" x="28" y="564"/><use href="#r5b89" x="78" y="574" fill="#000"/><use href="#r5168" x="90" y="574" fill="#000"/><use href="#r6570" x="178" y="574" fill="#000"/><use href="#r636e" x="190" y="574" fill="#000"/><use href="#r94fe" x="202" y="574" fill="#000"/><use href="#r8def" x="214" y="574" fill="#000"/><use href="#r5c42" x="226" y="574" fill="#000"/><use href="#r41" x="298" y="574" fill="#000"/><use href="#r52" x="304" y="574" fill="#000"/><use href="#r50" x="310" y="574" fill="#000"/><use href="#r5730" x="316" y="574" fill="#000"/><use href="#r5740" x="328" y="574" fill="#000"/><use href="#r626b" x="340" y="574" fill="#000"/><use href="#r63cf" x="352" y="574" fill="#000"/><use href="#r28" x="364" y="574" fill="#000"/><use href="#r4e3b" x="370" y="574" fill="#000"/><use href="#r673a" x="382" y="574" fill="#000"/><use href="#r7684" x="394" y="574" fill="#000"/><use href="#r4d" x="406" y="574" fill="#000"/><use href="#r41" x="412" y="574" fill="#000"/><use href="#r43" x="418" y="574" fill="#000"/><use href="#r4e3a" x="424" y="574" fill="#000"/><use href="#r30" x="442" y="574" fill="#000"/><use href="#r38" x="448" y="574" fill="#000"/><use href="#r3a" x="454" y="574" fill="#000"/><use href="#r31" x="460" y="574" fill="#000"/><use href="#r30" x="466" y="574" fill="#000"/><use href="#r3a" x="472" y="574" fill="#000"/><use href="#r37" x="478" y="574" fill="#000"/><use href="#r35" x="484" y="574" fill="#000"/><use href="#r3a" x="490" y="574" fill="#000"/><use href="#r30" x="496" y="574" fill="#000"/><use href="#r36" x="502" y="574" fill="#000"/><use href="#r3a" x="508" y="574" fill="#000"/><use href="#r31" x="514" y="574" fill="#000"/><use href="#r31" x="520" y="574" fill="#000"/><use href="#r3a" x="526" y="574" fill="#000"/><use href="#r42" x="532" y="574" fill="#000"/><use href="#r34" x="538" y="574" fill="#000"/><use href="#r2c" x="544" y="574" fill="#000"/><use href="#r49" x="556" y="574" fill="#000"/><use href="#r50" x="562" y="574" fill="#000"/><use href="#r5730" x="568" y="574" fill="#000"/><use href="#r5740" x="580" y="574" fill="#000"/><use href="#r4e3a" x="592" y="574" fill="#000"/><use href="#r31" x="610" y="574" fill="#000"/><use href="#r39" x="616" y="574" fill="#000"/><use href="#r32" x="622" y="574" fill="#000"/><use href="#r2e" x="628" y="574" fill="#000"/><use href="#r31" x="634" y="574" fill="#000"/><use href="#r36" x="640" y="574" fill="#000"/><use href="#r38" x="646" y="574" fill="#000"/><use href="#r2e" x="652" y="574" fill="#000"/><use href="#r31" x="658" y="574" fill="#000"/><use href="#r2e" x="664" y="574" fill="#000"/><use href="#r31" x="670" y="574" fill="#000"/><use href="#r29" x="676" y="574" fill="#000"/><use href="#r31" x="698" y="574" fill="#000"/><use href="#r39" x="704" y="574" fill="#000"/><use href="#r32" x="710" y="574" fill="#000"/><use href="#r2e" x="716" y="574" fill="#000"/><use href="#r31" x="722" y="574" fill="#000"/><use href="#r36" x="728" y="574" fill="#000"/><use href="#r38" x="734" y="574" fill="#000"/><use href="#r2e" x="740" y="574" fill="#000"/><use href="#r31" x="746" y="574" fill="#000"/><use href="#r2e" x="752" y="574" fill="#000"/><use href="#r31" x="758" y="574" fill="#000"/><use href="#r30" x="838" y="574" fill="#000"/><use href="#r38" x="844" y="574" fill="#000"/><use href="#r3a" x="850" y="574" fill="#000"/><use href="#r31" x="856" y="574" fill="#000"/><use href="#r30" x="862" y="574" fill="#000"/><use href="#r3a" x="868" y="574" fill="#000"/><use href="#r37" x="874" y="574" fill="#000"/><use href="#r35" x="880" y="574" fill="#000"/><use href="#r3a" x="886" y="574" fill="#000"/><use href="#r30" x="892" y="574" fill="#000"/><use href="#r36" x="898" y="574" fill="#000"/><use href="#r3a" x="904" y="574" fill="#000"/><use href="#r31" x="910" y="574" fill="#000"/><use href="#r31" x="916" y="574" fill="#000"/><use href="#r3a" x="922" y="574" fill="#000"/><use href="#r42" x="928" y="574" fill="#000"/><use href="#r34" x="934" y="574" fill="#000"/><use href="#r31" x="998" y="574" fill="#000"/><use href="#r39" x="1004" y="574" fill="#000"/><use href="#r32" x="1010" y="574" fill="#000"/><use href="#r2e" x="1016" y="574" fill="#000"/><use href="#r31" x="1022" y="574" fill="#000"/><use href="#r36" x="1028" y="574" fill="#000"/><use href="#r38" x="1034" y="574" fill="#000"/><use href="#r2e" x="1040" y="574" fill="#000"/><use href="#r31" x="1046" y="574" fill="#000"/><use href="#r2e" x="1052" y="574" fill="#000"/><use href="#r33" x="1058" y="574" fill="#000"/><use href="#r30" x="1064" y="574" fill="#000"/><use href="#r46" x="1139" y="574" fill="#000"/><use href="#r46" x="1145" y="574" fill="#000"/><use href="#ic_warn" x="28" y="583"/><use href="#r5b89" x="78" y="593" fill="#000"/><use href="#r5168" x="90" y="593" fill="#000"/><use href="#r6570" x="178" y="593" fill="#000"/><use href="#r636e" x="190" y="593" fill="#000"/><use href="#r94fe" x="202" y="593" fill="#000"/><use href="#r8def" x="214" y="593" fill="#000"/><use href="#r5c42" x="226" y="593" fill="#000"/><use href="#r41" x="298" y="593" fill="#000"/><use href="#r52" x="304" y="593" fill="#000"/><use href="#r50" x="310" y="593" fill="#000"/><use href="#r5730" x="316" y="593" fill="#000"/><use href="#r5740" x="328" y="593" fill="#000"/><use href="#r626b" x="340" y="593" fill="#000"/><use href="#r63cf" x="352" y="593" fill="#000"/><use href="#r28" x="364" y="593" fill="#000"/><use href="#r4e3b" x="370" y="593" fill="#000"/><use href="#r673a" x="382" y="593" fill="#000"/><use href="#r7684" x="394" y="593" fill="#000"/><use href="#r4d" x="406" y="593" fill="#000"/><use href="#r41" x="412" y="593" fill="#000"/><use href="#r43" x="418" y="593" fill="#000"/><use href="#r4e3a" x="424" y="593" fill="#000"/><use href="#r30" x="442" y="593" fill="#000"/><use href="#r38" x="448" y="593" fill="#000"/><use href="#r3a" x="454" y="593" fill="#000"/><use href="#r31" x="460" y="593" fill="#000"/><use href="#r30" x="466" y="593" fill="#000"/><use href="#r3a" x="472" y="593" fill="#000"/><use href="#r37" x="478" y="593" fill="#000"/><use href="#r35" x="484" y="593" fill="#000"/><use href="#r3a" x="490" y="593" fill="#000"/><use href="#r30" x="496" y="593" fill="#000"/><use href="#r36" x="502" y="593" fill="#000"/><use href="#r3a" x="508" y="593" fill="#000"/><use href="#r31" x="514" y="593" fill="#000"/><use href="#r31" x="520" y="593" fill="#000"/><use href="#r3a" x="526" y="593" fill="#000"/><use href="#r42" x="532" y="593" fill="#000"/><use href="#r34" x="538" y="593" fill="#000"/><use href="#r2c" x="544" y="593" fill="#000"/><use href="#r49" x="556" y="593" fill="#000"/><use href="#r50" x="562" y="593" fill="#000"/><use href="#r5730" x="568" y="593" fill="#000"/><use href="#r5740" x="580" y="593" fill="#000"/><use href="#r4e3a" x="592" y="593" fill="#000"/><use href="#r31" x="610" y="593" fill="#000"/><use href="#r39" x="616" y="593" fill="#000"/><use href="#r32" x="622" y="593" fill="#000"/><use href="#r2e" x="628" y="593" fill="#000"/><use href="#r31" x="634" y="593" fill="#000"/><use href="#r36" x="640" y="593" fill="#000"/><use href="#r38" x="646" y="593" fill="#000"/><use href="#r2e" x="652" y="593" fill="#000"/><use href="#r31" x="658" y="593" fill="#000"/><use href="#r2e" x="664" y="593" fill="#000"/><use href="#r31" x="670" y="593" fill="#000"/><use href="#r29" x="676" y="593" fill="#000"/><use href="#r31" x="698" y="593" fill="#000"/><use href="#r39" x="704" y="593" fill="#000"/><use href="#r32" x="710" y="593" fill="#000"/><use href="#r2e" x="716" y="593" fill="#000"/><use href="#r31" x="722" y="593" fill="#000"/><use href="#r36" x="728" y="593" fill="#000"/><use href="#r38" x="734" y="593" fill="#000"/><use href="#r2e" x="740" y="593" fill="#000"/><use href="#r31" x="746" y="593" fill="#000"/><use href="#r2e" x="752" y="593" fill="#000"/><use href="#r31" x="758" y="593" fill="#000"/><use href="#r30" x="838" y="593" fill="#000"/><use href="#r38" x="844" y="593" fill="#000"/><use href="#r3a" x="850" y="593" fill="#000"/><use href="#r31" x="856" y="593" fill="#000"/><use href="#r30" x="862" y="593" fill="#000"/><use href="#r3a" x="868" y="593" fill="#000"/><use href="#r37" x="874" y="593" fill="#000"/><use href="#r35" x="880" y="593" fill="#000"/><use href="#r3a" x="886" y="593" fill="#000"/><use href="#r30" x="892" y="593" fill="#000"/><use href="#r36" x="898" y="593" fill="#000"/><use href="#r3a" x="904" y="593" fill="#000"/><use href="#r31" x="910" y="593" fill="#000"/><use href="#r31" x="916" y="593" fill="#000"/><use href="#r3a" x="922" y="593" fill="#000"/><use href="#r42" x="928" y="593" fill="#000"/><use href="#r34" x="934" y="593" fill="#000"/><use href="#r31" x="998" y="593" fill="#000"/><use href="#r39" x="1004" y="593" fill="#000"/><use href="#r32" x="1010" y="593" fill="#000"/><use href="#r2e" x="1016" y="593" fill="#000"/><use href="#r31" x="1022" y="593" fill="#000"/><use href="#r36" x="1028" y="593" fill="#000"/><use href="#r38" x="1034" y="593" fill="#000"/><use href="#r2e" x="1040" y="593" fill="#000"/><use href="#r31" x="1046" y="593" fill="#000"/><use href="#r2e" x="1052" y="593" fill="#000"/><use href="#r35" x="1058" y="593" fill="#000"/><use href="#r32" x="1064" y="593" fill="#000"/><use href="#r46" x="1139" y="593" fill="#000"/><use href="#r46" x="1145" y="593" fill="#000"/><use href="#ic_warn" x="28" y="602"/><use href="#r5b89" x="78" y="612" fill="#000"/><use href="#r5168" x="90" y="612" fill="#000"/><use href="#r6570" x="178" y="612" fill="#000"/><use href="#r636e" x="190" y="612" fill="#000"/><use href="#r94fe" x="202" y="612" fill="#000"/><use href="#r8def" x="214" y="612" fill="#000"/><use href="#r5c42" x="226" y="612" fill="#000"/><use href="#r41" x="298" y="612" fill="#000"/><use href="#r52" x="304" y="612" fill="#000"/><use href="#r50" x="310" y="612" fill="#000"/><use href="#r5730" x="316" y="612" fill="#000"/><use href="#r5740" x="328" y="612" fill="#000"/><use href="#r626b" x="340" y="612" fill="#000"/><use href="#r63cf" x="352" y="612" fill="#000"/><use href="#r28" x="364" y="612" fill="#000"/><use href="#r4e3b" x="370" y="612" fill="#000"/><use href="#r673a" x="382" y="612" fill="#000"/><use href="#r7684" x="394" y="612" fill="#000"/><use href="#r4d" x="406" y="612" fill="#000"/><use href="#r41" x="412" y="612" fill="#000"/><use href="#r43" x="418" y="612" fill="#000"/><use href="#r4e3a" x="424" y="612" fill="#000"/><use href="#r30" x="442" y="612" fill="#000"/><use href="#r38" x="448" y="612" fill="#000"/><use href="#r3a" x="454" y="612" fill="#000"/><use href="#r31" x="460" y="612" fill="#000"/><use href="#r30" x="466" y="612" fill="#000"/><use href="#r3a" x="472" y="612" fill="#000"/><use href="#r37" x="478" y="612" fill="#000"/><use href="#r35" x="484" y="612" fill="#000"/><use href="#r3a" x="490" y="612" fill="#000"/><use href="#r30" x="496" y="612" fill="#000"/><use href="#r36" x="502" y="612" fill="#000"/><use href="#r3a" x="508" y="612" fill="#000"/><use href="#r31" x="514" y="612" fill="#000"/><use href="#r31" x="520" y="612" fill="#000"/><use href="#r3a" x="526" y="612" fill="#000"/><use href="#r42" x="532" y="612" fill="#000"/><use href="#r34" x="538" y="612" fill="#000"/><use href="#r2c" x="544" y="612" fill="#000"/><use href="#r49" x="556" y="612" fill="#000"/><use href="#r50" x="562" y="612" fill="#000"/><use href="#r5730" x="568" y="612" fill="#000"/><use href="#r5740" x="580" y="612" fill="#000"/><use href="#r4e3a" x="592" y="612" fill="#000"/><use href="#r31" x="610" y="612" fill="#000"/><use href="#r39" x="616" y="612" fill="#000"/><use href="#r32" x="622" y="612" fill="#000"/><use href="#r2e" x="628" y="612" fill="#000"/><use href="#r31" x="634" y="612" fill="#000"/><use href="#r36" x="640" y="612" fill="#000"/><use href="#r38" x="646" y="612" fill="#000"/><use href="#r2e" x="652" y="612" fill="#000"/><use href="#r31" x="658" y="612" fill="#000"/><use href="#r2e" x="664" y="612" fill="#000"/><use href="#r31" x="670" y="612" fill="#000"/><use href="#r29" x="676" y="612" fill="#000"/><use href="#r31" x="698" y="612" fill="#000"/><use href="#r39" x="704" y="612" fill="#000"/><use href="#r32" x="710" y="612" fill="#000"/><use href="#r2e" x="716" y="612" fill="#000"/><use href="#r31" x="722" y="612" fill="#000"/><use href="#r36" x="728" y="612" fill="#000"/><use href="#r38" x="734" y="612" fill="#000"/><use href="#r2e" x="740" y="612" fill="#000"/><use href="#r31" x="746" y="612" fill="#000"/><use href="#r2e" x="752" y="612" fill="#000"/><use href="#r31" x="758" y="612" fill="#000"/><use href="#r30" x="838" y="612" fill="#000"/><use href="#r38" x="844" y="612" fill="#000"/><use href="#r3a" x="850" y="612" fill="#000"/><use href="#r31" x="856" y="612" fill="#000"/><use href="#r30" x="862" y="612" fill="#000"/><use href="#r3a" x="868" y="612" fill="#000"/><use href="#r37" x="874" y="612" fill="#000"/><use href="#r35" x="880" y="612" fill="#000"/><use href="#r3a" x="886" y="612" fill="#000"/><use href="#r30" x="892" y="612" fill="#000"/><use href="#r36" x="898" y="612" fill="#000"/><use href="#r3a" x="904" y="612" fill="#000"/><use href="#r31" x="910" y="612" fill="#000"/><use href="#r31" x="916" y="612" fill="#000"/><use href="#r3a" x="922" y="612" fill="#000"/><use href="#r42" x="928" y="612" fill="#000"/><use href="#r34" x="934" y="612" fill="#000"/><use href="#r31" x="998" y="612" fill="#000"/><use href="#r39" x="1004" y="612" fill="#000"/><use href="#r32" x="1010" y="612" fill="#000"/><use href="#r2e" x="1016" y="612" fill="#000"/><use href="#r31" x="1022" y="612" fill="#000"/><use href="#r36" x="1028" y="612" fill="#000"/><use href="#r38" x="1034" y="612" fill="#000"/><use href="#r2e" x="1040" y="612" fill="#000"/><use href="#r31" x="1046" y="612" fill="#000"/><use href="#r2e" x="1052" y="612" fill="#000"/><use href="#r37" x="1058" y="612" fill="#000"/><use href="#r34" x="1064" y="612" fill="#000"/><use href="#r46" x="1139" y="612" fill="#000"/><use href="#r46" x="1145" y="612" fill="#000"/><use href="#ic_warn" x="28" y="621"/><use href="#r5b89" x="78" y="631" fill="#000"/><use href="#r5168" x="90" y="631" fill="#000"/><use href="#r6570" x="178" y="631" fill="#000"/><use href="#r636e" x="190" y="631" fill="#000"/><use href="#r94fe" x="202" y="631" fill="#000"/><use href="#r8def" x="214" y="631" fill="#000"/><use href="#r5c42" x="226" y="631" fill="#000"/><use href="#r41" x="298" y="631" fill="#000"/><use href="#r52" x="304" y="631" fill="#000"/><use href="#r50" x="310" y="631" fill="#000"/><use href="#r5730" x="316" y="631" fill="#000"/><use href="#r5740" x="328" y="631" fill="#000"/><use href="#r626b" x="340" y="631" fill="#000"/><use href="#r63cf" x="352" y="631" fill="#000"/><use href="#r28" x="364" y="631" fill="#000"/><use href="#r4e3b" x="370" y="631" fill="#000"/><use href="#r673a" x="382" y="631" fill="#000"/><use href="#r7684" x="394" y="631" fill="#000"/><use href="#r4d" x="406" y="631" fill="#000"/><use href="#r41" x="412" y="631" fill="#000"/><use href="#r43" x="418" y="631" fill="#000"/><use href="#r4e3a" x="424" y="631" fill="#000"/><use href="#r30" x="442" y="631" fill="#000"/><use href="#r38" x="448" y="631" fill="#000"/><use href="#r3a" x="454" y="631" fill="#000"/><use href="#r31" x="460" y="631" fill="#000"/><use href="#r30" x="466" y="631" fill="#000"/><use href="#r3a" x="472" y="631" fill="#000"/><use href="#r37" x="478" y="631" fill="#000"/><use href="#r35" x="484" y="631" fill="#000"/><use href="#r3a" x="490" y="631" fill="#000"/><use href="#r30" x="496" y="631" fill="#000"/><use href="#r36" x="502" y="631" fill="#000"/><use href="#r3a" x="508" y="631" fill="#000"/><use href="#r31" x="514" y="631" fill="#000"/><use href="#r31" x="520" y="631" fill="#000"/><use href="#r3a" x="526" y="631" fill="#000"/><use href="#r42" x="532" y="631" fill="#000"/><use href="#r34" x="538" y="631" fill="#000"/><use href="#r2c" x="544" y="631" fill="#000"/><use href="#r49" x="556" y="631" fill="#000"/><use href="#r50" x="562" y="631" fill="#000"/><use href="#r5730" x="568" y="631" fill="#000"/><use href="#r5740" x="580" y="631" fill="#000"/><use href="#r4e3a" x="592" y="631" fill="#000"/><use href="#r31" x="610" y="631" fill="#000"/><use href="#r39" x="616" y="631" fill="#000"/><use href="#r32" x="622" y="631" fill="#000"/><use href="#r2e" x="628" y="631" fill="#000"/><use href="#r31" x="634" y="631" fill="#000"/><use href="#r36" x="640" y="631" fill="#000"/><use href="#r38" x="646" y="631" fill="#000"/><use href="#r2e" x="652" y="631" fill="#000"/><use href="#r31" x="658" y="631" fill="#000"/><use href="#r2e" x="664" y="631" fill="#000"/><use href="#r31" x="670" y="631" fill="#000"/><use href="#r29" x="676" y="631" fill="#000"/><use href="#r31" x="698" y="631" fill="#000"/><use href="#r39" x="704" y="631" fill="#000"/><use href="#r32" x="710" y="631" fill="#000"/><use href="#r2e" x="716" y="631" fill="#000"/><use href="#r31" x="722" y="631" fill="#000"/><use href="#r36" x="728" y="631" fill="#000"/><use href="#r38" x="734" y="631" fill="#000"/><use href="#r2e" x="740" y="631" fill="#000"/><use href="#r31" x="746" y="631" fill="#000"/><use href="#r2e" x="752" y="631" fill="#000"/><use href="#r31" x="758" y="631" fill="#000"/><use href="#r30" x="838" y="631" fill="#000"/><use href="#r38" x="844" y="631" fill="#000"/><use href="#r3a" x="850" y="631" fill="#000"/><use href="#r31" x="856" y="631" fill="#000"/><use href="#r30" x="862" y="631" fill="#000"/><use href="#r3a" x="868" y="631" fill="#000"/><use href="#r37" x="874" y="631" fill="#000"/><use href="#r35" x="880" y="631" fill="#000"/><use href="#r3a" x="886" y="631" fill="#000"/><use href="#r30" x="892" y="631" fill="#000"/><use href="#r36" x="898" y="631" fill="#000"/><use href="#r3a" x="904" y="631" fill="#000"/><use href="#r31" x="910" y="631" fill="#000"/><use href="#r31" x="916" y="631" fill="#000"/><use href="#r3a" x="922" y="631" fill="#000"/><use href="#r42" x="928" y="631" fill="#000"/><use href="#r34" x="934" y="631" fill="#000"/><use href="#r31" x="998" y="631" fill="#000"/><use href="#r39" x="1004" y="631" fill="#000"/><use href="#r32" x="1010" y="631" fill="#000"/><use href="#r2e" x="1016" y="631" fill="#000"/><use href="#r31" x="1022" y="631" fill="#000"/><use href="#r36" x="1028" y="631" fill="#000"/><use href="#r38" x="1034" y="631" fill="#000"/><use href="#r2e" x="1040" y="631" fill="#000"/><use href="#r31" x="1046" y="631" fill="#000"/><use href="#r2e" x="1052" y="631" fill="#000"/><use href="#r39" x="1058" y="631" fill="#000"/><use href="#r36" x="1064" y="631" fill="#000"/><use href="#r46" x="1139" y="631" fill="#000"/><use href="#r46" x="1145" y="631" fill="#000"/><use href="#ic_warn" x="28" y="640"/><use href="#r5b89" x="78" y="650" fill="#000"/><use href="#r5168" x="90" y="650" fill="#000"/><use href="#r6570" x="178" y="650" fill="#000"/><use href="#r636e" x="190" y="650" fill="#000"/><use href="#r94fe" x="202" y="650" fill="#000"/><use href="#r8def" x="214" y="650" fill="#000"/><use href="#r5c42" x="226" y="650" fill="#000"/><use href="#r41" x="298" y="650" fill="#000"/><use href="#r52" x="304" y="650" fill="#000"/><use href="#r50" x="310" y="650" fill="#000"/><use href="#r5730" x="316" y="650" fill="#000"/><use href="#r5740" x="328" y="650" fill="#000"/><use href="#r626b" x="340" y="650" fill="#000"/><use href="#r63cf" x="352" y="650" fill="#000"/><use href="#r28" x="364" y="650" fill="#000"/><use href="#r4e3b" x="370" y="650" fill="#000"/><use href="#r673a" x="382" y="650" fill="#000"/><use href="#r7684" x="394" y="650" fill="#000"/><use href="#r4d" x="406" y="650" fill="#000"/><use href="#r41" x="412" y="650" fill="#000"/><use href="#r43" x="418" y="650" fill="#000"/><use href="#r4e3a" x="424" y="650" fill="#000"/><use href="#r30" x="442" y="650" fill="#000"/><use href="#r38" x="448" y="650" fill="#000"/><use href="#r3a" x="454" y="650" fill="#000"/><use href="#r31" x="460" y="650" fill="#000"/><use href="#r30" x="466" y="650" fill="#000"/><use href="#r3a" x="472" y="650" fill="#000"/><use href="#r37" x="478" y="650" fill="#000"/><use href="#r35" x="484" y="650" fill="#000"/><use href="#r3a" x="490" y="650" fill="#000"/><use href="#r30" x="496" y="650" fill="#000"/><use href="#r36" x="502" y="650" fill="#000"/><use href="#r3a" x="508" y="650" fill="#000"/><use href="#r31" x="514" y="650" fill="#000"/><use href="#r31" x="520" y="650" fill="#000"/><use href="#r3a" x="526" y="650" fill="#000"/><use href="#r42" x="532" y="650" fill="#000"/><use href="#r34" x="538" y="650" fill="#000"/><use href="#r2c" x="544" y="650" fill="#000"/><use href="#r49" x="556" y="650" fill="#000"/><use href="#r50" x="562" y="650" fill="#000"/><use href="#r5730" x="568" y="650" fill="#000"/><use href="#r5740" x="580" y="650" fill="#000"/><use href="#r4e3a" x="592" y="650" fill="#000"/><use href="#r31" x="610" y="650" fill="#000"/><use href="#r39" x="616" y="650" fill="#000"/><use href="#r32" x="622" y="650" fill="#000"/><use href="#r2e" x="628" y="650" fill="#000"/><use href="#r31" x="634" y="650" fill="#000"/><use href="#r36" x="640" y="650" fill="#000"/><use href="#r38" x="646" y="650" fill="#000"/><use href="#r2e" x="652" y="650" fill="#000"/><use href="#r31" x="658" y="650" fill="#000"/><use href="#r2e" x="664" y="650" fill="#000"/><use href="#r31" x="670" y="650" fill="#000"/><use href="#r29" x="676" y="650" fill="#000"/><use href="#r31" x="698" y="650" fill="#000"/><use href="#r39" x="704" y="650" fill="#000"/><use href="#r32" x="710" y="650" fill="#000"/><use href="#r2e" x="716" y="650" fill="#000"/><use href="#r31" x="722" y="650" fill="#000"/><use href="#r36" x="728" y="650" fill="#000"/><use href="#r38" x="734" y="650" fill="#000"/><use href="#r2e" x="740" y="650" fill="#000"/><use href="#r31" x="746" y="650" fill="#000"/><use href="#r2e" x="752" y="650" fill="#000"/><use href="#r31" x="758" y="650" fill="#000"/><use href="#r30" x="838" y="650" fill="#000"/><use href="#r38" x="844" y="650" fill="#000"/><use href="#r3a" x="850" y="650" fill="#000"/><use href="#r31" x="856" y="650" fill="#000"/><use href="#r30" x="862" y="650" fill="#000"/><use href="#r3a" x="868" y="650" fill="#000"/><use href="#r37" x="874" y="650" fill="#000"/><use href="#r35" x="880" y="650" fill="#000"/><use href="#r3a" x="886" y="650" fill="#000"/><use href="#r30" x="892" y="650" fill="#000"/><use href="#r36" x="898" y="650" fill="#000"/><use href="#r3a" x="904" y="650" fill="#000"/><use href="#r31" x="910" y="650" fill="#000"/><use href="#r31" x="916" y="650" fill="#000"/><use href="#r3a" x="922" y="650" fill="#000"/><use href="#r42" x="928" y="650" fill="#000"/><use href="#r34" x="934" y="650" fill="#000"/><use href="#r31" x="998" y="650" fill="#000"/><use href="#r39" x="1004" y="650" fill="#000"/><use href="#r32" x="1010" y="650" fill="#000"/><use href="#r2e" x="1016" y="650" fill="#000"/><use href="#r31" x="1022" y="650" fill="#000"/><use href="#r36" x="1028" y="650" fill="#000"/><use href="#r38" x="1034" y="650" fill="#000"/><use href="#r2e" x="1040" y="650" fill="#000"/><use href="#r31" x="1046" y="650" fill="#000"/><use href="#r2e" x="1052" y="650" fill="#000"/><use href="#r31" x="1058" y="650" fill="#000"/><use href="#r37" x="1064" y="650" fill="#000"/><use href="#r46" x="1139" y="650" fill="#000"/><use href="#r46" x="1145" y="650" fill="#000"/><use href="#ic_warn" x="28" y="659"/><use href="#r5b89" x="78" y="669" fill="#000"/><use href="#r5168" x="90" y="669" fill="#000"/><use href="#r6570" x="178" y="669" fill="#000"/><use href="#r636e" x="190" y="669" fill="#000"/><use href="#r94fe" x="202" y="669" fill="#000"/><use href="#r8def" x="214" y="669" fill="#000"/><use href="#r5c42" x="226" y="669" fill="#000"/><use href="#r41" x="298" y="669" fill="#000"/><use href="#r52" x="304" y="669" fill="#000"/><use href="#r50" x="310" y="669" fill="#000"/><use href="#r5730" x="316" y="669" fill="#000"/><use href="#r5740" x="328" y="669" fill="#000"/><use href="#r626b" x="340" y="669" fill="#000"/><use href="#r63cf" x="352" y="669" fill="#000"/><use href="#r28" x="364" y="669" fill="#000"/><use href="#r4e3b" x="370" y="669" fill="#000"/><use href="#r673a" x="382" y="669" fill="#000"/><use href="#r7684" x="394" y="669" fill="#000"/><use href="#r4d" x="406" y="669" fill="#000"/><use href="#r41" x="412" y="669" fill="#000"/><use href="#r43" x="418" y="669" fill="#000"/><use href="#r4e3a" x="424" y="669" fill="#000"/><use href="#r30" x="442" y="669" fill="#000"/><use href="#r38" x="448" y="669" fill="#000"/><use href="#r3a" x="454" y="669" fill="#000"/><use href="#r31" x="460" y="669" fill="#000"/><use href="#r30" x="466" y="669" fill="#000"/><use href="#r3a" x="472" y="669" fill="#000"/><use href="#r37" x="478" y="669" fill="#000"/><use href="#r35" x="484" y="669" fill="#000"/><use href="#r3a" x="490" y="669" fill="#000"/><use href="#r30" x="496" y="669" fill="#000"/><use href="#r36" x="502" y="669" fill="#000"/><use href="#r3a" x="508" y="669" fill="#000"/><use href="#r31" x="514" y="669" fill="#000"/><use href="#r31" x="520" y="669" fill="#000"/><use href="#r3a" x="526" y="669" fill="#000"/><use href="#r42" x="532" y="669" fill="#000"/><use href="#r34" x="538" y="669" fill="#000"/><use href="#r2c" x="544" y="669" fill="#000"/><use href="#r49" x="556" y="669" fill="#000"/><use href="#r50" x="562" y="669" fill="#000"/><use href="#r5730" x="568" y="669" fill="#000"/><use href="#r5740" x="580" y="669" fill="#000"/><use href="#r4e3a" x="592" y="669" fill="#000"/><use href="#r31" x="610" y="669" fill="#000"/><use href="#r39" x="616" y="669" fill="#000"/><use href="#r32" x="622" y="669" fill="#000"/><use href="#r2e" x="628" y="669" fill="#000"/><use href="#r31" x="634" y="669" fill="#000"/><use href="#r36" x="640" y="669" fill="#000"/><use href="#r38" x="646" y="669" fill="#000"/><use href="#r2e" x="652" y="669" fill="#000"/><use href="#r31" x="658" y="669" fill="#000"/><use href="#r2e" x="664" y="669" fill="#000"/><use href="#r31" x="670" y="669" fill="#000"/><use href="#r29" x="676" y="669" fill="#000"/><use href="#r31" x="698" y="669" fill="#000"/><use href="#r39" x="704" y="669" fill="#000"/><use href="#r32" x="710" y="669" fill="#000"/><use href="#r2e" x="716" y="669" fill="#000"/><use href="#r31" x="722" y="669" fill="#000"/><use href="#r36" x="728" y="669" fill="#000"/><use href="#r38" x="734" y="669" fill="#000"/><use href="#r2e" x="740" y="669" fill="#000"/><use href="#r31" x="746" y="669" fill="#000"/><use href="#r2e" x="752" y="669" fill="#000"/><use href="#r31" x="758" y="669" fill="#000"/><use href="#r30" x="838" y="669" fill="#000"/><use href="#r38" x="844" y="669" fill="#000"/><use href="#r3a" x="850" y="669" fill="#000"/><use href="#r31" x="856" y="669" fill="#000"/><use href="#r30" x="862" y="669" fill="#000"/><use href="#r3a" x="868" y="669" fill="#000"/><use href="#r37" x="874" y="669" fill="#000"/><use href="#r35" x="880" y="669" fill="#000"/><use href="#r3a" x="886" y="669" fill="#000"/><use href="#r30" x="892" y="669" fill="#000"/><use href="#r36" x="898" y="669" fill="#000"/><use href="#r3a" x="904" y="669" fill="#000"/><use href="#r31" x="910" y="669" fill="#000"/><use href="#r31" x="916" y="669" fill="#000"/><use href="#r3a" x="922" y="669" fill="#000"/><use href="#r42" x="928" y="669" fill="#000"/><use href="#r34" x="934" y="669" fill="#000"/><use href="#r31" x="998" y="669" fill="#000"/><use href="#r39" x="1004" y="669" fill="#000"/><use href="#r32" x="1010" y="669" fill="#000"/><use href="#r2e" x="1016" y="669" fill="#000"/><use href="#r31" x="1022" y="669" fill="#000"/><use href="#r36" x="1028" y="669" fill="#000"/><use href="#r38" x="1034" y="669" fill="#000"/><use href="#r2e" x="1040" y="669" fill="#000"/><use href="#r31" x="1046" y="669" fill="#000"/><use href="#r2e" x="1052" y="669" fill="#000"/><use href="#r33" x="1058" y="669" fill="#000"/><use href="#r39" x="1064" y="669" fill="#000"/><use href="#r46" x="1139" y="669" fill="#000"/><use href="#r46" x="1145" y="669" fill="#000"/><use href="#ic_warn" x="28" y="678"/><use href="#r5b89" x="78" y="688" fill="#000"/><use href="#r5168" x="90" y="688" fill="#000"/><use href="#r6570" x="178" y="688" fill="#000"/><use href="#r636e" x="190" y="688" fill="#000"/><use href="#r94fe" x="202" y="688" fill="#000"/><use href="#r8def" x="214" y="688" fill="#000"/><use href="#r5c42" x="226" y="688" fill="#000"/><use href="#r41" x="298" y="688" fill="#000"/><use href="#r52" x="304" y="688" fill="#000"/><use href="#r50" x="310" y="688" fill="#000"/><use href="#r5730" x="316" y="688" fill="#000"/><use href="#r5740" x="328" y="688" fill="#000"/><use href="#r626b" x="340" y="688" fill="#000"/><use href="#r63cf" x="352" y="688" fill="#000"/><use href="#r28" x="364" y="688" fill="#000"/><use href="#r4e3b" x="370" y="688" fill="#000"/><use href="#r673a" x="382" y="688" fill="#000"/><use href="#r7684" x="394" y="688" fill="#000"/><use href="#r4d" x="406" y="688" fill="#000"/><use href="#r41" x="412" y="688" fill="#000"/><use href="#r43" x="418" y="688" fill="#000"/><use href="#r4e3a" x="424" y="688" fill="#000"/><use href="#r30" x="442" y="688" fill="#000"/><use href="#r38" x="448" y="688" fill="#000"/><use href="#r3a" x="454" y="688" fill="#000"/><use href="#r31" x="460" y="688" fill="#000"/><use href="#r30" x="466" y="688" fill="#000"/><use href="#r3a" x="472" y="688" fill="#000"/><use href="#r37" x="478" y="688" fill="#000"/><use href="#r35" x="484" y="688" fill="#000"/><use href="#r3a" x="490" y="688" fill="#000"/><use href="#r30" x="496" y="688" fill="#000"/><use href="#r36" x="502" y="688" fill="#000"/><use href="#r3a" x="508" y="688" fill="#000"/><use href="#r31" x="514" y="688" fill="#000"/><use href="#r31" x="520" y="688" fill="#000"/><use href="#r3a" x="526" y="688" fill="#000"/><use href="#r42" x="532" y="688" fill="#000"/><use href="#r34" x="538" y="688" fill="#000"/><use href="#r2c" x="544" y="688" fill="#000"/><use href="#r49" x="556" y="688" fill="#000"/><use href="#r50" x="562" y="688" fill="#000"/><use href="#r5730" x="568" y="688" fill="#000"/><use href="#r5740" x="580" y="688" fill="#000"/><use href="#r4e3a" x="592" y="688" fill="#000"/><use href="#r31" x="610" y="688" fill="#000"/><use href="#r39" x="616" y="688" fill="#000"/><use href="#r32" x="622" y="688" fill="#000"/><use href="#r2e" x="628" y="688" fill="#000"/><use href="#r31" x="634" y="688" fill="#000"/><use href="#r36" x="640" y="688" fill="#000"/><use href="#r38" x="646" y="688" fill="#000"/><use href="#r2e" x="652" y="688" fill="#000"/><use href="#r31" x="658" y="688" fill="#000"/><use href="#r2e" x="664" y="688" fill="#000"/><use href="#r31" x="670" y="688" fill="#000"/><use href="#r29" x="676" y="688" fill="#000"/><use href="#r31" x="698" y="688" fill="#000"/><use href="#r39" x="704" y="688" fill="#000"/><use href="#r32" x="710" y="688" fill="#000"/><use href="#r2e" x="716" y="688" fill="#000"/><use href="#r31" x="722" y="688" fill="#000"/><use href="#r36" x="728" y="688" fill="#000"/><use href="#r38" x="734" y="688" fill="#000"/><use href="#r2e" x="740" y="688" fill="#000"/><use href="#r31" x="746" y="688" fill="#000"/><use href="#r2e" x="752" y="688" fill="#000"/><use href="#r31" x="758" y="688" fill="#000"/><use href="#r30" x="838" y="688" fill="#000"/><use href="#r38" x="844" y="688" fill="#000"/><use href="#r3a" x="850" y="688" fill="#000"/><use href="#r31" x="856" y="688" fill="#000"/><use href="#r30" x="862" y="688" fill="#000"/><use href="#r3a" x="868" y="688" fill="#000"/><use href="#r37" x="874" y="688" fill="#000"/><use href="#r35" x="880" y="688" fill="#000"/><use href="#r3a" x="886" y="688" fill="#000"/><use href="#r30" x="892" y="688" fill="#000"/><use href="#r36" x="898" y="688" fill="#000"/><use href="#r3a" x="904" y="688" fill="#000"/><use href="#r31" x="910" y="688" fill="#000"/><use href="#r31" x="916" y="688" fill="#000"/><use href="#r3a" x="922" y="688" fill="#000"/><use href="#r42" x="928" y="688" fill="#000"/><use href="#r34" x="934" y="688" fill="#000"/><use href="#r31" x="998" y="688" fill="#000"/><use href="#r39" x="1004" y="688" fill="#000"/><use href="#r32" x="1010" y="688" fill="#000"/><use href="#r2e" x="1016" y="688" fill="#000"/><use href="#r31" x="1022" y="688" fill="#000"/><use href="#r36" x="1028" y="688" fill="#000"/><use href="#r38" x="1034" y="688" fill="#000"/><use href="#r2e" x="1040" y="688" fill="#000"/><use href="#r31" x="1046" y="688" fill="#000"/><use href="#r2e" x="1052" y="688" fill="#000"/><use href="#r36" x="1058" y="688" fill="#000"/><use href="#r31" x="1064" y="688" fill="#000"/><use href="#r46" x="1139" y="688" fill="#000"/><use href="#r46" x="1145" y="688" fill="#000"/><use href="#ic_warn" x="28" y="697"/><use href="#r5b89" x="78" y="707" fill="#000"/><use href="#r5168" x="90" y="707" fill="#000"/><use href="#r6570" x="178" y="707" fill="#000"/><use href="#r636e" x="190" y="707" fill="#000"/><use href="#r94fe" x="202" y="707" fill="#000"/><use href="#r8def" x="214" y="707" fill="#000"/><use href="#r5c42" x="226" y="707" fill="#000"/><use href="#r41" x="298" y="707" fill="#000"/><use href="#r52" x="304" y="707" fill="#000"/><use href="#r50" x="310" y="707" fill="#000"/><use href="#r5730" x="316" y="707" fill="#000"/><use href="#r5740" x="328" y="707" fill="#000"/><use href="#r626b" x="340" y="707" fill="#000"/><use href="#r63cf" x="352" y="707" fill="#000"/><use href="#r28" x="364" y="707" fill="#000"/><use href="#r4e3b" x="370" y="707" fill="#000"/><use href="#r673a" x="382" y="707" fill="#000"/><use href="#r7684" x="394" y="707" fill="#000"/><use href="#r4d" x="406" y="707" fill="#000"/><use href="#r41" x="412" y="707" fill="#000"/><use href="#r43" x="418" y="707" fill="#000"/><use href="#r4e3a" x="424" y="707" fill="#000"/><use href="#r30" x="442" y="707" fill="#000"/><use href="#r38" x="448" y="707" fill="#000"/><use href="#r3a" x="454" y="707" fill="#000"/><use href="#r31" x="460" y="707" fill="#000"/><use href="#r30" x="466" y="707" fill="#000"/><use href="#r3a" x="472" y="707" fill="#000"/><use href="#r37" x="478" y="707" fill="#000"/><use href="#r35" x="484" y="707" fill="#000"/><use href="#r3a" x="490" y="707" fill="#000"/><use href="#r30" x="496" y="707" fill="#000"/><use href="#r36" x="502" y="707" fill="#000"/><use href="#r3a" x="508" y="707" fill="#000"/><use href="#r31" x="514" y="707" fill="#000"/><use href="#r31" x="520" y="707" fill="#000"/><use href="#r3a" x="526" y="707" fill="#000"/><use href="#r42" x="532" y="707" fill="#000"/><use href="#r34" x="538" y="707" fill="#000"/><use href="#r2c" x="544" y="707" fill="#000"/><use href="#r49" x="556" y="707" fill="#000"/><use href="#r50" x="562" y="707" fill="#000"/><use href="#r5730" x="568" y="707" fill="#000"/><use href="#r5740" x="580" y="707" fill="#000"/><use href="#r4e3a" x="592" y="707" fill="#000"/><use href="#r31" x="610" y="707" fill="#000"/><use href="#r39" x="616" y="707" fill="#000"/><use href="#r32" x="622" y="707" fill="#000"/><use href="#r2e" x="628" y="707" fill="#000"/><use href="#r31" x="634" y="707" fill="#000"/><use href="#r36" x="640" y="707" fill="#000"/><use href="#r38" x="646" y="707" fill="#000"/><use href="#r2e" x="652" y="707" fill="#000"/><use href="#r31" x="658" y="707" fill="#000"/><use href="#r2e" x="664" y="707" fill="#000"/><use href="#r31" x="670" y="707" fill="#000"/><use href="#r29" x="676" y="707" fill="#000"/><use href="#r31" x="698" y="707" fill="#000"/><use href="#r39" x="704" y="707" fill="#000"/><use href="#r32" x="710" y="707" fill="#000"/><use href="#r2e" x="716" y="707" fill="#000"/><use href="#r31" x="722" y="707" fill="#000"/><use href="#r36" x="728" y="707" fill="#000"/><use href="#r38" x="734" y="707" fill="#000"/><use href="#r2e" x="740" y="707" fill="#000"/><use href="#r31" x="746" y="707" fill="#000"/><use href="#r2e" x="752" y="707" fill="#000"/><use href="#r31" x="758" y="707" fill="#000"/><use href="#r30" x="838" y="707" fill="#000"/><use href="#r38" x="844" y="707" fill="#000"/><use href="#r3a" x="850" y="707" fill="#000"/><use href="#r31" x="856" y="707" fill="#000"/><use href="#r30" x="862" y="707" fill="#000"/><use href="#r3a" x="868" y="707" fill="#000"/><use href="#r37" x="874" y="707" fill="#000"/><use href="#r35" x="880" y="707" fill="#000"/><use href="#r3a" x="886" y="707" fill="#000"/><use href="#r30" x="892" y="707" fill="#000"/><use href="#r36" x="898" y="707" fill="#000"/><use href="#r3a" x="904" y="707" fill="#000"/><use href="#r31" x="910" y="707" fill="#000"/><use href="#r31" x="916" y="707" fill="#000"/><use href="#r3a" x="922" y="707" fill="#000"/><use href="#r42" x="928" y="707" fill="#000"/><use href="#r34" x="934" y="707" fill="#000"/><use href="#r31" x="998" y="707" fill="#000"/><use href="#r39" x="1004" y="707" fill="#000"/><use href="#r32" x="1010" y="707" fill="#000"/><use href="#r2e" x="1016" y="707" fill="#000"/><use href="#r31" x="1022" y="707" fill="#000"/><use href="#r36" x="1028" y="707" fill="#000"/><use href="#r38" x="1034" y="707" fill="#000"/><use href="#r2e" x="1040" y="707" fill="#000"/><use href="#r31" x="1046" y="707" fill="#000"/><use href="#r2e" x="1052" y="707" fill="#000"/><use href="#r38" x="1058" y="707" fill="#000"/><use href="#r33" x="1064" y="707" fill="#000"/><use href="#r46" x="1139" y="707" fill="#000"/><use href="#r46" x="1145" y="707" fill="#000"/><use href="#ic_warn" x="28" y="716"/><use href="#r5b89" x="78" y="726" fill="#000"/><use href="#r5168" x="90" y="726" fill="#000"/><use href="#r6570" x="178" y="726" fill="#000"/><use href="#r636e" x="190" y="726" fill="#000"/><use href="#r94fe" x="202" y="726" fill="#000"/><use href="#r8def" x="214" y="726" fill="#000"/><use href="#r5c42" x="226" y="726" fill="#000"/><use href="#r41" x="298" y="726" fill="#000"/><use href="#r52" x="304" y="726" fill="#000"/><use href="#r50" x="310" y="726" fill="#000"/><use href="#r5730" x="316" y="726" fill="#000"/><use href="#r5740" x="328" y="726" fill="#000"/><use href="#r626b" x="340" y="726" fill="#000"/><use href="#r63cf" x="352" y="726" fill="#000"/><use href="#r28" x="364" y="726" fill="#000"/><use href="#r4e3b" x="370" y="726" fill="#000"/><use href="#r673a" x="382" y="726" fill="#000"/><use href="#r7684" x="394" y="726" fill="#000"/><use href="#r4d" x="406" y="726" fill="#000"/><use href="#r41" x="412" y="726" fill="#000"/><use href="#r43" x="418" y="726" fill="#000"/><use href="#r4e3a" x="424" y="726" fill="#000"/><use href="#r30" x="442" y="726" fill="#000"/><use href="#r38" x="448" y="726" fill="#000"/><use href="#r3a" x="454" y="726" fill="#000"/><use href="#r31" x="460" y="726" fill="#000"/><use href="#r30" x="466" y="726" fill="#000"/><use href="#r3a" x="472" y="726" fill="#000"/><use href="#r37" x="478" y="726" fill="#000"/><use href="#r35" x="484" y="726" fill="#000"/><use href="#r3a" x="490" y="726" fill="#000"/><use href="#r30" x="496" y="726" fill="#000"/><use href="#r36" x="502" y="726" fill="#000"/><use href="#r3a" x="508" y="726" fill="#000"/><use href="#r31" x="514" y="726" fill="#000"/><use href="#r31" x="520" y="726" fill="#000"/><use href="#r3a" x="526" y="726" fill="#000"/><use href="#r42" x="532" y="726" fill="#000"/><use href="#r34" x="538" y="726" fill="#000"/><use href="#r2c" x="544" y="726" fill="#000"/><use href="#r49" x="556" y="726" fill="#000"/><use href="#r50" x="562" y="726" fill="#000"/><use href="#r5730" x="568" y="726" fill="#000"/><use href="#r5740" x="580" y="726" fill="#000"/><use href="#r4e3a" x="592" y="726" fill="#000"/><use href="#r31" x="610" y="726" fill="#000"/><use href="#r39" x="616" y="726" fill="#000"/><use href="#r32" x="622" y="726" fill="#000"/><use href="#r2e" x="628" y="726" fill="#000"/><use href="#r31" x="634" y="726" fill="#000"/><use href="#r36" x="640" y="726" fill="#000"/><use href="#r38" x="646" y="726" fill="#000"/><use href="#r2e" x="652" y="726" fill="#000"/><use href="#r31" x="658" y="726" fill="#000"/><use href="#r2e" x="664" y="726" fill="#000"/><use href="#r31" x="670" y="726" fill="#000"/><use href="#r29" x="676" y="726" fill="#000"/><use href="#r31" x="698" y="726" fill="#000"/><use href="#r39" x="704" y="726" fill="#000"/><use href="#r32" x="710" y="726" fill="#000"/><use href="#r2e" x="716" y="726" fill="#000"/><use href="#r31" x="722" y="726" fill="#000"/><use href="#r36" x="728" y="726" fill="#000"/><use href="#r38" x="734" y="726" fill="#000"/><use href="#r2e" x="740" y="726" fill="#000"/><use href="#r31" x="746" y="726" fill="#000"/><use href="#r2e" x="752" y="726" fill="#000"/><use href="#r31" x="758" y="726" fill="#000"/><use href="#r30" x="838" y="726" fill="#000"/><use href="#r38" x="844" y="726" fill="#000"/><use href="#r3a" x="850" y="726" fill="#000"/><use href="#r31" x="856" y="726" fill="#000"/><use href="#r30" x="862" y="726" fill="#000"/><use href="#r3a" x="868" y="726" fill="#000"/><use href="#r37" x="874" y="726" fill="#000"/><use href="#r35" x="880" y="726" fill="#000"/><use href="#r3a" x="886" y="726" fill="#000"/><use href="#r30" x="892" y="726" fill="#000"/><use href="#r36" x="898" y="726" fill="#000"/><use href="#r3a" x="904" y="726" fill="#000"/><use href="#r31" x="910" y="726" fill="#000"/><use href="#r31" x="916" y="726" fill="#000"/><use href="#r3a" x="922" y="726" fill="#000"/><use href="#r42" x="928" y="726" fill="#000"/><use href="#r34" x="934" y="726" fill="#000"/><use href="#r31" x="998" y="726" fill="#000"/><use href="#r39" x="1004" y="726" fill="#000"/><use href="#r32" x="1010" y="726" fill="#000"/><use href="#r2e" x="1016" y="726" fill="#000"/><use href="#r31" x="1022" y="726" fill="#000"/><use href="#r36" x="1028" y="726" fill="#000"/><use href="#r38" x="1034" y="726" fill="#000"/><use href="#r2e" x="1040" y="726" fill="#000"/><use href="#r31" x="1046" y="726" fill="#000"/><use href="#r2e" x="1052" y="726" fill="#000"/><use href="#r34" x="1058" y="726" fill="#000"/><use href="#r46" x="1139" y="726" fill="#000"/><use href="#r46" x="1145" y="726" fill="#000"/><use href="#ic_warn" x="28" y="735"/><use href="#r5b89" x="78" y="745" fill="#000"/><use href="#r5168" x="90" y="745" fill="#000"/><use href="#r6570" x="178" y="745" fill="#000"/><use href="#r636e" x="190" y="745" fill="#000"/><use href="#r94fe" x="202" y="745" fill="#000"/><use href="#r8def" x="214" y="745" fill="#000"/><use href="#r5c42" x="226" y="745" fill="#000"/><use href="#r41" x="298" y="745" fill="#000"/><use href="#r52" x="304" y="745" fill="#000"/><use href="#r50" x="310" y="745" fill="#000"/><use href="#r5730" x="316" y="745" fill="#000"/><use href="#r5740" x="328" y="745" fill="#000"/><use href="#r626b" x="340" y="745" fill="#000"/><use href="#r63cf" x="352" y="745" fill="#000"/><use href="#r28" x="364" y="745" fill="#000"/><use href="#r4e3b" x="370" y="745" fill="#000"/><use href="#r673a" x="382" y="745" fill="#000"/><use href="#r7684" x="394" y="745" fill="#000"/><use href="#r4d" x="406" y="745" fill="#000"/><use href="#r41" x="412" y="745" fill="#000"/><use href="#r43" x="418" y="745" fill="#000"/><use href="#r4e3a" x="424" y="745" fill="#000"/><use href="#r30" x="442" y="745" fill="#000"/><use href="#r38" x="448" y="745" fill="#000"/><use href="#r3a" x="454" y="745" fill="#000"/><use href="#r31" x="460" y="745" fill="#000"/><use href="#r30" x="466" y="745" fill="#000"/><use href="#r3a" x="472" y="745" fill="#000"/><use href="#r37" x="478" y="745" fill="#000"/><use href="#r35" x="484" y="745" fill="#000"/><use href="#r3a" x="490" y="745" fill="#000"/><use href="#r30" x="496" y="745" fill="#000"/><use href="#r36" x="502" y="745" fill="#000"/><use href="#r3a" x="508" y="745" fill="#000"/><use href="#r31" x="514" y="745" fill="#000"/><use href="#r31" x="520" y="745" fill="#000"/><use href="#r3a" x="526" y="745" fill="#000"/><use href="#r42" x="532" y="745" fill="#000"/><use href="#r34" x="538" y="745" fill="#000"/><use href="#r2c" x="544" y="745" fill="#000"/><use href="#r49" x="556" y="745" fill="#000"/><use href="#r50" x="562" y="745" fill="#000"/><use href="#r5730" x="568" y="745" fill="#000"/><use href="#r5740" x="580" y="745" fill="#000"/><use href="#r4e3a" x="592" y="745" fill="#000"/><use href="#r31" x="610" y="745" fill="#000"/><use href="#r39" x="616" y="745" fill="#000"/><use href="#r32" x="622" y="745" fill="#000"/><use href="#r2e" x="628" y="745" fill="#000"/><use href="#r31" x="634" y="745" fill="#000"/><use href="#r36" x="640" y="745" fill="#000"/><use href="#r38" x="646" y="745" fill="#000"/><use href="#r2e" x="652" y="745" fill="#000"/><use href="#r31" x="658" y="745" fill="#000"/><use href="#r2e" x="664" y="745" fill="#000"/><use href="#r31" x="670" y="745" fill="#000"/><use href="#r29" x="676" y="745" fill="#000"/><use href="#r31" x="698" y="745" fill="#000"/><use href="#r39" x="704" y="745" fill="#000"/><use href="#r32" x="710" y="745" fill="#000"/><use href="#r2e" x="716" y="745" fill="#000"/><use href="#r31" x="722" y="745" fill="#000"/><use href="#r36" x="728" y="745" fill="#000"/><use href="#r38" x="734" y="745" fill="#000"/><use href="#r2e" x="740" y="745" fill="#000"/><use href="#r31" x="746" y="745" fill="#000"/><use href="#r2e" x="752" y="745" fill="#000"/><use href="#r31" x="758" y="745" fill="#000"/><use href="#r30" x="838" y="745" fill="#000"/><use href="#r38" x="844" y="745" fill="#000"/><use href="#r3a" x="850" y="745" fill="#000"/><use href="#r31" x="856" y="745" fill="#000"/><use href="#r30" x="862" y="745" fill="#000"/><use href="#r3a" x="868" y="745" fill="#000"/><use href="#r37" x="874" y="745" fill="#000"/><use href="#r35" x="880" y="745" fill="#000"/><use href="#r3a" x="886" y="745" fill="#000"/><use href="#r30" x="892" y="745" fill="#000"/><use href="#r36" x="898" y="745" fill="#000"/><use href="#r3a" x="904" y="745" fill="#000"/><use href="#r31" x="910" y="745" fill="#000"/><use href="#r31" x="916" y="745" fill="#000"/><use href="#r3a" x="922" y="745" fill="#000"/><use href="#r42" x="928" y="745" fill="#000"/><use href="#r34" x="934" y="745" fill="#000"/><use href="#r31" x="998" y="745" fill="#000"/><use href="#r39" x="1004" y="745" fill="#000"/><use href="#r32" x="1010" y="745" fill="#000"/><use href="#r2e" x="1016" y="745" fill="#000"/><use href="#r31" x="1022" y="745" fill="#000"/><use href="#r36" x="1028" y="745" fill="#000"/><use href="#r38" x="1034" y="745" fill="#000"/><use href="#r2e" x="1040" y="745" fill="#000"/><use href="#r31" x="1046" y="745" fill="#000"/><use href="#r2e" x="1052" y="745" fill="#000"/><use href="#r32" x="1058" y="745" fill="#000"/><use href="#r36" x="1064" y="745" fill="#000"/><use href="#r46" x="1139" y="745" fill="#000"/><use href="#r46" x="1145" y="745" fill="#000"/><use href="#ic_warn" x="28" y="754"/><use href="#r5b89" x="78" y="764" fill="#000"/><use href="#r5168" x="90" y="764" fill="#000"/><use href="#r6570" x="178" y="764" fill="#000"/><use href="#r636e" x="190" y="764" fill="#000"/><use href="#r94fe" x="202" y="764" fill="#000"/><use href="#r8def" x="214" y="764" fill="#000"/><use href="#r5c42" x="226" y="764" fill="#000"/><use href="#r41" x="298" y="764" fill="#000"/><use href="#r52" x="304" y="764" fill="#000"/><use href="#r50" x="310" y="764" fill="#000"/><use href="#r5730" x="316" y="764" fill="#000"/><use href="#r5740" x="328" y="764" fill="#000"/><use href="#r626b" x="340" y="764" fill="#000"/><use href="#r63cf" x="352" y="764" fill="#000"/><use href="#r28" x="364" y="764" fill="#000"/><use href="#r4e3b" x="370" y="764" fill="#000"/><use href="#r673a" x="382" y="764" fill="#000"/><use href="#r7684" x="394" y="764" fill="#000"/><use href="#r4d" x="406" y="764" fill="#000"/><use href="#r41" x="412" y="764" fill="#000"/><use href="#r43" x="418" y="764" fill="#000"/><use href="#r4e3a" x="424" y="764" fill="#000"/><use href="#r30" x="442" y="764" fill="#000"/><use href="#r38" x="448" y="764" fill="#000"/><use href="#r3a" x="454" y="764" fill="#000"/><use href="#r31" x="460" y="764" fill="#000"/><use href="#r30" x="466" y="764" fill="#000"/><use href="#r3a" x="472" y="764" fill="#000"/><use href="#r37" x="478" y="764" fill="#000"/><use href="#r35" x="484" y="764" fill="#000"/><use href="#r3a" x="490" y="764" fill="#000"/><use href="#r30" x="496" y="764" fill="#000"/><use href="#r36" x="502" y="764" fill="#000"/><use href="#r3a" x="508" y="764" fill="#000"/><use href="#r31" x="514" y="764" fill="#000"/><use href="#r31" x="520" y="764" fill="#000"/><use href="#r3a" x="526" y="764" fill="#000"/><use href="#r42" x="532" y="764" fill="#000"/><use href="#r34" x="538" y="764" fill="#000"/><use href="#r2c" x="544" y="764" fill="#000"/><use href="#r49" x="556" y="764" fill="#000"/><use href="#r50" x="562" y="764" fill="#000"/><use href="#r5730" x="568" y="764" fill="#000"/><use href="#r5740" x="580" y="764" fill="#000"/><use href="#r4e3a" x="592" y="764" fill="#000"/><use href="#r31" x="610" y="764" fill="#000"/><use href="#r39" x="616" y="764" fill="#000"/><use href="#r32" x="622" y="764" fill="#000"/><use href="#r2e" x="628" y="764" fill="#000"/><use href="#r31" x="634" y="764" fill="#000"/><use href="#r36" x="640" y="764" fill="#000"/><use href="#r38" x="646" y="764" fill="#000"/><use href="#r2e" x="652" y="764" fill="#000"/><use href="#r31" x="658" y="764" fill="#000"/><use href="#r2e" x="664" y="764" fill="#000"/><use href="#r31" x="670" y="764" fill="#000"/><use href="#r29" x="676" y="764" fill="#000"/><use href="#r31" x="698" y="764" fill="#000"/><use href="#r39" x="704" y="764" fill="#000"/><use href="#r32" x="710" y="764" fill="#000"/><use href="#r2e" x="716" y="764" fill="#000"/><use href="#r31" x="722" y="764" fill="#000"/><use href="#r36" x="728" y="764" fill="#000"/><use href="#r38" x="734" y="764" fill="#000"/><use href="#r2e" x="740" y="764" fill="#000"/><use href="#r31" x="746" y="764" fill="#000"/><use href="#r2e" x="752" y="764" fill="#000"/><use href="#r31" x="758" y="764" fill="#000"/><use href="#r30" x="838" y="764" fill="#000"/><use href="#r38" x="844" y="764" fill="#000"/><use href="#r3a" x="850" y="764" fill="#000"/><use href="#r31" x="856" y="764" fill="#000"/><use href="#r30" x="862" y="764" fill="#000"/><use href="#r3a" x="868" y="764" fill="#000"/><use href="#r37" x="874" y="764" fill="#000"/><use href="#r35" x="880" y="764" fill="#000"/><use href="#r3a" x="886" y="764" fill="#000"/><use href="#r30" x="892" y="764" fill="#000"/><use href="#r36" x="898" y="764" fill="#000"/><use href="#r3a" x="904" y="764" fill="#000"/><use href="#r31" x="910" y="764" fill="#000"/><use href="#r31" x="916" y="764" fill="#000"/><use href="#r3a" x="922" y="764" fill="#000"/><use href="#r42" x="928" y="764" fill="#000"/><use href="#r34" x="934" y="764" fill="#000"/><use href="#r31" x="998" y="764" fill="#000"/><use href="#r39" x="1004" y="764" fill="#000"/><use href="#r32" x="1010" y="764" fill="#000"/><use href="#r2e" x="1016" y="764" fill="#000"/><use href="#r31" x="1022" y="764" fill="#000"/><use href="#r36" x="1028" y="764" fill="#000"/><use href="#r38" x="1034" y="764" fill="#000"/><use href="#r2e" x="1040" y="764" fill="#000"/><use href="#r31" x="1046" y="764" fill="#000"/><use href="#r2e" x="1052" y="764" fill="#000"/><use href="#r34" x="1058" y="764" fill="#000"/><use href="#r38" x="1064" y="764" fill="#000"/><use href="#r46" x="1139" y="764" fill="#000"/><use href="#r46" x="1145" y="764" fill="#000"/><use href="#ic_warn" x="28" y="773"/><use href="#r5b89" x="78" y="783" fill="#000"/><use href="#r5168" x="90" y="783" fill="#000"/><use href="#r6570" x="178" y="783" fill="#000"/><use href="#r636e" x="190" y="783" fill="#000"/><use href="#r94fe" x="202" y="783" fill="#000"/><use href="#r8def" x="214" y="783" fill="#000"/><use href="#r5c42" x="226" y="783" fill="#000"/><use href="#r41" x="298" y="783" fill="#000"/><use href="#r52" x="304" y="783" fill="#000"/><use href="#r50" x="310" y="783" fill="#000"/><use href="#r5730" x="316" y="783" fill="#000"/><use href="#r5740" x="328" y="783" fill="#000"/><use href="#r626b" x="340" y="783" fill="#000"/><use href="#r63cf" x="352" y="783" fill="#000"/><use href="#r28" x="364" y="783" fill="#000"/><use href="#r4e3b" x="370" y="783" fill="#000"/><use href="#r673a" x="382" y="783" fill="#000"/><use href="#r7684" x="394" y="783" fill="#000"/><use href="#r4d" x="406" y="783" fill="#000"/><use href="#r41" x="412" y="783" fill="#000"/><use href="#r43" x="418" y="783" fill="#000"/><use href="#r4e3a" x="424" y="783" fill="#000"/><use href="#r30" x="442" y="783" fill="#000"/><use href="#r38" x="448" y="783" fill="#000"/><use href="#r3a" x="454" y="783" fill="#000"/><use href="#r31" x="460" y="783" fill="#000"/><use href="#r30" x="466" y="783" fill="#000"/><use href="#r3a" x="472" y="783" fill="#000"/><use href="#r37" x="478" y="783" fill="#000"/><use href="#r35" x="484" y="783" fill="#000"/><use href="#r3a" x="490" y="783" fill="#000"/><use href="#r30" x="496" y="783" fill="#000"/><use href="#r36" x="502" y="783" fill="#000"/><use href="#r3a" x="508" y="783" fill="#000"/><use href="#r31" x="514" y="783" fill="#000"/><use href="#r31" x="520" y="783" fill="#000"/><use href="#r3a" x="526" y="783" fill="#000"/><use href="#r42" x="532" y="783" fill="#000"/><use href="#r34" x="538" y="783" fill="#000"/><use href="#r2c" x="544" y="783" fill="#000"/><use href="#r49" x="556" y="783" fill="#000"/><use href="#r50" x="562" y="783" fill="#000"/><use href="#r5730" x="568" y="783" fill="#000"/><use href="#r5740" x="580" y="783" fill="#000"/><use href="#r4e3a" x="592" y="783" fill="#000"/><use href="#r31" x="610" y="783" fill="#000"/><use href="#r39" x="616" y="783" fill="#000"/><use href="#r32" x="622" y="783" fill="#000"/><use href="#r2e" x="628" y="783" fill="#000"/><use href="#r31" x="634" y="783" fill="#000"/><use href="#r36" x="640" y="783" fill="#000"/><use href="#r38" x="646" y="783" fill="#000"/><use href="#r2e" x="652" y="783" fill="#000"/><use href="#r31" x="658" y="783" fill="#000"/><use href="#r2e" x="664" y="783" fill="#000"/><use href="#r31" x="670" y="783" fill="#000"/><use href="#r29" x="676" y="783" fill="#000"/><use href="#r31" x="698" y="783" fill="#000"/><use href="#r39" x="704" y="783" fill="#000"/><use href="#r32" x="710" y="783" fill="#000"/><use href="#r2e" x="716" y="783" fill="#000"/><use href="#r31" x="722" y="783" fill="#000"/><use href="#r36" x="728" y="783" fill="#000"/><use href="#r38" x="734" y="783" fill="#000"/><use href="#r2e" x="740" y="783" fill="#000"/><use href="#r31" x="746" y="783" fill="#000"/><use href="#r2e" x="752" y="783" fill="#000"/><use href="#r31" x="758" y="783" fill="#000"/><use href="#r30" x="838" y="783" fill="#000"/><use href="#r38" x="844" y="783" fill="#000"/><use href="#r3a" x="850" y="783" fill="#000"/><use href="#r31" x="856" y="783" fill="#000"/><use href="#r30" x="862" y="783" fill="#000"/><use href="#r3a" x="868" y="783" fill="#000"/><use href="#r37" x="874" y="783" fill="#000"/><use href="#r35" x="880" y="783" fill="#000"/><use href="#r3a" x="886" y="783" fill="#000"/><use href="#r30" x="892" y="783" fill="#000"/><use href="#r36" x="898" y="783" fill="#000"/><use href="#r3a" x="904" y="783" fill="#000"/><use href="#r31" x="910" y="783" fill="#000"/><use href="#r31" x="916" y="783" fill="#000"/><use href="#r3a" x="922" y="783" fill="#000"/><use href="#r42" x="928" y="783" fill="#000"/><use href="#r34" x="934" y="783" fill="#000"/><use href="#r31" x="998" y="783" fill="#000"/><use href="#r39" x="1004" y="783" fill="#000"/><use href="#r32" x="1010" y="783" fill="#000"/><use href="#r2e" x="1016" y="783" fill="#000"/><use href="#r31" x="1022" y="783" fill="#000"/><use href="#r36" x="1028" y="783" fill="#000"/><use href="#r38" x="1034" y="783" fill="#000"/><use href="#r2e" x="1040" y="783" fill="#000"/><use href="#r31" x="1046" y="783" fill="#000"/><use href="#r2e" x="1052" y="783" fill="#000"/><use href="#r37" x="1058" y="783" fill="#000"/><use href="#r30" x="1064" y="783" fill="#000"/><use href="#r46" x="1139" y="783" fill="#000"/><use href="#r46" x="1145" y="783" fill="#000"/><use href="#ic_warn" x="28" y="792"/><use href="#r5b89" x="78" y="802" fill="#000"/><use href="#r5168" x="90" y="802" fill="#000"/><use href="#r6570" x="178" y="802" fill="#000"/><use href="#r636e" x="190" y="802" fill="#000"/><use href="#r94fe" x="202" y="802" fill="#000"/><use href="#r8def" x="214" y="802" fill="#000"/><use href="#r5c42" x="226" y="802" fill="#000"/><use href="#r41" x="298" y="802" fill="#000"/><use href="#r52" x="304" y="802" fill="#000"/><use href="#r50" x="310" y="802" fill="#000"/><use href="#r5730" x="316" y="802" fill="#000"/><use href="#r5740" x="328" y="802" fill="#000"/><use href="#r626b" x="340" y="802" fill="#000"/><use href="#r63cf" x="352" y="802" fill="#000"/><use href="#r28" x="364" y="802" fill="#000"/><use href="#r4e3b" x="370" y="802" fill="#000"/><use href="#r673a" x="382" y="802" fill="#000"/><use href="#r7684" x="394" y="802" fill="#000"/><use href="#r4d" x="406" y="802" fill="#000"/><use href="#r41" x="412" y="802" fill="#000"/><use href="#r43" x="418" y="802" fill="#000"/><use href="#r4e3a" x="424" y="802" fill="#000"/><use href="#r30" x="442" y="802" fill="#000"/><use href="#r38" x="448" y="802" fill="#000"/><use href="#r3a" x="454" y="802" fill="#000"/><use href="#r31" x="460" y="802" fill="#000"/><use href="#r30" x="466" y="802" fill="#000"/><use href="#r3a" x="472" y="802" fill="#000"/><use href="#r37" x="478" y="802" fill="#000"/><use href="#r35" x="484" y="802" fill="#000"/><use href="#r3a" x="490" y="802" fill="#000"/><use href="#r30" x="496" y="802" fill="#000"/><use href="#r36" x="502" y="802" fill="#000"/><use href="#r3a" x="508" y="802" fill="#000"/><use href="#r31" x="514" y="802" fill="#000"/><use href="#r31" x="520" y="802" fill="#000"/><use href="#r3a" x="526" y="802" fill="#000"/><use href="#r42" x="532" y="802" fill="#000"/><use href="#r34" x="538" y="802" fill="#000"/><use href="#r2c" x="544" y="802" fill="#000"/><use href="#r49" x="556" y="802" fill="#000"/><use href="#r50" x="562" y="802" fill="#000"/><use href="#r5730" x="568" y="802" fill="#000"/><use href="#r5740" x="580" y="802" fill="#000"/><use href="#r4e3a" x="592" y="802" fill="#000"/><use href="#r31" x="610" y="802" fill="#000"/><use href="#r39" x="616" y="802" fill="#000"/><use href="#r32" x="622" y="802" fill="#000"/><use href="#r2e" x="628" y="802" fill="#000"/><use href="#r31" x="634" y="802" fill="#000"/><use href="#r36" x="640" y="802" fill="#000"/><use href="#r38" x="646" y="802" fill="#000"/><use href="#r2e" x="652" y="802" fill="#000"/><use href="#r31" x="658" y="802" fill="#000"/><use href="#r2e" x="664" y="802" fill="#000"/><use href="#r31" x="670" y="802" fill="#000"/><use href="#r29" x="676" y="802" fill="#000"/><use href="#r31" x="698" y="802" fill="#000"/><use href="#r39" x="704" y="802" fill="#000"/><use href="#r32" x="710" y="802" fill="#000"/><use href="#r2e" x="716" y="802" fill="#000"/><use href="#r31" x="722" y="802" fill="#000"/><use href="#r36" x="728" y="802" fill="#000"/><use href="#r38" x="734" y="802" fill="#000"/><use href="#r2e" x="740" y="802" fill="#000"/><use href="#r31" x="746" y="802" fill="#000"/><use href="#r2e" x="752" y="802" fill="#000"/><use href="#r31" x="758" y="802" fill="#000"/><use href="#r30" x="838" y="802" fill="#000"/><use href="#r38" x="844" y="802" fill="#000"/><use href="#r3a" x="850" y="802" fill="#000"/><use href="#r31" x="856" y="802" fill="#000"/><use href="#r30" x="862" y="802" fill="#000"/><use href="#r3a" x="868" y="802" fill="#000"/><use href="#r37" x="874" y="802" fill="#000"/><use href="#r35" x="880" y="802" fill="#000"/><use href="#r3a" x="886" y="802" fill="#000"/><use href="#r30" x="892" y="802" fill="#000"/><use href="#r36" x="898" y="802" fill="#000"/><use href="#r3a" x="904" y="802" fill="#000"/><use href="#r31" x="910" y="802" fill="#000"/><use href="#r31" x="916" y="802" fill="#000"/><use href="#r3a" x="922" y="802" fill="#000"/><use href="#r42" x="928" y="802" fill="#000"/><use href="#r34" x="934" y="802" fill="#000"/><use href="#r31" x="998" y="802" fill="#000"/><use href="#r39" x="1004" y="802" fill="#000"/><use href="#r32" x="1010" y="802" fill="#000"/><use href="#r2e" x="1016" y="802" fill="#000"/><use href="#r31" x="1022" y="802" fill="#000"/><use href="#r36" x="1028" y="802" fill="#000"/><use href="#r38" x="1034" y="802" fill="#000"/><use href="#r2e" x="1040" y="802" fill="#000"/><use href="#r31" x="1046" y="802" fill="#000"/><use href="#r2e" x="1052" y="802" fill="#000"/><use href="#r39" x="1058" y="802" fill="#000"/><use href="#r32" x="1064" y="802" fill="#000"/><use href="#r46" x="1139" y="802" fill="#000"/><use href="#r46" x="1145" y="802" fill="#000"/><use href="#ic_warn" x="28" y="811"/><use href="#r5b89" x="78" y="821" fill="#000"/><use href="#r5168" x="90" y="821" fill="#000"/><use href="#r6570" x="178" y="821" fill="#000"/><use href="#r636e" x="190" y="821" fill="#000"/><use href="#r94fe" x="202" y="821" fill="#000"/><use href="#r8def" x="214" y="821" fill="#000"/><use href="#r5c42" x="226" y="821" fill="#000"/><use href="#r41" x="298" y="821" fill="#000"/><use href="#r52" x="304" y="821" fill="#000"/><use href="#r50" x="310" y="821" fill="#000"/><use href="#r5730" x="316" y="821" fill="#000"/><use href="#r5740" x="328" y="821" fill="#000"/><use href="#r626b" x="340" y="821" fill="#000"/><use href="#r63cf" x="352" y="821" fill="#000"/><use href="#r28" x="364" y="821" fill="#000"/><use href="#r4e3b" x="370" y="821" fill="#000"/><use href="#r673a" x="382" y="821" fill="#000"/><use href="#r7684" x="394" y="821" fill="#000"/><use href="#r4d" x="406" y="821" fill="#000"/><use href="#r41" x="412" y="821" fill="#000"/><use href="#r43" x="418" y="821" fill="#000"/><use href="#r4e3a" x="424" y="821" fill="#000"/><use href="#r30" x="442" y="821" fill="#000"/><use href="#r38" x="448" y="821" fill="#000"/><use href="#r3a" x="454" y="821" fill="#000"/><use href="#r31" x="460" y="821" fill="#000"/><use href="#r30" x="466" y="821" fill="#000"/><use href="#r3a" x="472" y="821" fill="#000"/><use href="#r37" x="478" y="821" fill="#000"/><use href="#r35" x="484" y="821" fill="#000"/><use href="#r3a" x="490" y="821" fill="#000"/><use href="#r30" x="496" y="821" fill="#000"/><use href="#r36" x="502" y="821" fill="#000"/><use href="#r3a" x="508" y="821" fill="#000"/><use href="#r31" x="514" y="821" fill="#000"/><use href="#r31" x="520" y="821" fill="#000"/><use href="#r3a" x="526" y="821" fill="#000"/><use href="#r42" x="532" y="821" fill="#000"/><use href="#r34" x="538" y="821" fill="#000"/><use href="#r2c" x="544" y="821" fill="#000"/><use href="#r49" x="556" y="821" fill="#000"/><use href="#r50" x="562" y="821" fill="#000"/><use href="#r5730" x="568" y="821" fill="#000"/><use href="#r5740" x="580" y="821" fill="#000"/><use href="#r4e3a" x="592" y="821" fill="#000"/><use href="#r31" x="610" y="821" fill="#000"/><use href="#r39" x="616" y="821" fill="#000"/><use href="#r32" x="622" y="821" fill="#000"/><use href="#r2e" x="628" y="821" fill="#000"/><use href="#r31" x="634" y="821" fill="#000"/><use href="#r36" x="640" y="821" fill="#000"/><use href="#r38" x="646" y="821" fill="#000"/><use href="#r2e" x="652" y="821" fill="#000"/><use href="#r31" x="658" y="821" fill="#000"/><use href="#r2e" x="664" y="821" fill="#000"/><use href="#r31" x="670" y="821" fill="#000"/><use href="#r29" x="676" y="821" fill="#000"/><use href="#r31" x="698" y="821" fill="#000"/><use href="#r39" x="704" y="821" fill="#000"/><use href="#r32" x="710" y="821" fill="#000"/><use href="#r2e" x="716" y="821" fill="#000"/><use href="#r31" x="722" y="821" fill="#000"/><use href="#r36" x="728" y="821" fill="#000"/><use href="#r38" x="734" y="821" fill="#000"/><use href="#r2e" x="740" y="821" fill="#000"/><use href="#r31" x="746" y="821" fill="#000"/><use href="#r2e" x="752" y="821" fill="#000"/><use href="#r31" x="758" y="821" fill="#000"/><use href="#r30" x="838" y="821" fill="#000"/><use href="#r38" x="844" y="821" fill="#000"/><use href="#r3a" x="850" y="821" fill="#000"/><use href="#r31" x="856" y="821" fill="#000"/><use href="#r30" x="862" y="821" fill="#000"/><use href="#r3a" x="868" y="821" fill="#000"/><use href="#r37" x="874" y="821" fill="#000"/><use href="#r35" x="880" y="821" fill="#000"/><use href="#r3a" x="886" y="821" fill="#000"/><use href="#r30" x="892" y="821" fill="#000"/><use href="#r36" x="898" y="821" fill="#000"/><use href="#r3a" x="904" y="821" fill="#000"/><use href="#r31" x="910" y="821" fill="#000"/><use href="#r31" x="916" y="821" fill="#000"/><use href="#r3a" x="922" y="821" fill="#000"/><use href="#r42" x="928" y="821" fill="#000"/><use href="#r34" x="934" y="821" fill="#000"/><use href="#r31" x="998" y="821" fill="#000"/><use href="#r39" x="1004" y="821" fill="#000"/><use href="#r32" x="1010" y="821" fill="#000"/><use href="#r2e" x="1016" y="821" fill="#000"/><use href="#r31" x="1022" y="821" fill="#000"/><use href="#r36" x="1028" y="821" fill="#000"/><use href="#r38" x="1034" y="821" fill="#000"/><use href="#r2e" x="1040" y="821" fill="#000"/><use href="#r31" x="1046" y="821" fill="#000"/><use href="#r2e" x="1052" y="821" fill="#000"/><use href="#r31" x="1058" y="821" fill="#000"/><use href="#r33" x="1064" y="821" fill="#000"/><use href="#r46" x="1139" y="821" fill="#000"/><use href="#r46" x="1145" y="821" fill="#000"/><use href="#ic_settings" x="9" y="51"/><use href="#ic_save" x="37" y="51"/><use href="#ic_mon_arrow" x="66" y="51"/><use href="#ic_mon_cross" x="88" y="51"/><use href="#ic_refresh" x="110" y="51"/><use href="#ic_drop" x="130" y="57"/><use href="#ic_save" x="592" y="51"/><use href="#ic_filter" x="621" y="51"/><use href="#ic_drop" x="637" y="57"/><use href="#ic_table" x="649" y="50"/><use href="#ic_drop" x="666" y="57"/><use href="#ic_refresh" x="685" y="51"/><use href="#ic_drop" x="705" y="57"/><use href="#ic_save" x="9" y="464"/><use href="#ic_filter" x="38" y="464"/><use href="#ic_drop" x="54" y="470"/><use href="#ic_hier" x="66" y="463"/><use href="#ic_drop" x="83" y="470"/><use href="#ic_refresh" x="102" y="464"/><use href="#ic_drop" x="122" y="470"/></g>
<g shape-rendering="crispEdges"><rect x="1147" y="484" width="17" height="346" fill="url(#gSbV)" /><rect x="1148.5" y="484.5" width="14" height="15" rx="2" fill="url(#gSbBtnV)" stroke="#f6f8fd" stroke-width="1"/><path d="M1149.5 500.5 H1161.5" stroke="#b4b9c6" stroke-width="1"/><rect x="1148.5" y="501.5" width="14" height="18" rx="2" fill="url(#gSbBtnV)" stroke="#f6f8fd" stroke-width="1"/><path d="M1149.5 520.5 H1161.5" stroke="#b4b9c6" stroke-width="1"/><rect x="1148.5" y="813.5" width="14" height="15" rx="2" fill="url(#gSbBtnV)" stroke="#f6f8fd" stroke-width="1"/><path d="M1149.5 829.5 H1161.5" stroke="#b4b9c6" stroke-width="1"/><path d="M1151.5 495.5 L1155.5 491 L1159.5 495.5" stroke="#46598a" stroke-width="2.3" fill="none"/><path d="M1151.5 819 L1155.5 823.5 L1159.5 819" stroke="#46598a" stroke-width="2.3" fill="none"/><rect x="1152" y="507" width="7" height="1" fill="#a8b8dc" /><rect x="1152" y="509" width="7" height="1" fill="#a8b8dc" /><rect x="1152" y="511" width="7" height="1" fill="#a8b8dc" /><rect x="1152" y="513" width="7" height="1" fill="#a8b8dc" /><rect x="1" y="830" width="1146" height="18" fill="url(#gSbH)" /><rect x="2.5" y="831.5" width="15" height="14" rx="2" fill="url(#gSbBtnH)" stroke="#f6f8fd" stroke-width="1"/><rect x="19.5" y="831.5" width="984" height="14" rx="2" fill="url(#gSbBtnH)" stroke="#f6f8fd" stroke-width="1"/><rect x="1130.5" y="831.5" width="15" height="14" rx="2" fill="url(#gSbBtnH)" stroke="#f6f8fd" stroke-width="1"/><rect x="1147" y="830" width="17" height="18" fill="#efece2" /><path d="M12 834.5 L7.5 838.5 L12 842.5" stroke="#46598a" stroke-width="2.3" fill="none"/><path d="M1136 834.5 L1140.5 838.5 L1136 842.5" stroke="#46598a" stroke-width="2.3" fill="none"/><rect x="1152" y="845" width="9" height="1" fill="#555" /><rect x="508" y="835" width="1" height="7" fill="#a4b4da" /><rect x="510" y="835" width="1" height="7" fill="#a4b4da" /><rect x="512" y="835" width="1" height="7" fill="#a4b4da" /><rect x="514" y="835" width="1" height="7" fill="#a4b4da" /><rect x="0" y="830" width="1" height="18" fill="#55504c" /><rect x="1" y="830" width="1" height="18" fill="#8f8a86" /><rect x="0" y="848" width="1166" height="1" fill="#3d4d6a" /></g>
</svg>
<div class="tl"><span style="left:26px;top:6px">我的图表</span><span style="left:86px;top:6px">概要</span><span style="left:176px;top:6px">协议</span><span style="left:211px;top:6px">物理端点</span><span style="left:270px;top:6px">IP端点</span><span style="left:319px;top:6px">物理会话</span><span style="left:379px;top:6px">IP会话</span><span style="left:427px;top:6px">TCP会话</span><span style="left:481px;top:6px">UDP会话</span><span style="left:535px;top:6px">矩阵</span><span style="left:570px;top:6px">数据包</span><span style="left:619px;top:6px">日志</span><span style="left:655px;top:6px">报表</span><span style="left:122px;top:6px">诊断</span><span style="left:8px;top:28px;font-weight:bold">诊断条目</span><span style="left:496px;top:51px;font-weight:bold">全面分析</span><span style="left:561px;top:51px">15</span><span style="left:8px;top:74px">名字</span><span style="left:391px;top:74px">数量</span><span style="left:22px;top:93px;font-weight:bold">所有诊断</span><span style="left:372px;top:93px;font-weight:bold">36,991</span><span style="left:22px;top:112px;font-weight:bold">应用层</span><span style="left:400px;top:112px;font-weight:bold">24</span><span style="left:60px;top:131px">DNS服务器慢响应</span><span style="left:407px;top:131px">2</span><span style="left:60px;top:150px">HTTP 客户端错误</span><span style="left:407px;top:150px">3</span><span style="left:60px;top:169px">HTTP 请求没找到</span><span style="left:401px;top:169px">19</span><span style="left:22px;top:188px;font-weight:bold">传输层</span><span style="left:379px;top:188px;font-weight:bold">2,097</span><span style="left:60px;top:207px">TCP 连接被拒绝</span><span style="left:401px;top:207px">55</span><span style="left:60px;top:226px">TCP 重复的连接尝试</span><span style="left:395px;top:226px">391</span><span style="left:60px;top:245px">TCP 慢应答</span><span style="left:383px;top:245px">1,651</span><span style="left:22px;top:264px;font-weight:bold">网络层</span><span style="left:372px;top:264px;font-weight:bold">29,099</span><span style="left:60px;top:283px">IP 地址冲突</span><span style="left:377px;top:283px">28,905</span><span style="left:60px;top:302px">ICMP 端口不可达</span><span style="left:395px;top:302px">194</span><span style="left:22px;top:321px;font-weight:bold">数据链路层</span><span style="left:379px;top:321px;font-weight:bold">5,771</span><span style="left:60px;top:340px">ARP 扫描</span><span style="left:383px;top:340px">5,753</span><span style="left:60px;top:359px">ARP 太多的主动应答</span><span style="left:401px;top:359px">18</span><span style="left:591px;top:28px;font-weight:bold">诊断发生地址</span><span style="left:1104px;top:51px;font-weight:bold">统计</span><span style="left:1131px;top:51px;font-weight:bold">:</span><span style="left:1149px;top:51px">9</span><span style="left:591px;top:74px">名字</span><span style="left:741px;top:74px">物理地址</span><span style="left:861px;top:74px">IP地址</span><span style="left:1004px;top:74px">数量</span><span style="left:597px;top:93px">08:10:75:06:11:B4</span><span style="left:741px;top:93px">08:10:75:06:11:B4</span><span style="left:861px;top:93px">-</span><span style="left:1010px;top:93px">960</span><span style="left:597px;top:112px">40:16:9F:67:A8:86</span><span style="left:741px;top:112px">40:16:9F:67:A8:86</span><span style="left:861px;top:112px">-</span><span style="left:1010px;top:112px">475</span><span style="left:597px;top:131px">E0:05:C5:D3:2B:6C</span><span style="left:741px;top:131px">E0:05:C5:D3:2B:6C</span><span style="left:861px;top:131px">-</span><span style="left:1010px;top:131px">474</span><span style="left:597px;top:150px">00:27:19:67:FD:A0</span><span style="left:741px;top:150px">00:27:19:67:FD:A0</span><span style="left:861px;top:150px">-</span><span style="left:1010px;top:150px">475</span><span style="left:597px;top:169px">08:10:75:C3:B6:19</span><span style="left:741px;top:169px">08:10:75:C3:B6:19</span><span style="left:861px;top:169px">-</span><span style="left:1010px;top:169px">962</span><span style="left:597px;top:188px">08:10:75:0C:85:5E</span><span style="left:741px;top:188px">08:10:75:0C:85:5E</span><span style="left:861px;top:188px">-</span><span style="left:1010px;top:188px">961</span><span style="left:597px;top:207px">FF:FF:FF:FF:FF:FF</span><span style="left:741px;top:207px">FF:FF:FF:FF:FF:FF</span><span style="left:861px;top:207px">-</span><span style="left:998px;top:207px">5,753</span><span style="left:597px;top:226px">00:3C:50:20:38:3D</span><span style="left:741px;top:226px">00:3C:50:20:38:3D</span><span style="left:861px;top:226px">-</span><span style="left:998px;top:226px">1,445</span><span style="left:597px;top:245px">BC:AE:C5:85:11:2A</span><span style="left:741px;top:245px">BC:AE:C5:85:11:2A</span><span style="left:861px;top:245px">-</span><span style="left:1022px;top:245px">1</span><span style="left:8px;top:441px;font-weight:bold">诊断事件</span><span style="left:1073px;top:464px;font-weight:bold">诊断事件</span><span style="left:1138px;top:464px">268</span><span style="left:13px;top:487px">严重程度</span><span style="left:78px;top:487px">类型</span><span style="left:178px;top:487px">层别</span><span style="left:298px;top:487px">事件描述</span><span style="left:698px;top:487px">源IP地址</span><span style="left:838px;top:487px">源物理地址</span><span style="left:998px;top:487px">目标IP地址</span><span style="left:1139px;top:487px">目</span><span style="left:78px;top:506px">安全</span><span style="left:178px;top:506px">数据链路层</span><span style="left:298px;top:506px">ARP地址扫描(主机的MAC为 08:10:75:06:11:B4, IP地址为 192.168.1.1)</span><span style="left:698px;top:506px">192.168.1.1</span><span style="left:838px;top:506px">08:10:75:06:11:B4</span><span style="left:998px;top:506px">192.168.1.65</span><span style="left:1139px;top:506px">FF</span><span style="left:78px;top:525px">安全</span><span style="left:178px;top:525px">数据链路层</span><span style="left:298px;top:525px">ARP地址扫描(主机的MAC为 08:10:75:06:11:B4, IP地址为 192.168.1.1)</span><span style="left:698px;top:525px">192.168.1.1</span><span style="left:838px;top:525px">08:10:75:06:11:B4</span><span style="left:998px;top:525px">192.168.1.87</span><span style="left:1139px;top:525px">FF</span><span style="left:78px;top:544px">安全</span><span style="left:178px;top:544px">数据链路层</span><span style="left:298px;top:544px">ARP地址扫描(主机的MAC为 08:10:75:06:11:B4, IP地址为 192.168.1.1)</span><span style="left:698px;top:544px">192.168.1.1</span><span style="left:838px;top:544px">08:10:75:06:11:B4</span><span style="left:998px;top:544px">192.168.1.8</span><span style="left:1139px;top:544px">FF</span><span style="left:78px;top:563px">安全</span><span style="left:178px;top:563px">数据链路层</span><span style="left:298px;top:563px">ARP地址扫描(主机的MAC为 08:10:75:06:11:B4, IP地址为 192.168.1.1)</span><span style="left:698px;top:563px">192.168.1.1</span><span style="left:838px;top:563px">08:10:75:06:11:B4</span><span style="left:998px;top:563px">192.168.1.30</span><span style="left:1139px;top:563px">FF</span><span style="left:78px;top:582px">安全</span><span style="left:178px;top:582px">数据链路层</span><span style="left:298px;top:582px">ARP地址扫描(主机的MAC为 08:10:75:06:11:B4, IP地址为 192.168.1.1)</span><span style="left:698px;top:582px">192.168.1.1</span><span style="left:838px;top:582px">08:10:75:06:11:B4</span><span style="left:998px;top:582px">192.168.1.52</span><span style="left:1139px;top:582px">FF</span><span style="left:78px;top:601px">安全</span><span style="left:178px;top:601px">数据链路层</span><span style="left:298px;top:601px">ARP地址扫描(主机的MAC为 08:10:75:06:11:B4, IP地址为 192.168.1.1)</span><span style="left:698px;top:601px">192.168.1.1</span><span style="left:838px;top:601px">08:10:75:06:11:B4</span><span style="left:998px;top:601px">192.168.1.74</span><span style="left:1139px;top:601px">FF</span><span style="left:78px;top:620px">安全</span><span style="left:178px;top:620px">数据链路层</span><span style="left:298px;top:620px">ARP地址扫描(主机的MAC为 08:10:75:06:11:B4, IP地址为 192.168.1.1)</span><span style="left:698px;top:620px">192.168.1.1</span><span style="left:838px;top:620px">08:10:75:06:11:B4</span><span style="left:998px;top:620px">192.168.1.96</span><span style="left:1139px;top:620px">FF</span><span style="left:78px;top:639px">安全</span><span style="left:178px;top:639px">数据链路层</span><span style="left:298px;top:639px">ARP地址扫描(主机的MAC为 08:10:75:06:11:B4, IP地址为 192.168.1.1)</span><span style="left:698px;top:639px">192.168.1.1</span><span style="left:838px;top:639px">08:10:75:06:11:B4</span><span style="left:998px;top:639px">192.168.1.17</span><span style="left:1139px;top:639px">FF</span><span style="left:78px;top:658px">安全</span><span style="left:178px;top:658px">数据链路层</span><span style="left:298px;top:658px">ARP地址扫描(主机的MAC为 08:10:75:06:11:B4, IP地址为 192.168.1.1)</span><span style="left:698px;top:658px">192.168.1.1</span><span style="left:838px;top:658px">08:10:75:06:11:B4</span><span style="left:998px;top:658px">192.168.1.39</span><span style="left:1139px;top:658px">FF</span><span style="left:78px;top:677px">安全</span><span style="left:178px;top:677px">数据链路层</span><span style="left:298px;top:677px">ARP地址扫描(主机的MAC为 08:10:75:06:11:B4, IP地址为 192.168.1.1)</span><span style="left:698px;top:677px">192.168.1.1</span><span style="left:838px;top:677px">08:10:75:06:11:B4</span><span style="left:998px;top:677px">192.168.1.61</span><span style="left:1139px;top:677px">FF</span><span style="left:78px;top:696px">安全</span><span style="left:178px;top:696px">数据链路层</span><span style="left:298px;top:696px">ARP地址扫描(主机的MAC为 08:10:75:06:11:B4, IP地址为 192.168.1.1)</span><span style="left:698px;top:696px">192.168.1.1</span><span style="left:838px;top:696px">08:10:75:06:11:B4</span><span style="left:998px;top:696px">192.168.1.83</span><span style="left:1139px;top:696px">FF</span><span style="left:78px;top:715px">安全</span><span style="left:178px;top:715px">数据链路层</span><span style="left:298px;top:715px">ARP地址扫描(主机的MAC为 08:10:75:06:11:B4, IP地址为 192.168.1.1)</span><span style="left:698px;top:715px">192.168.1.1</span><span style="left:838px;top:715px">08:10:75:06:11:B4</span><span style="left:998px;top:715px">192.168.1.4</span><span style="left:1139px;top:715px">FF</span><span style="left:78px;top:734px">安全</span><span style="left:178px;top:734px">数据链路层</span><span style="left:298px;top:734px">ARP地址扫描(主机的MAC为 08:10:75:06:11:B4, IP地址为 192.168.1.1)</span><span style="left:698px;top:734px">192.168.1.1</span><span style="left:838px;top:734px">08:10:75:06:11:B4</span><span style="left:998px;top:734px">192.168.1.26</span><span style="left:1139px;top:734px">FF</span><span style="left:78px;top:753px">安全</span><span style="left:178px;top:753px">数据链路层</span><span style="left:298px;top:753px">ARP地址扫描(主机的MAC为 08:10:75:06:11:B4, IP地址为 192.168.1.1)</span><span style="left:698px;top:753px">192.168.1.1</span><span style="left:838px;top:753px">08:10:75:06:11:B4</span><span style="left:998px;top:753px">192.168.1.48</span><span style="left:1139px;top:753px">FF</span><span style="left:78px;top:772px">安全</span><span style="left:178px;top:772px">数据链路层</span><span style="left:298px;top:772px">ARP地址扫描(主机的MAC为 08:10:75:06:11:B4, IP地址为 192.168.1.1)</span><span style="left:698px;top:772px">192.168.1.1</span><span style="left:838px;top:772px">08:10:75:06:11:B4</span><span style="left:998px;top:772px">192.168.1.70</span><span style="left:1139px;top:772px">FF</span><span style="left:78px;top:791px">安全</span><span style="left:178px;top:791px">数据链路层</span><span style="left:298px;top:791px">ARP地址扫描(主机的MAC为 08:10:75:06:11:B4, IP地址为 192.168.1.1)</span><span style="left:698px;top:791px">192.168.1.1</span><span style="left:838px;top:791px">08:10:75:06:11:B4</span><span style="left:998px;top:791px">192.168.1.92</span><span style="left:1139px;top:791px">FF</span><span style="left:78px;top:810px">安全</span><span style="left:178px;top:810px">数据链路层</span><span style="left:298px;top:810px">ARP地址扫描(主机的MAC为 08:10:75:06:11:B4, IP地址为 192.168.1.1)</span><span style="left:698px;top:810px">192.168.1.1</span><span style="left:838px;top:810px">08:10:75:06:11:B4</span><span style="left:998px;top:810px">192.168.1.13</span><span style="left:1139px;top:810px">FF</span></div>
</body></html>
